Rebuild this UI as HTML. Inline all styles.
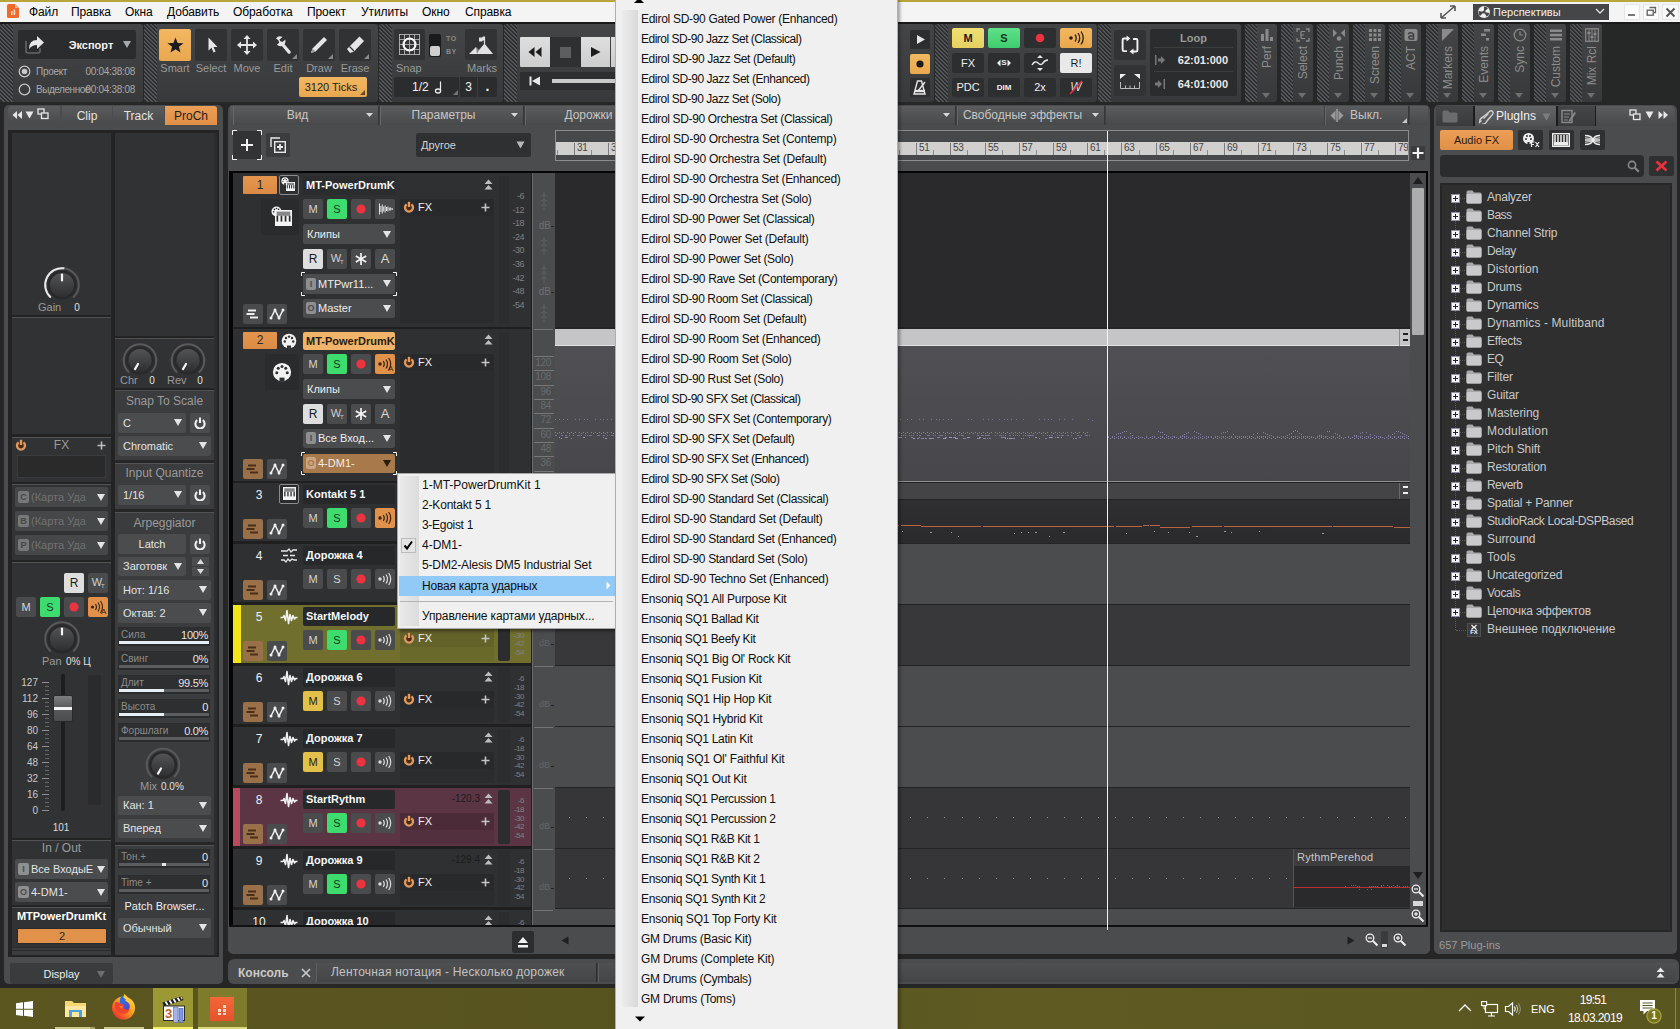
<!DOCTYPE html>
<html lang="ru"><head><meta charset="utf-8"><title>Cakewalk</title>
<style>
html,body{margin:0;padding:0}
body{width:1680px;height:1029px;position:relative;overflow:hidden;background:#262626;
font-family:"Liberation Sans",sans-serif;font-size:12px;color:#ddd}
body div,body svg{position:absolute;box-sizing:border-box}
.hatch{background:repeating-linear-gradient(45deg,#55575a 0,#55575a 0.9px,#2c2e30 1.1px,#2c2e30 2.7px,#55575a 2.83px)}
.mod{background:linear-gradient(#444546,#38393a);border-radius:3px}
.btn{background:#323334;border-radius:2px}
.dd{background:#4a4c4e;border-radius:2px}
.b{font-weight:bold}
.c{text-align:center}
</style></head>
<body>
<div style="left:0px;top:0px;width:1680px;height:22px;background:#f4f4f4;"></div>
<div style="left:0px;top:0px;width:1680px;height:2px;background:#b9a63a;"></div>
<svg style="left:6px;top:3px;" width="14" height="16" viewBox="0 0 14 16"><path d="M1 2.5Q1 1 2.5 1H9l4 4v8.5Q13 15 11.5 15h-9Q1 15 1 13.5Z" fill="#f06a2a"/><path d="M9 1l4 4H9Z" fill="#f9b08a"/><rect x="5" y="8" width="1.6" height="4" fill="#ffd9c4"/><rect x="7.6" y="6.5" width="1.6" height="5.5" fill="#ffd9c4"/></svg>
<div style="left:29px;top:4px;font-size:12px;color:#000;white-space:nowrap;height:17px;line-height:17px;letter-spacing:-0.100px;">Файл</div>
<div style="left:71px;top:4px;font-size:12px;color:#000;white-space:nowrap;height:17px;line-height:17px;letter-spacing:-0.100px;">Правка</div>
<div style="left:125px;top:4px;font-size:12px;color:#000;white-space:nowrap;height:17px;line-height:17px;letter-spacing:-0.100px;">Окна</div>
<div style="left:167px;top:4px;font-size:12px;color:#000;white-space:nowrap;height:17px;line-height:17px;letter-spacing:-0.100px;">Добавить</div>
<div style="left:233px;top:4px;font-size:12px;color:#000;white-space:nowrap;height:17px;line-height:17px;letter-spacing:-0.100px;">Обработка</div>
<div style="left:307px;top:4px;font-size:12px;color:#000;white-space:nowrap;height:17px;line-height:17px;letter-spacing:-0.100px;">Проект</div>
<div style="left:361px;top:4px;font-size:12px;color:#000;white-space:nowrap;height:17px;line-height:17px;letter-spacing:-0.100px;">Утилиты</div>
<div style="left:422px;top:4px;font-size:12px;color:#000;white-space:nowrap;height:17px;line-height:17px;letter-spacing:-0.100px;">Окно</div>
<div style="left:465px;top:4px;font-size:12px;color:#000;white-space:nowrap;height:17px;line-height:17px;letter-spacing:-0.100px;">Справка</div>
<svg style="left:1439px;top:4px;" width="18" height="16" viewBox="0 0 18 16"><path d="M2 14L16 2M2 14v-5M2 14h5M16 2v5M16 2h-5" stroke="#555" stroke-width="1.6" fill="none"/></svg>
<div style="left:1473px;top:4px;width:136px;height:16px;background:#454647;"></div>
<svg style="left:1477px;top:5px;" width="14" height="14" viewBox="0 0 14 14"><circle cx="7" cy="7" r="6" fill="#eee"/><path d="M7 7L7 1.5A5.5 5.5 0 0 1 11 3.2Z M7 7L12.4 8A5.5 5.5 0 0 1 9.7 11.8Z M7 7L3 11A5.5 5.5 0 0 1 1.6 6Z" fill="#454647"/><circle cx="7" cy="7" r="1.6" fill="#454647"/></svg>
<div style="left:1493px;top:4px;font-size:11px;color:#f0f0f0;white-space:nowrap;height:16px;line-height:16px;">Перспективы</div>
<svg style="left:1595px;top:8px;" width="10" height="8" viewBox="0 0 10 8"><path d="M1 1l4 4 4-4" stroke="#ddd" stroke-width="1.3" fill="none"/></svg>
<div style="left:1624px;top:4px;width:16px;height:16px;background:#fbfbfb;border:1px solid #e6e6e6;"></div>
<div style="left:1628px;top:14px;width:7px;height:2px;background:#777;"></div>
<div style="left:1643px;top:4px;width:16px;height:16px;background:#fbfbfb;border:1px solid #e6e6e6;"></div>
<svg style="left:1646px;top:6px;" width="11" height="11" viewBox="0 0 11 11"><path d="M3.5 1.5h6v5h-2" stroke="#666" stroke-width="1.3" fill="none"/><rect x="1.2" y="4.2" width="6" height="5" stroke="#666" stroke-width="1.4" fill="none"/></svg>
<div style="left:1662px;top:4px;width:17px;height:16px;background:#fbfbfb;border:1px solid #e6e6e6;"></div>
<svg style="left:1665px;top:7px;" width="11" height="11" viewBox="0 0 11 11"><path d="M1.5 1.5l8 8M9.5 1.5l-8 8" stroke="#555" stroke-width="2" fill="none"/></svg>
<div style="left:0px;top:22px;width:1680px;height:82px;background:#262727;"></div>
<div style="left:0px;top:22px;width:1680px;height:2px;background:#1a1a1a;"></div>
<div class="mod" style="left:0px;top:24px;width:143px;height:78px;"></div>
<div class="hatch" style="left:0px;top:24px;width:13px;height:78px;border-radius:3px 0 0 3px;"></div>
<div style="left:18px;top:30px;width:118px;height:29px;background:#2b2c2d;border-radius:2px;"></div>
<svg style="left:22px;top:33px;" width="24" height="24" viewBox="0 0 24 24"><path d="M4 8v10q0 2 2 2h10q2 0 2-2v-3" stroke="#666" stroke-width="1.6" fill="none"/><path d="M7 16q0-9 8-9V3l7 6.5-7 6.5v-4q-5 0-8 4z" fill="#e8e8e8"/></svg>
<div class="b" style="left:54px;top:38px;font-size:11px;color:#f4f4f4;white-space:nowrap;width:74px;height:15px;line-height:15px;text-align:center;">Экспорт</div>
<svg style="left:122px;top:40px;" width="10" height="9" viewBox="0 0 10 9"><path d="M1 1h8L5 8z" fill="#aaa"/></svg>
<svg style="left:18px;top:65px;" width="13" height="13" viewBox="0 0 13 13"><circle cx="6.5" cy="6.5" r="5.3" stroke="#c8c8c8" stroke-width="1.2" fill="none"/><circle cx="6.5" cy="6.5" r="2.8" fill="#c8c8c8"/></svg>
<svg style="left:18px;top:83px;" width="13" height="13" viewBox="0 0 13 13"><circle cx="6.5" cy="6.5" r="5.3" stroke="#c8c8c8" stroke-width="1.2" fill="none"/></svg>
<div style="left:36px;top:65px;font-size:10px;color:#a9a9a9;white-space:nowrap;height:13px;line-height:13px;letter-spacing:-0.3px;">Проект</div>
<div style="left:36px;top:83px;font-size:10px;color:#a9a9a9;white-space:nowrap;height:13px;line-height:13px;letter-spacing:-0.45px;">Выделенное</div>
<div style="left:85px;top:65px;font-size:10px;color:#a9a9a9;white-space:nowrap;width:50px;height:13px;line-height:13px;text-align:right;letter-spacing:-0.3px;">00:04:38:08</div>
<div style="left:85px;top:83px;font-size:10px;color:#a9a9a9;white-space:nowrap;width:50px;height:13px;line-height:13px;text-align:right;letter-spacing:-0.3px;">00:04:38:08</div>
<div class="mod" style="left:144px;top:24px;width:234px;height:78px;"></div>
<div class="hatch" style="left:144px;top:24px;width:13px;height:78px;border-radius:3px 0 0 3px;"></div>
<div style="left:159px;top:29px;width:32px;height:32px;background:linear-gradient(#f3b761,#e9a84f);border-radius:2px;"></div>
<div style="left:153px;top:61px;font-size:11px;color:#9a9a9a;white-space:nowrap;width:44px;height:15px;line-height:15px;text-align:center;">Smart</div>
<div style="left:195px;top:29px;width:32px;height:32px;background:#313233;border-radius:2px;"></div>
<div style="left:189px;top:61px;font-size:11px;color:#9a9a9a;white-space:nowrap;width:44px;height:15px;line-height:15px;text-align:center;">Select</div>
<div style="left:231px;top:29px;width:32px;height:32px;background:#313233;border-radius:2px;"></div>
<div style="left:225px;top:61px;font-size:11px;color:#9a9a9a;white-space:nowrap;width:44px;height:15px;line-height:15px;text-align:center;">Move</div>
<div style="left:267px;top:29px;width:32px;height:32px;background:#313233;border-radius:2px;"></div>
<div style="left:261px;top:61px;font-size:11px;color:#9a9a9a;white-space:nowrap;width:44px;height:15px;line-height:15px;text-align:center;">Edit</div>
<svg style="left:292px;top:54px;" width="5" height="5" viewBox="0 0 5 5"><path d="M5 0v5H0z" fill="#8a8a8a"/></svg>
<div style="left:303px;top:29px;width:32px;height:32px;background:#313233;border-radius:2px;"></div>
<div style="left:297px;top:61px;font-size:11px;color:#9a9a9a;white-space:nowrap;width:44px;height:15px;line-height:15px;text-align:center;">Draw</div>
<svg style="left:328px;top:54px;" width="5" height="5" viewBox="0 0 5 5"><path d="M5 0v5H0z" fill="#8a8a8a"/></svg>
<div style="left:339px;top:29px;width:32px;height:32px;background:#313233;border-radius:2px;"></div>
<div style="left:333px;top:61px;font-size:11px;color:#9a9a9a;white-space:nowrap;width:44px;height:15px;line-height:15px;text-align:center;">Erase</div>
<svg style="left:364px;top:54px;" width="5" height="5" viewBox="0 0 5 5"><path d="M5 0v5H0z" fill="#8a8a8a"/></svg>
<svg style="left:159px;top:29px;" width="32" height="32" viewBox="0 0 32 32"><path d="M16.500 8.500l2.100 5.400 5.900.300-4.600 3.600 1.600 5.700-5-3.300-5 3.300 1.600-5.700-4.600-3.600 5.900-.300z" fill="#1b1b1b"/></svg>
<svg style="left:195px;top:29px;" width="32" height="32" viewBox="0 0 32 32"><path d="M13.500 8.500v13l3-2.800 2.100 4.800 2-.900-2.100-4.700h4z" fill="#e6e6e6"/></svg>
<svg style="left:231px;top:29px;" width="32" height="32" viewBox="0 0 32 32"><path d="M16 6l3.500 4h-2.600v5.100H22v-2.600l4 3.500-4 3.500v-2.600h-5.100V22h2.600L16 26l-3.500-4h2.600v-5.100H10v2.600L6 16l4-3.500v2.600h5.100V10h-2.600z" fill="#e6e6e6"/></svg>
<svg style="left:267px;top:29px;" width="32" height="32" viewBox="0 0 32 32"><path d="M9 9.500q2.500-3.500 6.500-1.500l-3 2.500 1 2 2.500.3 2.200-2.300q1 2.500-.7 4.700l6 7q.8 1.300-.4 2.300-1.200.8-2.200-.3l-6-7.200q-3 .8-5-1.500l2.300-1.800-.8-2.400z" fill="#e6e6e6"/></svg>
<svg style="left:303px;top:29px;" width="32" height="32" viewBox="0 0 32 32"><path d="M8 24l1.500-4.500L21 8l3 3-11.500 11.500z" fill="#e6e6e6"/><path d="M8 24l1.500-4.500 3 3z" fill="#999"/></svg>
<svg style="left:339px;top:29px;" width="32" height="32" viewBox="0 0 32 32"><path d="M8 20l3 4 4-1.500L25 12l-4.500-4.500L10 18z" fill="#e6e6e6"/><path d="M10.500 17.500l4.500 4.500" stroke="#313233" stroke-width="1.2"/></svg>
<div style="left:299px;top:77px;width:68px;height:20px;background:linear-gradient(#f3b761,#e9a84f);border-radius:2px;"></div>
<div style="left:299px;top:77px;font-size:11px;color:#222;white-space:nowrap;width:64px;height:20px;line-height:20px;text-align:center;">3120 Ticks</div>
<svg style="left:360px;top:90px;" width="5" height="5" viewBox="0 0 5 5"><path d="M5 0v5H0z" fill="#6b4a1e"/></svg>
<div class="mod" style="left:379px;top:24px;width:124px;height:78px;"></div>
<div class="hatch" style="left:379px;top:24px;width:13px;height:78px;border-radius:3px 0 0 3px;"></div>
<div style="left:394px;top:29px;width:31px;height:31px;background:#323334;border-radius:2px;"></div>
<svg style="left:394px;top:29px;" width="31" height="31" viewBox="0 0 31 31"><path d="M5.5 5v21M5 5.5h21" stroke="#b4b4b4" stroke-width="0.900"/><path d="M10.5 5v21M5 10.5h21" stroke="#b4b4b4" stroke-width="0.900"/><path d="M15.5 5v21M5 15.5h21" stroke="#b4b4b4" stroke-width="0.900"/><path d="M20.5 5v21M5 20.5h21" stroke="#b4b4b4" stroke-width="0.900"/><path d="M25.5 5v21M5 25.5h21" stroke="#b4b4b4" stroke-width="0.900"/><circle cx="15.500" cy="15.500" r="6" stroke="#f6f6f6" stroke-width="2.200" fill="none"/></svg>
<div style="left:429px;top:34px;width:12px;height:23px;background:#1b1b1b;border-radius:2px;"></div>
<div style="left:430px;top:46px;width:10px;height:10px;background:#cfcfcf;border-radius:2px;"></div>
<div class="b" style="left:446px;top:34px;font-size:7px;color:#8a8a8a;white-space:nowrap;height:9px;line-height:9px;letter-spacing:0.5px;">TO</div>
<div class="b" style="left:446px;top:47px;font-size:7px;color:#8a8a8a;white-space:nowrap;height:9px;line-height:9px;letter-spacing:0.5px;">BY</div>
<div style="left:465px;top:29px;width:32px;height:31px;background:#323334;border-radius:2px;"></div>
<svg style="left:465px;top:29px;" width="32" height="31" viewBox="0 0 32 31"><path d="M4 25l7-7 3 3 5.500-6.500L28 25z" fill="#e2e2e2"/><path d="M11 18l3 3-2 4z" fill="#323334" opacity=".55"/><path d="M19.500 15V8" stroke="#e2e2e2" stroke-width="1.2"/><path d="M14 8.500h3l1-1h2v4h-2l-1 1h-3z" fill="#e2e2e2"/></svg>
<div style="left:396px;top:61px;font-size:11px;color:#9a9a9a;white-space:nowrap;height:15px;line-height:15px;">Snap</div>
<div style="left:467px;top:61px;font-size:11px;color:#9a9a9a;white-space:nowrap;height:15px;line-height:15px;">Marks</div>
<div style="left:394px;top:77px;width:65px;height:20px;background:#2b2c2d;border-radius:2px;"></div>
<div style="left:460px;top:77px;width:17px;height:20px;background:#2b2c2d;"></div>
<div style="left:478px;top:77px;width:19px;height:20px;background:#2b2c2d;border-radius:0 2px 2px 0;"></div>
<div style="left:412px;top:77px;font-size:12px;color:#f0f0f0;white-space:nowrap;height:20px;line-height:20px;">1/2</div>
<svg style="left:434px;top:80px;" width="10" height="14" viewBox="0 0 10 14"><ellipse cx="4" cy="11" rx="2.600" ry="2" stroke="#eee" stroke-width="1.3" fill="none"/><path d="M6.500 11V1.500" stroke="#eee" stroke-width="1.2"/></svg>
<svg style="left:453px;top:90px;" width="5" height="5" viewBox="0 0 5 5"><path d="M5 0v5H0z" fill="#777"/></svg>
<div style="left:460px;top:77px;font-size:12px;color:#f0f0f0;white-space:nowrap;width:17px;height:20px;line-height:20px;text-align:center;">3</div>
<div class="b" style="left:478px;top:76px;font-size:14px;color:#f0f0f0;white-space:nowrap;width:19px;height:20px;line-height:20px;text-align:center;">.</div>
<div class="mod" style="left:504px;top:24px;width:430px;height:78px;"></div>
<div class="hatch" style="left:504px;top:24px;width:13px;height:78px;border-radius:3px 0 0 3px;"></div>
<div style="left:520px;top:37px;width:30px;height:30px;background:linear-gradient(#dfdfdf,#cdcdcd);border-radius:1px 0 0 1px;"></div>
<div style="left:550px;top:37px;width:31px;height:30px;background:#2f3031;"></div>
<div style="left:581px;top:37px;width:29px;height:30px;background:linear-gradient(#dfdfdf,#cdcdcd);"></div>
<div style="left:611px;top:37px;width:30px;height:30px;background:linear-gradient(#dfdfdf,#cdcdcd);"></div>
<svg style="left:520px;top:37px;" width="30" height="30" viewBox="0 0 30 30"><path d="M14.500 10v10l-6-5zM21.500 10v10l-6-5z" fill="#1c1c1c"/></svg>
<div style="left:560px;top:47px;width:11px;height:11px;background:#5d5e5f;"></div>
<svg style="left:581px;top:37px;" width="30" height="30" viewBox="0 0 30 30"><path d="M10 10v10l9.500-5z" fill="#1c1c1c"/></svg>
<div style="left:520px;top:72px;width:100px;height:18px;background:#2d2e2f;"></div>
<svg style="left:529px;top:76px;" width="12" height="10" viewBox="0 0 12 10"><rect x="0.500" y="0.500" width="2" height="9" fill="#e8e8e8"/><path d="M11 0.500v9L3 5z" fill="#e8e8e8"/></svg>
<div style="left:552px;top:79px;width:66px;height:4px;background:#c9c9c9;"></div>
<div style="left:910px;top:30px;width:20px;height:19px;background:#2d2e2f;border-radius:2px;"></div>
<svg style="left:910px;top:30px;" width="20" height="19" viewBox="0 0 20 19"><path d="M7 5v9l8-4.500z" fill="#e6e6e6"/></svg>
<div style="left:910px;top:54px;width:20px;height:20px;background:linear-gradient(#f3b761,#e9a84f);border-radius:2px;"></div>
<svg style="left:910px;top:54px;" width="20" height="20" viewBox="0 0 20 20"><circle cx="10" cy="10" r="3.600" fill="#1a1a1a"/></svg>
<div style="left:910px;top:78px;width:20px;height:19px;background:#2d2e2f;border-radius:2px;"></div>
<svg style="left:910px;top:78px;" width="20" height="19" viewBox="0 0 20 19"><path d="M7.500 3h4l3.500 13H4z" stroke="#e6e6e6" stroke-width="1.400" fill="none"/><path d="M5 13h10" stroke="#e6e6e6" stroke-width="2.400"/><path d="M8 13l7-9" stroke="#e6e6e6" stroke-width="1.400"/></svg>
<div class="mod" style="left:935px;top:24px;width:162px;height:78px;"></div>
<div class="hatch" style="left:935px;top:24px;width:13px;height:78px;border-radius:3px 0 0 3px;"></div>
<div style="left:952px;top:28px;width:32px;height:20px;background:linear-gradient(#f0df74,#e6d160);border-radius:2px;"></div>
<div style="left:988px;top:28px;width:32px;height:20px;background:linear-gradient(#5fe08a,#3fcd6e);border-radius:2px;"></div>
<div style="left:1024px;top:28px;width:32px;height:20px;background:#2d2e2f;border-radius:2px;"></div>
<div style="left:1060px;top:28px;width:32px;height:20px;background:linear-gradient(#f3b761,#e9a84f);border-radius:2px;"></div>
<div style="left:952px;top:53px;width:32px;height:20px;background:#2d2e2f;border-radius:2px;"></div>
<div style="left:988px;top:53px;width:32px;height:20px;background:#2d2e2f;border-radius:2px;"></div>
<div style="left:1024px;top:53px;width:32px;height:20px;background:#2d2e2f;border-radius:2px;"></div>
<div style="left:1060px;top:53px;width:32px;height:20px;background:#e9e9e9;border-radius:2px;"></div>
<div style="left:952px;top:78px;width:32px;height:19px;background:#2d2e2f;border-radius:2px;"></div>
<div style="left:988px;top:78px;width:32px;height:19px;background:#2d2e2f;border-radius:2px;"></div>
<div style="left:1024px;top:78px;width:32px;height:19px;background:#2d2e2f;border-radius:2px;"></div>
<div style="left:1060px;top:78px;width:32px;height:19px;background:#2d2e2f;border-radius:2px;"></div>
<div class="b" style="left:952px;top:28px;font-size:11px;color:#1c1c1c;white-space:nowrap;width:32px;height:20px;line-height:20px;text-align:center;">M</div>
<div class="b" style="left:988px;top:28px;font-size:11px;color:#12351f;white-space:nowrap;width:32px;height:20px;line-height:20px;text-align:center;">S</div>
<svg style="left:1024px;top:28px;" width="32" height="20" viewBox="0 0 32 20"><circle cx="16" cy="10" r="4.300" fill="#ee3340"/></svg>
<svg style="left:1060px;top:28px;" width="32" height="20" viewBox="0 0 32 20"><circle cx="11" cy="10" r="1.800" fill="#2a2012"/><path d="M15 6.500q2.500 3.500 0 7M18 5q3.500 5 0 10M21 3.500q4.500 6.500 0 13" stroke="#2a2012" stroke-width="1.300" fill="none"/></svg>
<div style="left:952px;top:53px;font-size:11px;color:#efefef;white-space:nowrap;width:32px;height:20px;line-height:20px;text-align:center;">FX</div>
<svg style="left:988px;top:53px;" width="32" height="20" viewBox="0 0 32 20"><path d="M9 10l3.500-3.500v7zM23 10l-3.500-3.500v7z" fill="#eee"/></svg>
<div class="b" style="left:988px;top:53px;font-size:8px;color:#eee;white-space:nowrap;width:32px;height:20px;line-height:20px;text-align:center;">S</div>
<svg style="left:1024px;top:53px;" width="32" height="20" viewBox="0 0 32 20"><path d="M16 2l3 3h-6zM16 18l3-3h-6z" fill="#e8e8e8"/><path d="M8 12q3-5 6-2t5 0 5-3" stroke="#e8e8e8" stroke-width="1.400" fill="none"/></svg>
<div style="left:1060px;top:53px;font-size:11px;color:#1c1c1c;white-space:nowrap;width:32px;height:20px;line-height:20px;text-align:center;">R!</div>
<div style="left:952px;top:78px;font-size:11px;color:#efefef;white-space:nowrap;width:32px;height:19px;line-height:19px;text-align:center;">PDC</div>
<div class="b" style="left:988px;top:78px;font-size:8px;color:#efefef;white-space:nowrap;width:32px;height:19px;line-height:19px;text-align:center;">DIM</div>
<div style="left:1024px;top:78px;font-size:11px;color:#efefef;white-space:nowrap;width:32px;height:19px;line-height:19px;text-align:center;">2x</div>
<div style="left:1060px;top:78px;font-size:12px;color:#d8d8d8;white-space:nowrap;width:32px;height:19px;line-height:19px;text-align:center;font-style:italic;">W</div>
<svg style="left:1060px;top:78px;" width="32" height="19" viewBox="0 0 32 19"><path d="M10 16L22 3" stroke="#e0303c" stroke-width="1.600"/></svg>
<div class="mod" style="left:1098px;top:24px;width:143px;height:78px;"></div>
<div class="hatch" style="left:1098px;top:24px;width:13px;height:78px;border-radius:3px 0 0 3px;"></div>
<div style="left:1114px;top:30px;width:32px;height:30px;background:#323334;border-radius:2px;"></div>
<div style="left:1114px;top:65px;width:32px;height:31px;background:#323334;border-radius:2px;"></div>
<svg style="left:1114px;top:30px;" width="32" height="30" viewBox="0 0 32 30"><g transform="translate(2.100 2.400) scale(0.870)"><path d="M13 7H9q-1.500 0-1.500 1.500V20q0 1.500 1.500 1.500h3.500M19 22h4q1.500 0 1.500-1.500V9q0-1.500-1.500-1.500h-3.500" stroke="#f0f0f0" stroke-width="2.200" fill="none"/><path d="M12 3.500l4.500 3.500-4.500 3.500zM20 18.500L15.500 22l4.500 3.500z" fill="#f0f0f0"/></g></svg>
<svg style="left:1114px;top:65px;" width="32" height="31" viewBox="0 0 32 31"><path d="M6 9h6L6 14zM26 9h-6l6 5z" fill="#eee"/><path d="M6.500 17v6.500h19V17M11.500 20.500v3M16 20.500v3M20.500 20.500v3" stroke="#bbb" stroke-width="1" fill="none"/></svg>
<div style="left:1150px;top:29px;width:87px;height:67px;background:#2b2c2d;border-radius:2px;"></div>
<div style="left:1154px;top:47px;width:79px;height:1px;background:#3c3d3e;"></div>
<div style="left:1154px;top:71px;width:79px;height:1px;background:#3c3d3e;"></div>
<div class="b" style="left:1150px;top:30px;font-size:11px;color:#9a9a9a;white-space:nowrap;width:87px;height:16px;line-height:16px;text-align:center;">Loop</div>
<div class="b" style="left:1160px;top:52px;font-size:11px;color:#e8e8e8;white-space:nowrap;width:68px;height:16px;line-height:16px;text-align:right;">62:01:000</div>
<div class="b" style="left:1160px;top:76px;font-size:11px;color:#e8e8e8;white-space:nowrap;width:68px;height:16px;line-height:16px;text-align:right;">64:01:000</div>
<svg style="left:1154px;top:54px;" width="12" height="12" viewBox="0 0 12 12"><rect x="1" y="1" width="1.500" height="10" fill="#777"/><path d="M4 4.500h3V2l4 4-4 4V7.500H4z" fill="#777"/></svg>
<svg style="left:1154px;top:78px;" width="12" height="12" viewBox="0 0 12 12"><rect x="9.500" y="1" width="1.500" height="10" fill="#777"/><path d="M1 4.500h3V2l4 4-4 4V7.500H1z" fill="#777"/></svg>
<div class="mod" style="left:1245px;top:24px;width:32px;height:78px;"></div>
<div class="hatch" style="left:1245px;top:24px;width:12px;height:78px;border-radius:3px 0 0 3px;"></div>
<svg style="left:1260px;top:28px;" width="14" height="14" viewBox="0 0 14 14"><rect x="1" y="6" width="3" height="7" fill="#8a8a8a"/><rect x="5.500" y="1" width="3" height="12" fill="#8a8a8a"/><rect x="10" y="9" width="3" height="4" fill="#8a8a8a"/></svg>
<div style="left:1259px;top:46px;width:16px;height:50px;"><div style="left:0;top:50px;width:50px;height:16px;line-height:16px;font-size:12px;color:#8d8d8d;transform-origin:0 0;transform:rotate(-90deg);text-align:right;white-space:nowrap;">Perf</div></div>
<svg style="left:1262px;top:93px;" width="8" height="5" viewBox="0 0 8 5"><path d="M0 0h8L4 5z" fill="#6f6f6f"/></svg>
<div class="mod" style="left:1281px;top:24px;width:32px;height:78px;"></div>
<div class="hatch" style="left:1281px;top:24px;width:12px;height:78px;border-radius:3px 0 0 3px;"></div>
<svg style="left:1296px;top:28px;" width="14" height="14" viewBox="0 0 14 14"><path d="M1 4V1h3M10 1h3v3M13 10v3h-3M4 13H1v-3" stroke="#8a8a8a" stroke-width="1.300" fill="none"/><path d="M5 3.500h4M5 7h3M5 10.500h4M5 3.500v7" stroke="#8a8a8a" stroke-width="1.200"/></svg>
<div style="left:1295px;top:46px;width:16px;height:50px;"><div style="left:0;top:50px;width:50px;height:16px;line-height:16px;font-size:12px;color:#8d8d8d;transform-origin:0 0;transform:rotate(-90deg);text-align:right;white-space:nowrap;">Select</div></div>
<svg style="left:1298px;top:93px;" width="8" height="5" viewBox="0 0 8 5"><path d="M0 0h8L4 5z" fill="#6f6f6f"/></svg>
<div class="mod" style="left:1317px;top:24px;width:32px;height:78px;"></div>
<div class="hatch" style="left:1317px;top:24px;width:12px;height:78px;border-radius:3px 0 0 3px;"></div>
<svg style="left:1332px;top:28px;" width="14" height="14" viewBox="0 0 14 14"><path d="M1 1l4 4-4 4zM13 1L9 5l4 4z" fill="#8a8a8a"/><circle cx="7" cy="10.500" r="2.300" fill="#8a8a8a"/></svg>
<div style="left:1331px;top:46px;width:16px;height:50px;"><div style="left:0;top:50px;width:50px;height:16px;line-height:16px;font-size:12px;color:#8d8d8d;transform-origin:0 0;transform:rotate(-90deg);text-align:right;white-space:nowrap;">Punch</div></div>
<svg style="left:1334px;top:93px;" width="8" height="5" viewBox="0 0 8 5"><path d="M0 0h8L4 5z" fill="#6f6f6f"/></svg>
<div class="mod" style="left:1353px;top:24px;width:32px;height:78px;"></div>
<div class="hatch" style="left:1353px;top:24px;width:12px;height:78px;border-radius:3px 0 0 3px;"></div>
<svg style="left:1368px;top:28px;" width="14" height="14" viewBox="0 0 14 14"><rect x="1.0" y="1.0" width="3" height="3" fill="#8a8a8a"/><rect x="1.0" y="5.5" width="3" height="3" fill="#8a8a8a"/><rect x="1.0" y="10.0" width="3" height="3" fill="#8a8a8a"/><rect x="5.5" y="1.0" width="3" height="3" fill="#8a8a8a"/><rect x="5.5" y="5.5" width="3" height="3" fill="#8a8a8a"/><rect x="5.5" y="10.0" width="3" height="3" fill="#8a8a8a"/><rect x="10.0" y="1.0" width="3" height="3" fill="#8a8a8a"/><rect x="10.0" y="5.5" width="3" height="3" fill="#8a8a8a"/><rect x="10.0" y="10.0" width="3" height="3" fill="#8a8a8a"/></svg>
<div style="left:1367px;top:46px;width:16px;height:50px;"><div style="left:0;top:50px;width:50px;height:16px;line-height:16px;font-size:12px;color:#8d8d8d;transform-origin:0 0;transform:rotate(-90deg);text-align:right;white-space:nowrap;">Screen</div></div>
<svg style="left:1370px;top:93px;" width="8" height="5" viewBox="0 0 8 5"><path d="M0 0h8L4 5z" fill="#6f6f6f"/></svg>
<div class="mod" style="left:1389px;top:24px;width:32px;height:78px;"></div>
<div class="hatch" style="left:1389px;top:24px;width:12px;height:78px;border-radius:3px 0 0 3px;"></div>
<svg style="left:1404px;top:28px;" width="14" height="14" viewBox="0 0 14 14"><rect x="0.500" y="1" width="13" height="12" rx="2" fill="#8a8a8a"/><path d="M4 6q3-2.500 5.500 0v5H6q-2.500-1.500 0-3h3.500" stroke="#3d3e3f" stroke-width="1.500" fill="none"/></svg>
<div style="left:1403px;top:46px;width:16px;height:50px;"><div style="left:0;top:50px;width:50px;height:16px;line-height:16px;font-size:12px;color:#8d8d8d;transform-origin:0 0;transform:rotate(-90deg);text-align:right;white-space:nowrap;">ACT</div></div>
<svg style="left:1406px;top:93px;" width="8" height="5" viewBox="0 0 8 5"><path d="M0 0h8L4 5z" fill="#6f6f6f"/></svg>
<div class="mod" style="left:1426px;top:24px;width:32px;height:78px;"></div>
<div class="hatch" style="left:1426px;top:24px;width:12px;height:78px;border-radius:3px 0 0 3px;"></div>
<svg style="left:1441px;top:28px;" width="14" height="14" viewBox="0 0 14 14"><path d="M1 1h12L1 13z" fill="#8a8a8a"/></svg>
<div style="left:1440px;top:46px;width:16px;height:50px;"><div style="left:0;top:50px;width:50px;height:16px;line-height:16px;font-size:12px;color:#8d8d8d;transform-origin:0 0;transform:rotate(-90deg);text-align:right;white-space:nowrap;">Markers</div></div>
<svg style="left:1443px;top:93px;" width="8" height="5" viewBox="0 0 8 5"><path d="M0 0h8L4 5z" fill="#6f6f6f"/></svg>
<div class="mod" style="left:1462px;top:24px;width:32px;height:78px;"></div>
<div class="hatch" style="left:1462px;top:24px;width:12px;height:78px;border-radius:3px 0 0 3px;"></div>
<svg style="left:1477px;top:28px;" width="14" height="14" viewBox="0 0 14 14"><rect x="7" y="1" width="6" height="2.500" fill="#8a8a8a"/><rect x="4" y="5.500" width="5" height="2.500" fill="#8a8a8a"/><rect x="9" y="10" width="3" height="2.500" fill="#8a8a8a"/></svg>
<div style="left:1476px;top:46px;width:16px;height:50px;"><div style="left:0;top:50px;width:50px;height:16px;line-height:16px;font-size:12px;color:#8d8d8d;transform-origin:0 0;transform:rotate(-90deg);text-align:right;white-space:nowrap;">Events</div></div>
<svg style="left:1479px;top:93px;" width="8" height="5" viewBox="0 0 8 5"><path d="M0 0h8L4 5z" fill="#6f6f6f"/></svg>
<div class="mod" style="left:1498px;top:24px;width:32px;height:78px;"></div>
<div class="hatch" style="left:1498px;top:24px;width:12px;height:78px;border-radius:3px 0 0 3px;"></div>
<svg style="left:1513px;top:28px;" width="14" height="14" viewBox="0 0 14 14"><circle cx="7" cy="7" r="5.800" stroke="#8a8a8a" stroke-width="1.300" fill="none"/><path d="M7 3.500V7h3" stroke="#8a8a8a" stroke-width="1.200" fill="none"/></svg>
<div style="left:1512px;top:46px;width:16px;height:50px;"><div style="left:0;top:50px;width:50px;height:16px;line-height:16px;font-size:12px;color:#8d8d8d;transform-origin:0 0;transform:rotate(-90deg);text-align:right;white-space:nowrap;">Sync</div></div>
<svg style="left:1515px;top:93px;" width="8" height="5" viewBox="0 0 8 5"><path d="M0 0h8L4 5z" fill="#6f6f6f"/></svg>
<div class="mod" style="left:1534px;top:24px;width:32px;height:78px;"></div>
<div class="hatch" style="left:1534px;top:24px;width:12px;height:78px;border-radius:3px 0 0 3px;"></div>
<svg style="left:1549px;top:28px;" width="14" height="14" viewBox="0 0 14 14"><rect x="1" y="1.500" width="12" height="2.500" fill="#8a8a8a"/><rect x="1" y="5.800" width="12" height="2.500" fill="#8a8a8a"/><rect x="1" y="10" width="12" height="2.500" fill="#8a8a8a"/></svg>
<div style="left:1548px;top:46px;width:16px;height:50px;"><div style="left:0;top:50px;width:50px;height:16px;line-height:16px;font-size:12px;color:#8d8d8d;transform-origin:0 0;transform:rotate(-90deg);text-align:right;white-space:nowrap;">Custom</div></div>
<svg style="left:1551px;top:93px;" width="8" height="5" viewBox="0 0 8 5"><path d="M0 0h8L4 5z" fill="#6f6f6f"/></svg>
<div class="mod" style="left:1570px;top:24px;width:32px;height:78px;"></div>
<div class="hatch" style="left:1570px;top:24px;width:12px;height:78px;border-radius:3px 0 0 3px;"></div>
<svg style="left:1585px;top:28px;" width="14" height="14" viewBox="0 0 14 14"><rect x="0.700" y="0.700" width="12.600" height="12.600" stroke="#8a8a8a" stroke-width="1.200" fill="none"/><path d="M4 1v12M7 1v12M10 1v12" stroke="#8a8a8a" stroke-width="1"/><rect x="2.500" y="4" width="3" height="2" fill="#8a8a8a"/><rect x="5.500" y="8" width="3" height="2" fill="#8a8a8a"/><rect x="8.500" y="5" width="3" height="2" fill="#8a8a8a"/></svg>
<div style="left:1584px;top:46px;width:16px;height:50px;"><div style="left:0;top:50px;width:50px;height:16px;line-height:16px;font-size:12px;color:#8d8d8d;transform-origin:0 0;transform:rotate(-90deg);text-align:right;white-space:nowrap;">Mix Rcl</div></div>
<svg style="left:1587px;top:93px;" width="8" height="5" viewBox="0 0 8 5"><path d="M0 0h8L4 5z" fill="#6f6f6f"/></svg>
<div style="left:4px;top:105px;width:219px;height:879px;background:#4b4c4d;border-radius:5px;"></div>
<div style="left:8px;top:106px;width:52px;height:19px;background:linear-gradient(#5a5b5c,#48494a);border-radius:3px 0 0 0;"></div>
<svg style="left:12px;top:110px;" width="10" height="10" viewBox="0 0 10 10"><path d="M5 1v8L0.500 5zM10 1v8L5.500 5z" fill="#e8e8e8"/></svg>
<svg style="left:25px;top:111px;" width="9" height="8" viewBox="0 0 9 8"><path d="M0.500 0.500h8L4.500 7.500z" fill="#e8e8e8"/></svg>
<svg style="left:37px;top:108px;" width="12" height="12" viewBox="0 0 12 12"><rect x="1" y="1" width="6" height="5" stroke="#e8e8e8" stroke-width="1.300" fill="none"/><rect x="4.500" y="5" width="6.500" height="5.500" stroke="#e8e8e8" stroke-width="1.300" fill="#4f5051"/></svg>
<div style="left:62px;top:106px;width:50px;height:19px;background:linear-gradient(#5a5b5c,#48494a);"></div>
<div style="left:113px;top:106px;width:51px;height:19px;background:linear-gradient(#5a5b5c,#48494a);"></div>
<div style="left:165px;top:106px;width:52px;height:19px;background:linear-gradient(#ec9f57,#e08f46);border-radius:0 3px 0 0;"></div>
<div style="left:62px;top:107px;font-size:12px;color:#e4e4e4;white-space:nowrap;width:50px;height:19px;line-height:19px;text-align:center;">Clip</div>
<div style="left:113px;top:107px;font-size:12px;color:#e4e4e4;white-space:nowrap;width:51px;height:19px;line-height:19px;text-align:center;">Track</div>
<div style="left:165px;top:107px;font-size:12px;color:#1e1e1e;white-space:nowrap;width:52px;height:19px;line-height:19px;text-align:center;">ProCh</div>
<div style="left:8px;top:130px;width:211px;height:827px;background:#232324;"></div>
<div style="left:12px;top:133px;width:99px;height:822px;background:#3b3c3d;"></div>
<div style="left:115px;top:133px;width:99px;height:822px;background:#3b3c3d;"></div>
<div style="left:214px;top:133px;width:3px;height:822px;background:#2c2d2e;"></div>
<div style="left:12px;top:133px;width:99px;height:184px;background:#313233;"></div>
<svg style="left:12px;top:133px;" width="99" height="184" viewBox="0 0 99 184"><defs><linearGradient id="kg" x1="0" y1="0" x2="0" y2="1"><stop offset="0" stop-color="#525354"/><stop offset="1" stop-color="#2e2f30"/></linearGradient></defs><circle cx="50" cy="152" r="14.5" fill="#29292a"/><path d="M38.76 164.48A16.8 16.8 0 1 1 61.24 164.48" stroke="#58595a" stroke-width="2" fill="none"/><path d="M38.76 164.48A16.8 16.8 0 0 1 52.34 135.36" stroke="#e9e9e9" stroke-width="2" fill="none"/><circle cx="50" cy="152" r="12.0" fill="url(#kg)"/><path d="M50.00 147.50L50.00 141.50" stroke="#f4f4f4" stroke-width="2.200" stroke-linecap="round"/></svg>
<div style="left:38px;top:300px;font-size:11px;color:#9a9a9a;white-space:nowrap;height:14px;line-height:14px;">Gain</div>
<div style="left:70px;top:301px;font-size:10px;color:#e0e0e0;white-space:nowrap;width:14px;height:13px;line-height:13px;text-align:center;">0</div>
<div style="left:12px;top:315px;width:99px;height:2px;background:#232324;"></div>
<div style="left:12px;top:317px;width:99px;height:1px;background:#505152;"></div>
<div style="left:12px;top:318px;width:99px;height:118px;background:#313233;"></div>
<div style="left:12px;top:434px;width:99px;height:3px;background:#232324;"></div>
<div style="left:12px;top:437px;width:99px;height:1px;background:#525354;"></div>
<div style="left:12px;top:438px;width:99px;height:44px;background:#313233;"></div>
<div style="left:12px;top:482px;width:99px;height:2px;background:#232324;"></div>
<div style="left:12px;top:484px;width:99px;height:1px;background:#525354;"></div>
<div style="left:12px;top:485px;width:99px;height:75px;background:#313233;"></div>
<svg style="left:15px;top:439px;" width="12" height="12" viewBox="0 0 12 12"><circle cx="6" cy="6.500" r="4" fill="#4a2c12"/><path d="M3.600 3.400A4 4 0 1 0 8.400 3.400" stroke="#dc9a62" stroke-width="2.400" fill="none"/><path d="M6 0.800v5.200" stroke="#dc9a62" stroke-width="2.400"/></svg>
<div style="left:12px;top:438px;font-size:12px;color:#9a9a9a;white-space:nowrap;width:99px;height:15px;line-height:15px;text-align:center;">FX</div>
<svg style="left:97px;top:441px;" width="9" height="9" viewBox="0 0 9 9"><path d="M4.500 0.500v8M0.500 4.500h8" stroke="#bdbdbd" stroke-width="1.600"/></svg>
<div style="left:17px;top:455px;width:89px;height:23px;background:#2a2a2b;border:1px solid #3a3b3c;"></div>
<div style="left:15px;top:487px;width:93px;height:20px;background:#464748;border-radius:2px;"></div>
<div style="left:18px;top:491px;width:11px;height:12px;background:#777879;border-radius:2px;"></div>
<div class="b" style="left:18px;top:491px;font-size:9px;color:#464748;white-space:nowrap;width:11px;height:12px;line-height:12px;text-align:center;">C</div>
<div style="left:31px;top:487px;font-size:11px;color:#717273;white-space:nowrap;height:20px;line-height:20px;">(Карта Уда</div>
<svg style="left:97px;top:494px;" width="8" height="7" viewBox="0 0 8 7"><path d="M0 0h8L4 7z" fill="#e4e4e4"/></svg>
<div style="left:15px;top:511px;width:93px;height:20px;background:#464748;border-radius:2px;"></div>
<div style="left:18px;top:515px;width:11px;height:12px;background:#777879;border-radius:2px;"></div>
<div class="b" style="left:18px;top:515px;font-size:9px;color:#464748;white-space:nowrap;width:11px;height:12px;line-height:12px;text-align:center;">B</div>
<div style="left:31px;top:511px;font-size:11px;color:#717273;white-space:nowrap;height:20px;line-height:20px;">(Карта Уда</div>
<svg style="left:97px;top:518px;" width="8" height="7" viewBox="0 0 8 7"><path d="M0 0h8L4 7z" fill="#e4e4e4"/></svg>
<div style="left:15px;top:535px;width:93px;height:20px;background:#464748;border-radius:2px;"></div>
<div style="left:18px;top:539px;width:11px;height:12px;background:#777879;border-radius:2px;"></div>
<div class="b" style="left:18px;top:539px;font-size:9px;color:#464748;white-space:nowrap;width:11px;height:12px;line-height:12px;text-align:center;">P</div>
<div style="left:31px;top:535px;font-size:11px;color:#717273;white-space:nowrap;height:20px;line-height:20px;">(Карта Уда</div>
<svg style="left:97px;top:542px;" width="8" height="7" viewBox="0 0 8 7"><path d="M0 0h8L4 7z" fill="#e4e4e4"/></svg>
<div style="left:12px;top:560px;width:99px;height:2px;background:#232324;"></div>
<div style="left:12px;top:562px;width:99px;height:1px;background:#525354;"></div>
<div style="left:12px;top:563px;width:99px;height:275px;background:#313233;"></div>
<div style="left:64px;top:573px;width:20px;height:20px;background:#dedede;border-radius:2px;"></div>
<div style="left:64px;top:573px;font-size:12px;color:#1b1b1b;white-space:nowrap;width:20px;height:20px;line-height:20px;text-align:center;">R</div>
<div style="left:88px;top:573px;width:20px;height:20px;background:#4a4b4d;border-radius:2px;"></div>
<div style="left:87px;top:573px;font-size:11px;color:#cfcfcf;white-space:nowrap;width:20px;height:19px;line-height:19px;text-align:center;">W</div>
<div style="left:101px;top:582px;font-size:6px;color:#cfcfcf;white-space:nowrap;height:8px;line-height:8px;">T</div>
<div style="left:16px;top:597px;width:20px;height:20px;background:#4a4b4d;border-radius:2px;"></div>
<div style="left:16px;top:597px;font-size:11px;color:#d6d6d6;white-space:nowrap;width:20px;height:20px;line-height:20px;text-align:center;">M</div>
<div style="left:40px;top:597px;width:20px;height:20px;background:#3edb6e;border-radius:2px;"></div>
<div style="left:40px;top:597px;font-size:11px;color:#143a20;white-space:nowrap;width:20px;height:20px;line-height:20px;text-align:center;">S</div>
<div style="left:64px;top:597px;width:20px;height:20px;background:#4a4b4d;border-radius:2px;"></div>
<svg style="left:64px;top:597px;" width="20" height="20" viewBox="0 0 20 20"><circle cx="10" cy="10" r="4.500" fill="#ee3340"/></svg>
<div style="left:88px;top:597px;width:20px;height:20px;background:#e0924a;border-radius:2px;"></div>
<svg style="left:88px;top:597px;" width="20" height="20" viewBox="0 0 20 20"><circle cx="4.500" cy="10" r="1.600" fill="#3a2410"/><path d="M7.500 7q2 3 0 6M10 5.500q3 4.500 0 9M12.500 4q4 6 0 12" stroke="#3a2410" stroke-width="1.100" fill="none"/></svg>
<div style="left:101px;top:607px;font-size:8px;color:#3a2410;white-space:nowrap;height:9px;line-height:9px;">A</div>
<svg style="left:36px;top:615px;" width="52" height="50" viewBox="0 0 52 50"><defs><linearGradient id="kg" x1="0" y1="0" x2="0" y2="1"><stop offset="0" stop-color="#525354"/><stop offset="1" stop-color="#2e2f30"/></linearGradient></defs><circle cx="26" cy="24" r="14.5" fill="#29292a"/><path d="M14.76 36.48A16.8 16.8 0 1 1 37.24 36.48" stroke="#58595a" stroke-width="2" fill="none"/><circle cx="26" cy="24" r="12.0" fill="url(#kg)"/><path d="M26.00 19.50L26.00 13.50" stroke="#f4f4f4" stroke-width="2.200" stroke-linecap="round"/></svg>
<div style="left:42px;top:654px;font-size:11px;color:#9a9a9a;white-space:nowrap;height:14px;line-height:14px;">Pan</div>
<div style="left:66px;top:655px;font-size:10px;color:#e0e0e0;white-space:nowrap;height:13px;line-height:13px;">0% Ц</div>
<div style="left:16px;top:676px;font-size:10px;color:#c9c9c9;white-space:nowrap;width:22px;height:13px;line-height:13px;text-align:right;">127</div>
<div style="left:42px;top:682px;width:7px;height:1px;background:#8d8d8d;"></div>
<div style="left:45px;top:686px;width:4px;height:1px;background:#666768;"></div>
<div style="left:45px;top:690px;width:4px;height:1px;background:#666768;"></div>
<div style="left:45px;top:694px;width:4px;height:1px;background:#666768;"></div>
<div style="left:16px;top:692px;font-size:10px;color:#c9c9c9;white-space:nowrap;width:22px;height:13px;line-height:13px;text-align:right;">112</div>
<div style="left:42px;top:698px;width:7px;height:1px;background:#8d8d8d;"></div>
<div style="left:45px;top:702px;width:4px;height:1px;background:#666768;"></div>
<div style="left:45px;top:706px;width:4px;height:1px;background:#666768;"></div>
<div style="left:45px;top:710px;width:4px;height:1px;background:#666768;"></div>
<div style="left:16px;top:708px;font-size:10px;color:#c9c9c9;white-space:nowrap;width:22px;height:13px;line-height:13px;text-align:right;">96</div>
<div style="left:42px;top:714px;width:7px;height:1px;background:#8d8d8d;"></div>
<div style="left:45px;top:718px;width:4px;height:1px;background:#666768;"></div>
<div style="left:45px;top:722px;width:4px;height:1px;background:#666768;"></div>
<div style="left:45px;top:726px;width:4px;height:1px;background:#666768;"></div>
<div style="left:16px;top:724px;font-size:10px;color:#c9c9c9;white-space:nowrap;width:22px;height:13px;line-height:13px;text-align:right;">80</div>
<div style="left:42px;top:730px;width:7px;height:1px;background:#8d8d8d;"></div>
<div style="left:45px;top:734px;width:4px;height:1px;background:#666768;"></div>
<div style="left:45px;top:738px;width:4px;height:1px;background:#666768;"></div>
<div style="left:45px;top:742px;width:4px;height:1px;background:#666768;"></div>
<div style="left:16px;top:740px;font-size:10px;color:#c9c9c9;white-space:nowrap;width:22px;height:13px;line-height:13px;text-align:right;">64</div>
<div style="left:42px;top:746px;width:7px;height:1px;background:#8d8d8d;"></div>
<div style="left:45px;top:750px;width:4px;height:1px;background:#666768;"></div>
<div style="left:45px;top:754px;width:4px;height:1px;background:#666768;"></div>
<div style="left:45px;top:758px;width:4px;height:1px;background:#666768;"></div>
<div style="left:16px;top:756px;font-size:10px;color:#c9c9c9;white-space:nowrap;width:22px;height:13px;line-height:13px;text-align:right;">48</div>
<div style="left:42px;top:762px;width:7px;height:1px;background:#8d8d8d;"></div>
<div style="left:45px;top:766px;width:4px;height:1px;background:#666768;"></div>
<div style="left:45px;top:770px;width:4px;height:1px;background:#666768;"></div>
<div style="left:45px;top:774px;width:4px;height:1px;background:#666768;"></div>
<div style="left:16px;top:772px;font-size:10px;color:#c9c9c9;white-space:nowrap;width:22px;height:13px;line-height:13px;text-align:right;">32</div>
<div style="left:42px;top:778px;width:7px;height:1px;background:#8d8d8d;"></div>
<div style="left:45px;top:782px;width:4px;height:1px;background:#666768;"></div>
<div style="left:45px;top:786px;width:4px;height:1px;background:#666768;"></div>
<div style="left:45px;top:790px;width:4px;height:1px;background:#666768;"></div>
<div style="left:16px;top:788px;font-size:10px;color:#c9c9c9;white-space:nowrap;width:22px;height:13px;line-height:13px;text-align:right;">16</div>
<div style="left:42px;top:794px;width:7px;height:1px;background:#8d8d8d;"></div>
<div style="left:45px;top:798px;width:4px;height:1px;background:#666768;"></div>
<div style="left:45px;top:802px;width:4px;height:1px;background:#666768;"></div>
<div style="left:45px;top:806px;width:4px;height:1px;background:#666768;"></div>
<div style="left:16px;top:804px;font-size:10px;color:#c9c9c9;white-space:nowrap;width:22px;height:13px;line-height:13px;text-align:right;">0</div>
<div style="left:42px;top:810px;width:7px;height:1px;background:#8d8d8d;"></div>
<div style="left:61px;top:674px;width:4px;height:137px;background:#1e1e1f;border-radius:2px;"></div>
<div style="left:53px;top:695px;width:20px;height:27px;background:linear-gradient(#7d7e7f,#5a5b5c 45%,#4b4c4d);border-radius:2px;border:1px solid #2a2a2a;"></div>
<div style="left:54px;top:707px;width:18px;height:3px;background:#f2f2f2;"></div>
<div style="left:88px;top:675px;width:13px;height:130px;background:#2b2b2c;"></div>
<div style="left:41px;top:821px;font-size:10px;color:#dcdcdc;white-space:nowrap;width:40px;height:13px;line-height:13px;text-align:center;">101</div>
<div style="left:12px;top:838px;width:99px;height:2px;background:#232324;"></div>
<div style="left:12px;top:840px;width:99px;height:1px;background:#525354;"></div>
<div style="left:12px;top:841px;width:99px;height:64px;background:#313233;"></div>
<div style="left:12px;top:841px;font-size:12px;color:#9a9a9a;white-space:nowrap;width:99px;height:15px;line-height:15px;text-align:center;">In / Out</div>
<div style="left:15px;top:859px;width:93px;height:20px;background:#4a4c4e;border-radius:2px;"></div>
<div style="left:18px;top:863px;width:11px;height:12px;background:#8e8f90;border-radius:2px;"></div>
<div class="b" style="left:18px;top:863px;font-size:9px;color:#4a4c4e;white-space:nowrap;width:11px;height:12px;line-height:12px;text-align:center;">I</div>
<div style="left:31px;top:859px;font-size:11px;color:#e2e2e2;white-space:nowrap;height:20px;line-height:20px;">Все ВходыЕ</div>
<svg style="left:97px;top:866px;" width="8" height="7" viewBox="0 0 8 7"><path d="M0 0h8L4 7z" fill="#e4e4e4"/></svg>
<div style="left:15px;top:882px;width:93px;height:20px;background:#4a4c4e;border-radius:2px;"></div>
<div style="left:18px;top:886px;width:11px;height:12px;background:#8e8f90;border-radius:2px;"></div>
<div class="b" style="left:18px;top:886px;font-size:9px;color:#4a4c4e;white-space:nowrap;width:11px;height:12px;line-height:12px;text-align:center;">O</div>
<div style="left:31px;top:882px;font-size:11px;color:#e2e2e2;white-space:nowrap;height:20px;line-height:20px;">4-DM1-</div>
<svg style="left:97px;top:889px;" width="8" height="7" viewBox="0 0 8 7"><path d="M0 0h8L4 7z" fill="#e4e4e4"/></svg>
<div style="left:12px;top:905px;width:99px;height:2px;background:#232324;"></div>
<div style="left:12px;top:907px;width:99px;height:1px;background:#525354;"></div>
<div style="left:12px;top:908px;width:99px;height:39px;background:#313233;"></div>
<div class="b" style="left:12px;top:909px;font-size:11px;color:#ffffff;white-space:nowrap;width:99px;height:14px;line-height:14px;text-align:center;">MTPowerDrumKt</div>
<div style="left:17px;top:928px;width:90px;height:16px;background:#e0924a;border:1px solid #2a2a2b;"></div>
<div style="left:17px;top:929px;font-size:11px;color:#2a2a2a;white-space:nowrap;width:90px;height:14px;line-height:14px;text-align:center;">2</div>
<div style="left:12px;top:947px;width:99px;height:1px;background:#2a2a2b;"></div>
<div style="left:12px;top:950px;width:99px;height:1px;background:#2a2a2b;"></div>
<div style="left:115px;top:133px;width:99px;height:203px;background:#313233;"></div>
<div style="left:115px;top:336px;width:99px;height:2px;background:#232324;"></div>
<div style="left:115px;top:338px;width:99px;height:1px;background:#505152;"></div>
<div style="left:115px;top:339px;width:99px;height:49px;background:#313233;"></div>
<div style="left:115px;top:388px;width:99px;height:2px;background:#232324;"></div>
<svg style="left:115px;top:337px;" width="99" height="54" viewBox="0 0 99 54"><defs><linearGradient id="kg" x1="0" y1="0" x2="0" y2="1"><stop offset="0" stop-color="#525354"/><stop offset="1" stop-color="#2e2f30"/></linearGradient></defs><circle cx="25" cy="23.5" r="14" fill="#29292a"/><path d="M14.09 35.61A16.3 16.3 0 1 1 35.91 35.61" stroke="#58595a" stroke-width="2" fill="none"/><circle cx="25" cy="23.5" r="11.5" fill="url(#kg)"/><path d="M23.00 26.96L20.00 32.16" stroke="#f4f4f4" stroke-width="2.200" stroke-linecap="round"/><circle cx="73" cy="23.5" r="14" fill="#29292a"/><path d="M62.09 35.61A16.3 16.3 0 1 1 83.91 35.61" stroke="#58595a" stroke-width="2" fill="none"/><circle cx="73" cy="23.5" r="11.5" fill="url(#kg)"/><path d="M71.00 26.96L68.00 32.16" stroke="#f4f4f4" stroke-width="2.200" stroke-linecap="round"/></svg>
<div style="left:120px;top:373px;font-size:11px;color:#9a9a9a;white-space:nowrap;height:14px;line-height:14px;">Chr</div>
<div style="left:147px;top:374px;font-size:10px;color:#e0e0e0;white-space:nowrap;width:10px;height:13px;line-height:13px;text-align:center;">0</div>
<div style="left:167px;top:373px;font-size:11px;color:#9a9a9a;white-space:nowrap;height:14px;line-height:14px;">Rev</div>
<div style="left:195px;top:374px;font-size:10px;color:#e0e0e0;white-space:nowrap;width:10px;height:13px;line-height:13px;text-align:center;">0</div>
<div style="left:115px;top:390px;width:99px;height:1px;background:#505152;"></div>
<div style="left:115px;top:394px;font-size:12px;color:#9a9a9a;white-space:nowrap;width:99px;height:15px;line-height:15px;text-align:center;">Snap To Scale</div>
<div style="left:118px;top:413px;width:68px;height:20px;background:#4a4c4e;border-radius:2px;"></div>
<div style="left:123px;top:413px;font-size:11px;color:#e2e2e2;white-space:nowrap;height:20px;line-height:20px;">C</div>
<svg style="left:174px;top:419px;" width="8" height="7" viewBox="0 0 8 7"><path d="M0 0h8L4 7z" fill="#e4e4e4"/></svg>
<div style="left:190px;top:413px;width:20px;height:20px;background:#4a4c4e;border-radius:2px;"></div>
<svg style="left:194px;top:417px;" width="12" height="12" viewBox="0 0 12 12"><path d="M3.200 3.200A4.600 4.600 0 1 0 8.800 3.200" stroke="#efefef" stroke-width="2.100" fill="none"/><path d="M6 0.500v5.500" stroke="#efefef" stroke-width="2.100"/></svg>
<div style="left:118px;top:436px;width:93px;height:20px;background:#4a4c4e;border-radius:2px;"></div>
<div style="left:123px;top:436px;font-size:11px;color:#e2e2e2;white-space:nowrap;height:20px;line-height:20px;">Chromatic</div>
<svg style="left:199px;top:442px;" width="8" height="7" viewBox="0 0 8 7"><path d="M0 0h8L4 7z" fill="#e4e4e4"/></svg>
<div style="left:115px;top:460px;width:99px;height:3px;background:#262627;"></div>
<div style="left:115px;top:463px;width:99px;height:1px;background:#525354;"></div>
<div style="left:115px;top:466px;font-size:12px;color:#9a9a9a;white-space:nowrap;width:99px;height:15px;line-height:15px;text-align:center;">Input Quantize</div>
<div style="left:118px;top:485px;width:68px;height:20px;background:#4a4c4e;border-radius:2px;"></div>
<div style="left:123px;top:485px;font-size:11px;color:#e2e2e2;white-space:nowrap;height:20px;line-height:20px;">1/16</div>
<svg style="left:174px;top:491px;" width="8" height="7" viewBox="0 0 8 7"><path d="M0 0h8L4 7z" fill="#e4e4e4"/></svg>
<div style="left:190px;top:485px;width:20px;height:20px;background:#4a4c4e;border-radius:2px;"></div>
<svg style="left:194px;top:489px;" width="12" height="12" viewBox="0 0 12 12"><path d="M3.200 3.200A4.600 4.600 0 1 0 8.800 3.200" stroke="#efefef" stroke-width="2.100" fill="none"/><path d="M6 0.500v5.500" stroke="#efefef" stroke-width="2.100"/></svg>
<div style="left:115px;top:509px;width:99px;height:3px;background:#262627;"></div>
<div style="left:115px;top:512px;width:99px;height:1px;background:#525354;"></div>
<div style="left:115px;top:516px;font-size:12px;color:#9a9a9a;white-space:nowrap;width:99px;height:15px;line-height:15px;text-align:center;">Arpeggiator</div>
<div style="left:118px;top:534px;width:68px;height:20px;background:#4a4c4e;border-radius:2px;"></div>
<div style="left:118px;top:534px;font-size:11px;color:#e8e8e8;white-space:nowrap;width:68px;height:20px;line-height:20px;text-align:center;">Latch</div>
<div style="left:190px;top:534px;width:20px;height:20px;background:#4a4c4e;border-radius:2px;"></div>
<svg style="left:194px;top:538px;" width="12" height="12" viewBox="0 0 12 12"><path d="M3.200 3.200A4.600 4.600 0 1 0 8.800 3.200" stroke="#efefef" stroke-width="2.100" fill="none"/><path d="M6 0.500v5.500" stroke="#efefef" stroke-width="2.100"/></svg>
<div style="left:118px;top:557px;width:68px;height:19px;background:#4a4c4e;border-radius:2px;"></div>
<div style="left:123px;top:557px;font-size:11px;color:#e2e2e2;white-space:nowrap;height:19px;line-height:19px;">Заготовк</div>
<svg style="left:174px;top:563px;" width="8" height="7" viewBox="0 0 8 7"><path d="M0 0h8L4 7z" fill="#e4e4e4"/></svg>
<div style="left:192px;top:557px;width:17px;height:9px;background:#4a4c4e;"></div>
<div style="left:192px;top:567px;width:17px;height:9px;background:#4a4c4e;"></div>
<svg style="left:197px;top:559px;" width="7" height="5" viewBox="0 0 7 5"><path d="M0 5h7L3.500 0z" fill="#ddd"/></svg>
<svg style="left:197px;top:569px;" width="7" height="5" viewBox="0 0 7 5"><path d="M0 0h7L3.500 5z" fill="#ddd"/></svg>
<div style="left:118px;top:580px;width:93px;height:20px;background:#4a4c4e;border-radius:2px;"></div>
<div style="left:123px;top:580px;font-size:11px;color:#e2e2e2;white-space:nowrap;height:20px;line-height:20px;">Нот: 1/16</div>
<svg style="left:199px;top:586px;" width="8" height="7" viewBox="0 0 8 7"><path d="M0 0h8L4 7z" fill="#e4e4e4"/></svg>
<div style="left:118px;top:603px;width:93px;height:20px;background:#4a4c4e;border-radius:2px;"></div>
<div style="left:123px;top:603px;font-size:11px;color:#e2e2e2;white-space:nowrap;height:20px;line-height:20px;">Октав: 2</div>
<svg style="left:199px;top:609px;" width="8" height="7" viewBox="0 0 8 7"><path d="M0 0h8L4 7z" fill="#e4e4e4"/></svg>
<div style="left:118px;top:627px;width:92px;height:19px;background:#2b2c2d;"></div>
<div style="left:119px;top:628px;width:90px;height:13px;background:#2e2f30;"></div>
<div style="left:121px;top:628px;font-size:10px;color:#8c8c8c;white-space:nowrap;height:14px;line-height:14px;">Сила</div>
<div style="left:150px;top:628px;font-size:11px;color:#e4e4e4;white-space:nowrap;width:58px;height:14px;line-height:14px;text-align:right;letter-spacing:-0.300px;">100%</div>
<div style="left:119px;top:641px;width:90px;height:3px;background:#5c5d5e;"></div>
<div style="left:119px;top:641px;width:90px;height:3px;background:#e6eef6;"></div>
<div style="left:118px;top:651px;width:92px;height:19px;background:#2b2c2d;"></div>
<div style="left:119px;top:652px;width:90px;height:13px;background:#2e2f30;"></div>
<div style="left:121px;top:652px;font-size:10px;color:#8c8c8c;white-space:nowrap;height:14px;line-height:14px;">Свинг</div>
<div style="left:150px;top:652px;font-size:11px;color:#e4e4e4;white-space:nowrap;width:58px;height:14px;line-height:14px;text-align:right;letter-spacing:-0.300px;">0%</div>
<div style="left:119px;top:665px;width:90px;height:3px;background:#5c5d5e;"></div>
<div style="left:118px;top:675px;width:92px;height:19px;background:#2b2c2d;"></div>
<div style="left:119px;top:676px;width:90px;height:13px;background:#2e2f30;"></div>
<div style="left:121px;top:676px;font-size:10px;color:#8c8c8c;white-space:nowrap;height:14px;line-height:14px;">Длит</div>
<div style="left:150px;top:676px;font-size:11px;color:#e4e4e4;white-space:nowrap;width:58px;height:14px;line-height:14px;text-align:right;letter-spacing:-0.300px;">99.5%</div>
<div style="left:119px;top:689px;width:90px;height:3px;background:#5c5d5e;"></div>
<div style="left:119px;top:689px;width:45px;height:3px;background:#e6eef6;"></div>
<div style="left:118px;top:699px;width:92px;height:19px;background:#2b2c2d;"></div>
<div style="left:119px;top:700px;width:90px;height:13px;background:#2e2f30;"></div>
<div style="left:121px;top:700px;font-size:10px;color:#8c8c8c;white-space:nowrap;height:14px;line-height:14px;">Высота</div>
<div style="left:150px;top:700px;font-size:11px;color:#e4e4e4;white-space:nowrap;width:58px;height:14px;line-height:14px;text-align:right;letter-spacing:-0.300px;">0</div>
<div style="left:119px;top:713px;width:90px;height:3px;background:#5c5d5e;"></div>
<div style="left:119px;top:713px;width:45px;height:3px;background:#e6eef6;"></div>
<div style="left:118px;top:723px;width:92px;height:19px;background:#2b2c2d;"></div>
<div style="left:119px;top:724px;width:90px;height:13px;background:#2e2f30;"></div>
<div style="left:121px;top:724px;font-size:10px;color:#8c8c8c;white-space:nowrap;height:14px;line-height:14px;">Форшлаги</div>
<div style="left:150px;top:724px;font-size:11px;color:#e4e4e4;white-space:nowrap;width:58px;height:14px;line-height:14px;text-align:right;letter-spacing:-0.300px;">0.0%</div>
<div style="left:119px;top:737px;width:90px;height:3px;background:#5c5d5e;"></div>
<svg style="left:138px;top:742px;" width="52" height="48" viewBox="0 0 52 48"><defs><linearGradient id="kg" x1="0" y1="0" x2="0" y2="1"><stop offset="0" stop-color="#525354"/><stop offset="1" stop-color="#2e2f30"/></linearGradient></defs><circle cx="25" cy="23" r="14" fill="#29292a"/><path d="M14.09 35.11A16.3 16.3 0 1 1 35.91 35.11" stroke="#58595a" stroke-width="2" fill="none"/><circle cx="25" cy="23" r="11.5" fill="url(#kg)"/><path d="M23.00 26.46L20.00 31.66" stroke="#f4f4f4" stroke-width="2.200" stroke-linecap="round"/></svg>
<div style="left:140px;top:779px;font-size:11px;color:#9a9a9a;white-space:nowrap;height:14px;line-height:14px;">Mix</div>
<div style="left:161px;top:780px;font-size:10px;color:#e0e0e0;white-space:nowrap;height:13px;line-height:13px;">0.0%</div>
<div style="left:118px;top:796px;width:93px;height:19px;background:#4a4c4e;border-radius:2px;"></div>
<div style="left:123px;top:796px;font-size:11px;color:#e2e2e2;white-space:nowrap;height:19px;line-height:19px;">Кан: 1</div>
<svg style="left:199px;top:802px;" width="8" height="7" viewBox="0 0 8 7"><path d="M0 0h8L4 7z" fill="#e4e4e4"/></svg>
<div style="left:118px;top:819px;width:93px;height:19px;background:#4a4c4e;border-radius:2px;"></div>
<div style="left:123px;top:819px;font-size:11px;color:#e2e2e2;white-space:nowrap;height:19px;line-height:19px;">Вперед</div>
<svg style="left:199px;top:825px;" width="8" height="7" viewBox="0 0 8 7"><path d="M0 0h8L4 7z" fill="#e4e4e4"/></svg>
<div style="left:115px;top:842px;width:99px;height:3px;background:#262627;"></div>
<div style="left:115px;top:845px;width:99px;height:1px;background:#525354;"></div>
<div style="left:118px;top:849px;width:92px;height:19px;background:#2b2c2d;"></div>
<div style="left:119px;top:850px;width:90px;height:13px;background:#2e2f30;"></div>
<div style="left:121px;top:850px;font-size:10px;color:#8c8c8c;white-space:nowrap;height:14px;line-height:14px;">Тон.+</div>
<div style="left:150px;top:850px;font-size:11px;color:#e4e4e4;white-space:nowrap;width:58px;height:14px;line-height:14px;text-align:right;">0</div>
<div style="left:119px;top:863px;width:90px;height:3px;background:#5c5d5e;"></div>
<div style="left:162px;top:863px;width:4px;height:3px;background:#e8e8e8;"></div>
<div style="left:118px;top:875px;width:92px;height:19px;background:#2b2c2d;"></div>
<div style="left:119px;top:876px;width:90px;height:13px;background:#2e2f30;"></div>
<div style="left:121px;top:876px;font-size:10px;color:#8c8c8c;white-space:nowrap;height:14px;line-height:14px;">Time +</div>
<div style="left:150px;top:876px;font-size:11px;color:#e4e4e4;white-space:nowrap;width:58px;height:14px;line-height:14px;text-align:right;">0</div>
<div style="left:119px;top:889px;width:90px;height:3px;background:#5c5d5e;"></div>
<div style="left:118px;top:899px;font-size:11px;color:#ededed;white-space:nowrap;width:93px;height:15px;line-height:15px;text-align:center;">Patch Browser...</div>
<div style="left:118px;top:918px;width:93px;height:20px;background:#4a4c4e;border-radius:2px;"></div>
<div style="left:123px;top:918px;font-size:11px;color:#e2e2e2;white-space:nowrap;height:20px;line-height:20px;">Обычный</div>
<svg style="left:199px;top:924px;" width="8" height="7" viewBox="0 0 8 7"><path d="M0 0h8L4 7z" fill="#e4e4e4"/></svg>
<div style="left:10px;top:963px;width:103px;height:21px;background:#3a3b3c;border-radius:2px;"></div>
<div style="left:10px;top:963px;font-size:11px;color:#ececec;white-space:nowrap;width:103px;height:22px;line-height:22px;text-align:center;">Display</div>
<svg style="left:97px;top:971px;" width="8" height="7" viewBox="0 0 8 7"><path d="M0 0h8L4 7z" fill="#6d6e6f"/></svg>
<div style="left:228px;top:105px;width:1202px;height:849px;background:#4b4c4d;border-radius:5px;"></div>
<div style="left:230px;top:106px;width:1198px;height:19px;background:#3f4041;"></div>
<div style="left:230px;top:106px;width:3px;height:19px;background:linear-gradient(#5b5c5d,#48494a);"></div>
<div style="left:233px;top:106px;width:146px;height:19px;background:linear-gradient(#5b5c5d,#48494a);border-left:1px solid #666768;border-right:1px solid #353637;"></div>
<div style="left:233px;top:106px;font-size:12px;color:#c6c6c6;white-space:nowrap;width:129px;height:19px;line-height:19px;text-align:center;">Вид</div>
<svg style="left:366px;top:113px;" width="7" height="4" viewBox="0 0 7 4"><path d="M0 0h7L3.500 4z" fill="#d8d8d8"/></svg>
<div style="left:380px;top:106px;width:144px;height:19px;background:linear-gradient(#5b5c5d,#48494a);border-left:1px solid #666768;border-right:1px solid #353637;"></div>
<div style="left:380px;top:106px;font-size:12px;color:#c6c6c6;white-space:nowrap;width:127px;height:19px;line-height:19px;text-align:center;">Параметры</div>
<svg style="left:511px;top:113px;" width="7" height="4" viewBox="0 0 7 4"><path d="M0 0h7L3.500 4z" fill="#d8d8d8"/></svg>
<div style="left:525px;top:106px;width:144px;height:19px;background:linear-gradient(#5b5c5d,#48494a);border-left:1px solid #666768;border-right:1px solid #353637;"></div>
<div style="left:525px;top:106px;font-size:12px;color:#c6c6c6;white-space:nowrap;width:127px;height:19px;line-height:19px;text-align:center;">Дорожки</div>
<svg style="left:656px;top:113px;" width="7" height="4" viewBox="0 0 7 4"><path d="M0 0h7L3.500 4z" fill="#d8d8d8"/></svg>
<div style="left:670px;top:106px;width:144px;height:19px;background:linear-gradient(#5b5c5d,#48494a);border-left:1px solid #666768;border-right:1px solid #353637;"></div>
<div style="left:670px;top:106px;font-size:12px;color:#c6c6c6;white-space:nowrap;width:127px;height:19px;line-height:19px;text-align:center;">Клипы</div>
<svg style="left:801px;top:113px;" width="7" height="4" viewBox="0 0 7 4"><path d="M0 0h7L3.500 4z" fill="#d8d8d8"/></svg>
<div style="left:815px;top:106px;width:141px;height:19px;background:linear-gradient(#5b5c5d,#48494a);border-left:1px solid #666768;border-right:1px solid #353637;"></div>
<div style="left:815px;top:106px;font-size:12px;color:#c6c6c6;white-space:nowrap;width:124px;height:19px;line-height:19px;text-align:center;">MIDI</div>
<svg style="left:943px;top:113px;" width="7" height="4" viewBox="0 0 7 4"><path d="M0 0h7L3.500 4z" fill="#d8d8d8"/></svg>
<div style="left:957px;top:106px;width:148px;height:19px;background:linear-gradient(#5b5c5d,#48494a);border-left:1px solid #666768;border-right:1px solid #353637;"></div>
<div style="left:957px;top:106px;font-size:12px;color:#c6c6c6;white-space:nowrap;width:131px;height:19px;line-height:19px;text-align:center;">Свободные эффекты</div>
<svg style="left:1092px;top:113px;" width="7" height="4" viewBox="0 0 7 4"><path d="M0 0h7L3.500 4z" fill="#d8d8d8"/></svg>
<div style="left:1106px;top:106px;width:218px;height:19px;background:linear-gradient(#5b5c5d,#48494a);"></div>
<div style="left:1325px;top:106px;width:84px;height:19px;background:linear-gradient(#5b5c5d,#48494a);border-left:1px solid #666768;border-right:1px solid #353637;"></div>
<svg style="left:1330px;top:109px;" width="14" height="13" viewBox="0 0 14 13"><path d="M5.500 1.500v10L0.500 6.500zM8.500 1.500v10l5-5z" fill="#9a9a9a"/><path d="M7 0v13" stroke="#c8c8c8" stroke-width="1"/></svg>
<div style="left:1350px;top:106px;font-size:12px;color:#c4c4c4;white-space:nowrap;height:19px;line-height:19px;">Выкл.</div>
<svg style="left:1402px;top:118px;" width="5" height="5" viewBox="0 0 5 5"><path d="M5 0v5H0z" fill="#c8c8c8"/></svg>
<div style="left:1410px;top:106px;width:18px;height:19px;background:linear-gradient(#5b5c5d,#48494a);"></div>
<div style="left:233px;top:131px;width:28px;height:28px;background:#323334;border-radius:2px;"></div>
<svg style="left:232px;top:130px;" width="30" height="30" viewBox="0 0 30 30"><path d="M0.500 5V0.500H5M25 0.500h4.500V5M29.500 25v4.500H25M5 29.500H0.500V25" stroke="#f2f2f2" stroke-width="1" fill="none"/><path d="M15 9v12M9 15h12" stroke="#f2f2f2" stroke-width="2"/></svg>
<div style="left:266px;top:133px;width:24px;height:24px;background:#3b3c3d;border-radius:2px;"></div>
<svg style="left:266px;top:133px;" width="24" height="24" viewBox="0 0 24 24"><path d="M5 14V5h9" stroke="#e8e8e8" stroke-width="1.400" fill="none"/><rect x="8.700" y="8.700" width="10.600" height="10.600" stroke="#e8e8e8" stroke-width="1.400" fill="none"/><path d="M14 11v6M11 14h6" stroke="#e8e8e8" stroke-width="1.800"/></svg>
<div style="left:416px;top:133px;width:115px;height:24px;background:#2f3031;border-radius:2px;"></div>
<div style="left:421px;top:133px;font-size:11px;color:#d4d4d4;white-space:nowrap;height:24px;line-height:24px;">Другое</div>
<svg style="left:516px;top:141px;" width="9" height="8" viewBox="0 0 9 8"><path d="M0.500 0.500h8L4.500 7.500z" fill="#b8b8b8"/></svg>
<div style="left:555px;top:130px;width:854px;height:31px;background:#47484a;border:1px solid #8b8c8d;"></div>
<div style="left:556px;top:142px;width:852px;height:13px;background:#d2d0cf;"></div>
<div style="left:574px;top:143px;width:1px;height:12px;background:#7d7c7c;"></div>
<div style="left:591px;top:150px;width:1px;height:5px;background:#8d8c8c;"></div>
<div style="left:577px;top:142px;width:14px;height:12px;overflow:hidden;"><div style="left:0px;top:0px;font-size:10px;color:#454545;white-space:nowrap;height:12px;line-height:12px;letter-spacing:-0.200px;">31</div></div>
<div style="left:608px;top:143px;width:1px;height:12px;background:#7d7c7c;"></div>
<div style="left:625px;top:150px;width:1px;height:5px;background:#8d8c8c;"></div>
<div style="left:611px;top:142px;width:14px;height:12px;overflow:hidden;"><div style="left:0px;top:0px;font-size:10px;color:#454545;white-space:nowrap;height:12px;line-height:12px;letter-spacing:-0.200px;">33</div></div>
<div style="left:642px;top:143px;width:1px;height:12px;background:#7d7c7c;"></div>
<div style="left:659px;top:150px;width:1px;height:5px;background:#8d8c8c;"></div>
<div style="left:645px;top:142px;width:14px;height:12px;overflow:hidden;"><div style="left:0px;top:0px;font-size:10px;color:#454545;white-space:nowrap;height:12px;line-height:12px;letter-spacing:-0.200px;">35</div></div>
<div style="left:677px;top:143px;width:1px;height:12px;background:#7d7c7c;"></div>
<div style="left:694px;top:150px;width:1px;height:5px;background:#8d8c8c;"></div>
<div style="left:680px;top:142px;width:14px;height:12px;overflow:hidden;"><div style="left:0px;top:0px;font-size:10px;color:#454545;white-space:nowrap;height:12px;line-height:12px;letter-spacing:-0.200px;">37</div></div>
<div style="left:711px;top:143px;width:1px;height:12px;background:#7d7c7c;"></div>
<div style="left:728px;top:150px;width:1px;height:5px;background:#8d8c8c;"></div>
<div style="left:714px;top:142px;width:14px;height:12px;overflow:hidden;"><div style="left:0px;top:0px;font-size:10px;color:#454545;white-space:nowrap;height:12px;line-height:12px;letter-spacing:-0.200px;">39</div></div>
<div style="left:745px;top:143px;width:1px;height:12px;background:#7d7c7c;"></div>
<div style="left:762px;top:150px;width:1px;height:5px;background:#8d8c8c;"></div>
<div style="left:748px;top:142px;width:14px;height:12px;overflow:hidden;"><div style="left:0px;top:0px;font-size:10px;color:#454545;white-space:nowrap;height:12px;line-height:12px;letter-spacing:-0.200px;">41</div></div>
<div style="left:779px;top:143px;width:1px;height:12px;background:#7d7c7c;"></div>
<div style="left:796px;top:150px;width:1px;height:5px;background:#8d8c8c;"></div>
<div style="left:782px;top:142px;width:14px;height:12px;overflow:hidden;"><div style="left:0px;top:0px;font-size:10px;color:#454545;white-space:nowrap;height:12px;line-height:12px;letter-spacing:-0.200px;">43</div></div>
<div style="left:813px;top:143px;width:1px;height:12px;background:#7d7c7c;"></div>
<div style="left:831px;top:150px;width:1px;height:5px;background:#8d8c8c;"></div>
<div style="left:816px;top:142px;width:14px;height:12px;overflow:hidden;"><div style="left:0px;top:0px;font-size:10px;color:#454545;white-space:nowrap;height:12px;line-height:12px;letter-spacing:-0.200px;">45</div></div>
<div style="left:848px;top:143px;width:1px;height:12px;background:#7d7c7c;"></div>
<div style="left:865px;top:150px;width:1px;height:5px;background:#8d8c8c;"></div>
<div style="left:851px;top:142px;width:14px;height:12px;overflow:hidden;"><div style="left:0px;top:0px;font-size:10px;color:#454545;white-space:nowrap;height:12px;line-height:12px;letter-spacing:-0.200px;">47</div></div>
<div style="left:882px;top:143px;width:1px;height:12px;background:#7d7c7c;"></div>
<div style="left:899px;top:150px;width:1px;height:5px;background:#8d8c8c;"></div>
<div style="left:885px;top:142px;width:14px;height:12px;overflow:hidden;"><div style="left:0px;top:0px;font-size:10px;color:#454545;white-space:nowrap;height:12px;line-height:12px;letter-spacing:-0.200px;">49</div></div>
<div style="left:916px;top:143px;width:1px;height:12px;background:#7d7c7c;"></div>
<div style="left:933px;top:150px;width:1px;height:5px;background:#8d8c8c;"></div>
<div style="left:919px;top:142px;width:14px;height:12px;overflow:hidden;"><div style="left:0px;top:0px;font-size:10px;color:#454545;white-space:nowrap;height:12px;line-height:12px;letter-spacing:-0.200px;">51</div></div>
<div style="left:950px;top:143px;width:1px;height:12px;background:#7d7c7c;"></div>
<div style="left:967px;top:150px;width:1px;height:5px;background:#8d8c8c;"></div>
<div style="left:953px;top:142px;width:14px;height:12px;overflow:hidden;"><div style="left:0px;top:0px;font-size:10px;color:#454545;white-space:nowrap;height:12px;line-height:12px;letter-spacing:-0.200px;">53</div></div>
<div style="left:985px;top:143px;width:1px;height:12px;background:#7d7c7c;"></div>
<div style="left:1002px;top:150px;width:1px;height:5px;background:#8d8c8c;"></div>
<div style="left:988px;top:142px;width:14px;height:12px;overflow:hidden;"><div style="left:0px;top:0px;font-size:10px;color:#454545;white-space:nowrap;height:12px;line-height:12px;letter-spacing:-0.200px;">55</div></div>
<div style="left:1019px;top:143px;width:1px;height:12px;background:#7d7c7c;"></div>
<div style="left:1036px;top:150px;width:1px;height:5px;background:#8d8c8c;"></div>
<div style="left:1022px;top:142px;width:14px;height:12px;overflow:hidden;"><div style="left:0px;top:0px;font-size:10px;color:#454545;white-space:nowrap;height:12px;line-height:12px;letter-spacing:-0.200px;">57</div></div>
<div style="left:1053px;top:143px;width:1px;height:12px;background:#7d7c7c;"></div>
<div style="left:1070px;top:150px;width:1px;height:5px;background:#8d8c8c;"></div>
<div style="left:1056px;top:142px;width:14px;height:12px;overflow:hidden;"><div style="left:0px;top:0px;font-size:10px;color:#454545;white-space:nowrap;height:12px;line-height:12px;letter-spacing:-0.200px;">59</div></div>
<div style="left:1087px;top:143px;width:1px;height:12px;background:#7d7c7c;"></div>
<div style="left:1104px;top:150px;width:1px;height:5px;background:#8d8c8c;"></div>
<div style="left:1090px;top:142px;width:14px;height:12px;overflow:hidden;"><div style="left:0px;top:0px;font-size:10px;color:#454545;white-space:nowrap;height:12px;line-height:12px;letter-spacing:-0.200px;">61</div></div>
<div style="left:1121px;top:143px;width:1px;height:12px;background:#7d7c7c;"></div>
<div style="left:1139px;top:150px;width:1px;height:5px;background:#8d8c8c;"></div>
<div style="left:1124px;top:142px;width:14px;height:12px;overflow:hidden;"><div style="left:0px;top:0px;font-size:10px;color:#454545;white-space:nowrap;height:12px;line-height:12px;letter-spacing:-0.200px;">63</div></div>
<div style="left:1156px;top:143px;width:1px;height:12px;background:#7d7c7c;"></div>
<div style="left:1173px;top:150px;width:1px;height:5px;background:#8d8c8c;"></div>
<div style="left:1159px;top:142px;width:14px;height:12px;overflow:hidden;"><div style="left:0px;top:0px;font-size:10px;color:#454545;white-space:nowrap;height:12px;line-height:12px;letter-spacing:-0.200px;">65</div></div>
<div style="left:1190px;top:143px;width:1px;height:12px;background:#7d7c7c;"></div>
<div style="left:1207px;top:150px;width:1px;height:5px;background:#8d8c8c;"></div>
<div style="left:1193px;top:142px;width:14px;height:12px;overflow:hidden;"><div style="left:0px;top:0px;font-size:10px;color:#454545;white-space:nowrap;height:12px;line-height:12px;letter-spacing:-0.200px;">67</div></div>
<div style="left:1224px;top:143px;width:1px;height:12px;background:#7d7c7c;"></div>
<div style="left:1241px;top:150px;width:1px;height:5px;background:#8d8c8c;"></div>
<div style="left:1227px;top:142px;width:14px;height:12px;overflow:hidden;"><div style="left:0px;top:0px;font-size:10px;color:#454545;white-space:nowrap;height:12px;line-height:12px;letter-spacing:-0.200px;">69</div></div>
<div style="left:1258px;top:143px;width:1px;height:12px;background:#7d7c7c;"></div>
<div style="left:1275px;top:150px;width:1px;height:5px;background:#8d8c8c;"></div>
<div style="left:1261px;top:142px;width:14px;height:12px;overflow:hidden;"><div style="left:0px;top:0px;font-size:10px;color:#454545;white-space:nowrap;height:12px;line-height:12px;letter-spacing:-0.200px;">71</div></div>
<div style="left:1293px;top:143px;width:1px;height:12px;background:#7d7c7c;"></div>
<div style="left:1310px;top:150px;width:1px;height:5px;background:#8d8c8c;"></div>
<div style="left:1296px;top:142px;width:14px;height:12px;overflow:hidden;"><div style="left:0px;top:0px;font-size:10px;color:#454545;white-space:nowrap;height:12px;line-height:12px;letter-spacing:-0.200px;">73</div></div>
<div style="left:1327px;top:143px;width:1px;height:12px;background:#7d7c7c;"></div>
<div style="left:1344px;top:150px;width:1px;height:5px;background:#8d8c8c;"></div>
<div style="left:1330px;top:142px;width:14px;height:12px;overflow:hidden;"><div style="left:0px;top:0px;font-size:10px;color:#454545;white-space:nowrap;height:12px;line-height:12px;letter-spacing:-0.200px;">75</div></div>
<div style="left:1361px;top:143px;width:1px;height:12px;background:#7d7c7c;"></div>
<div style="left:1378px;top:150px;width:1px;height:5px;background:#8d8c8c;"></div>
<div style="left:1364px;top:142px;width:14px;height:12px;overflow:hidden;"><div style="left:0px;top:0px;font-size:10px;color:#454545;white-space:nowrap;height:12px;line-height:12px;letter-spacing:-0.200px;">77</div></div>
<div style="left:1395px;top:143px;width:1px;height:12px;background:#7d7c7c;"></div>
<div style="left:1412px;top:150px;width:1px;height:5px;background:#8d8c8c;"></div>
<div style="left:1398px;top:142px;width:10px;height:12px;overflow:hidden;"><div style="left:0px;top:0px;font-size:10px;color:#454545;white-space:nowrap;height:12px;line-height:12px;letter-spacing:-0.200px;">79</div></div>
<div style="left:557px;top:150px;width:1px;height:5px;background:#8d8c8c;"></div>
<div style="left:1411px;top:146px;width:14px;height:14px;background:#3a3b3c;"></div>
<svg style="left:1412px;top:147px;" width="12" height="12" viewBox="0 0 12 12"><path d="M6 0.500v11M0.500 6h11" stroke="#f2f2f2" stroke-width="2.200"/></svg>
<div style="left:229px;top:171px;width:1199px;height:756px;background:#050505;"></div>
<div style="left:233px;top:173px;width:299px;height:752px;background:#1f1f20;"></div>
<div style="left:532px;top:173px;width:1px;height:752px;background:#6a6b6c;"></div>
<div style="left:533px;top:173px;width:22px;height:752px;background:#4b4c4e;"></div>
<div style="left:555px;top:173px;width:855px;height:752px;background:#242426;"></div>
<div style="left:1410px;top:173px;width:16px;height:752px;background:#4b4c4d;"></div>
<div style="left:1412px;top:188px;width:12px;height:147px;background:#adadad;border-radius:1px;"></div>
<svg style="left:1412px;top:176px;" width="12" height="9" viewBox="0 0 12 9"><path d="M1 8h10L6 1z" fill="#1d1d1d"/></svg>
<svg style="left:1412px;top:871px;" width="12" height="9" viewBox="0 0 12 9"><path d="M1 1h10L6 8z" fill="#1d1d1d"/></svg>
<svg style="left:1411px;top:884px;" width="14" height="14" viewBox="0 0 14 14"><circle cx="5" cy="5" r="3.800" stroke="#f0f0f0" stroke-width="1.300" fill="none"/><path d="M8 8l4.500 4.500" stroke="#f0f0f0" stroke-width="2"/><path d="M3 5h4" stroke="#f0f0f0" stroke-width="1.200"/></svg>
<div style="left:1413px;top:901px;width:10px;height:5px;background:#d8d8d8;"></div>
<svg style="left:1411px;top:909px;" width="14" height="14" viewBox="0 0 14 14"><circle cx="5" cy="5" r="3.800" stroke="#f0f0f0" stroke-width="1.300" fill="none"/><path d="M8 8l4.500 4.500" stroke="#f0f0f0" stroke-width="2"/><path d="M3 5h4" stroke="#f0f0f0" stroke-width="1.200"/><path d="M5 3v4" stroke="#f0f0f0" stroke-width="1.200"/></svg>
<div style="left:555px;top:173px;width:855px;height:154px;background:#2a2a2c;"></div>
<div style="left:555px;top:544px;width:855px;height:60px;background:#4b4c4e;"></div>
<div style="left:555px;top:605px;width:855px;height:60px;background:#38383a;"></div>
<div style="left:555px;top:666px;width:855px;height:60px;background:#4b4c4e;"></div>
<div style="left:555px;top:727px;width:855px;height:60px;background:#4b4c4e;"></div>
<div style="left:555px;top:788px;width:855px;height:60px;background:#363638;"></div>
<div style="left:555px;top:849px;width:855px;height:59px;background:#363638;"></div>
<div style="left:555px;top:909px;width:855px;height:16px;background:#4b4c4e;"></div>
<div style="left:555px;top:329px;width:855px;height:17px;background:#c5c5c8;"></div>
<div style="left:555px;top:346px;width:855px;height:135px;background:linear-gradient(#505054,#47474b);"></div>
<div style="left:555px;top:345px;width:855px;height:1px;background:#e2e2e4;"></div>
<div style="left:1399px;top:329px;width:1px;height:17px;background:#8a8a8c;"></div>
<div style="left:1403px;top:333px;width:5px;height:2px;background:#222;"></div>
<div style="left:1403px;top:339px;width:5px;height:2px;background:#222;"></div>
<div style="left:555px;top:481px;width:855px;height:1px;background:#8e8e90;"></div>
<div style="left:555px;top:483px;width:855px;height:16px;background:#444446;"></div>
<div style="left:555px;top:500px;width:855px;height:43px;background:linear-gradient(#2f2f31,#2a2a2c);"></div>
<div style="left:1399px;top:483px;width:1px;height:16px;background:#6a6a6c;"></div>
<div style="left:1403px;top:486px;width:5px;height:2px;background:#f0f0f0;"></div>
<div style="left:1403px;top:492px;width:5px;height:2px;background:#f0f0f0;"></div>
<svg style="left:555px;top:329px;" width="855" height="152" viewBox="0 0 855 152"><path d="M0 90.5h1M4 90.5h1M8 90.5h1M12 90.5h1M20 90.5h1M24 90.5h1M29 90.5h1M32 90.5h1M40 90.5h1M45 90.5h1M48 90.5h1M52 90.5h1M56 90.5h1M61 90.5h1M64 90.5h1M68 90.5h1M72 90.5h1M76 90.5h1M81 90.5h1M89 90.5h1M92 90.5h1M100 90.5h1M105 90.5h1M109 90.5h1M116 90.5h1M121 90.5h1M125 90.5h1M129 90.5h1M132 90.5h1M141 90.5h1M145 90.5h1M149 90.5h1M152 90.5h1M160 90.5h1M165 90.5h1M169 90.5h1M173 90.5h1M181 90.5h1M184 90.5h1M188 90.5h1M196 90.5h1M201 90.5h1M205 90.5h1M209 90.5h1M225 90.5h1M233 90.5h1M240 90.5h1M244 90.5h1M248 90.5h1M252 90.5h1M257 90.5h1M261 90.5h1M268 90.5h1M273 90.5h1M277 90.5h1M281 90.5h1M284 90.5h1M292 90.5h1M296 90.5h1M300 90.5h1M305 90.5h1M308 90.5h1M316 90.5h1M321 90.5h1M325 90.5h1M329 90.5h1M337 90.5h1M340 90.5h1M345 90.5h1M352 90.5h1M356 90.5h1M364 90.5h1M368 90.5h1M376 90.5h1M381 90.5h1M384 90.5h1M388 90.5h1M393 90.5h1M396 90.5h1M413 90.5h1M416 90.5h1M428 90.5h1M433 90.5h1M437 90.5h1M444 90.5h1M449 90.5h1M452 90.5h1M456 90.5h1M461 90.5h1M468 90.5h1M484 90.5h1M489 90.5h1M493 90.5h1M496 90.5h1M504 90.5h1M509 90.5h1M517 90.5h1M533 90.5h1M537 91.5h1M0 106.5h2M6 106.5h2M10 106.5h2M14 106.5h1M18 106.5h1M22 106.5h2M24 106.5h1M26 106.5h1M30 106.5h1M32 106.5h1M34 106.5h2M36 106.5h1M42 106.5h2M44 106.5h1M48 106.5h2M52 106.5h1M56 106.5h2M58 106.5h1M66 106.5h2M70 106.5h1M72 106.5h1M74 106.5h2M82 106.5h1M84 106.5h2M86 106.5h1M88 106.5h1M90 106.5h1M96 106.5h2M100 106.5h1M108 106.5h2M114 106.5h2M116 106.5h2M120 106.5h1M122 106.5h1M126 106.5h1M128 106.5h2M130 106.5h1M138 106.5h1M140 106.5h1M144 106.5h1M146 106.5h1M150 106.5h2M156 106.5h1M160 106.5h1M164 106.5h1M166 106.5h1M168 106.5h1M172 106.5h1M176 106.5h2M184 106.5h1M186 106.5h1M190 106.5h1M194 106.5h1M196 106.5h1M198 106.5h2M202 106.5h1M204 106.5h1M208 106.5h2M210 106.5h1M218 106.5h1M222 106.5h2M228 106.5h1M230 106.5h1M232 106.5h1M234 106.5h1M238 106.5h2M242 106.5h1M246 106.5h1M248 106.5h1M250 106.5h1M252 106.5h1M254 106.5h1M256 106.5h1M258 106.5h1M264 106.5h1M266 106.5h2M268 106.5h2M272 106.5h1M278 106.5h2M280 106.5h1M284 106.5h1M288 106.5h1M290 106.5h1M296 106.5h1M300 106.5h1M304 106.5h1M306 106.5h1M310 106.5h1M316 106.5h1M318 106.5h1M320 106.5h2M322 106.5h1M324 106.5h2M326 106.5h1M330 106.5h1M332 106.5h1M334 106.5h1M336 106.5h1M338 106.5h2M340 106.5h1M342 106.5h1M346 106.5h1M348 106.5h1M350 106.5h1M354 106.5h1M356 106.5h1M358 106.5h1M362 106.5h1M364 106.5h2M372 106.5h2M374 106.5h1M378 106.5h1M380 106.5h1M384 106.5h2M386 106.5h2M390 106.5h1M400 106.5h1M404 106.5h1M406 106.5h2M408 106.5h1M422 106.5h2M426 106.5h2M428 106.5h1M430 106.5h2M432 106.5h2M434 106.5h1M440 106.5h1M444 106.5h2M446 106.5h1M448 106.5h1M450 106.5h1M454 106.5h2M458 106.5h1M460 106.5h1M462 106.5h1M464 106.5h1M468 106.5h1M470 106.5h1M472 106.5h2M474 106.5h2M476 106.5h2M478 106.5h1M488 106.5h1M492 106.5h1M494 106.5h1M496 106.5h2M502 106.5h1M504 106.5h1M506 106.5h2M508 106.5h1M512 106.5h2M516 106.5h1M522 106.5h2M526 106.5h1M530 106.5h2M532 106.5h1M534 106.5h1M553 107.5h1M557 107.5h1M559 107.5h1M563 107.5h1M565 107.5h1M569 107.5h1M575 107.5h1M583 107.5h1M591 107.5h1M597 107.5h1M599 107.5h1M605 107.5h1M607 107.5h1M617 107.5h1M619 107.5h1M625 107.5h1M627 107.5h1M629 107.5h1M631 107.5h1M639 107.5h1M643 107.5h1M647 107.5h1M651 107.5h1M653 107.5h1M656 107.5h1M660 107.5h1M662 107.5h1M666 107.5h1M668 107.5h1M670 107.5h1M674 107.5h1M676 107.5h1M680 107.5h1M682 107.5h1M684 107.5h1M686 107.5h1M688 107.5h1M690 107.5h1M692 107.5h1M694 107.5h1M696 107.5h1M702 107.5h1M704 107.5h1M706 107.5h1M708 107.5h1M710 107.5h1M712 107.5h1M718 107.5h1M722 107.5h1M726 107.5h1M728 107.5h1M730 107.5h1M736 107.5h1M738 107.5h1M740 107.5h1M742 107.5h1M746 107.5h1M748 107.5h1M752 107.5h1M754 107.5h1M756 107.5h1M762 107.5h1M764 107.5h1M766 107.5h1M768 107.5h1M770 107.5h1M772 107.5h1M776 107.5h1M778 107.5h1M784 107.5h1M793 107.5h1M799 107.5h1M801 107.5h1M803 107.5h1M805 107.5h1M807 107.5h1M811 107.5h1M813 107.5h1M815 107.5h1M821 107.5h1M823 107.5h1M825 107.5h1M833 107.5h1M835 107.5h1M839 107.5h1M843 107.5h1M845 107.5h1M847 107.5h1M849 107.5h1M855 107.5h1" stroke="#77759a" stroke-width="1" shape-rendering="crispEdges" fill="none"/><path d="M0 103.5h1M2 104.5h1M4 103.5h1M6 104.5h1M8 103.5h1M10 108.5h3M12 103.5h1M14 104.5h1M16 103.5h1M16 109.5h1M18 104.5h1M20 103.5h1M24 103.5h1M26 104.5h1M28 103.5h1M30 104.5h1M32 103.5h1M36 103.5h1M38 104.5h1M40 103.5h1M42 104.5h1M44 103.5h1M46 104.5h1M48 103.5h1M48 108.5h1M50 104.5h1M52 103.5h1M56 103.5h1M58 104.5h1M60 103.5h1M62 104.5h1M62 109.5h1M64 103.5h1M66 104.5h1M68 103.5h1M68 108.5h1M70 104.5h1M70 108.5h2M72 103.5h1M72 108.5h3M76 103.5h1M78 104.5h1M80 103.5h1M82 104.5h1M84 103.5h1M86 104.5h1M88 103.5h1M90 104.5h1M92 103.5h1M94 104.5h1M96 103.5h1M98 104.5h1M98 108.5h1M100 103.5h1M102 104.5h1M104 103.5h1M106 104.5h1M108 103.5h1M110 104.5h1M112 103.5h1M114 104.5h1M116 103.5h1M120 103.5h1M124 103.5h1M126 104.5h1M128 103.5h1M130 104.5h1M132 103.5h1M132 109.5h2M134 104.5h1M134 108.5h3M136 103.5h1M136 109.5h3M138 104.5h1M140 103.5h1M140 109.5h2M142 104.5h1M144 103.5h1M144 109.5h1M148 103.5h1M148 108.5h1M150 104.5h1M152 103.5h1M154 104.5h1M156 103.5h1M158 104.5h1M160 103.5h1M164 103.5h1M168 103.5h1M170 104.5h1M170 109.5h2M172 103.5h1M176 103.5h1M176 109.5h2M178 104.5h1M180 103.5h1M182 104.5h1M184 103.5h1M186 104.5h1M188 103.5h1M190 104.5h1M192 103.5h1M194 104.5h1M196 103.5h1M198 104.5h1M200 103.5h1M200 109.5h1M202 104.5h1M204 103.5h1M206 104.5h1M208 103.5h1M210 108.5h3M212 103.5h1M214 108.5h1M216 103.5h1M218 104.5h1M220 103.5h1M220 109.5h3M222 104.5h1M224 103.5h1M226 108.5h1M228 103.5h1M230 104.5h1M232 103.5h1M234 104.5h1M234 108.5h1M236 103.5h1M238 104.5h1M240 103.5h1M242 104.5h1M244 103.5h1M248 103.5h1M250 104.5h1M252 103.5h1M256 103.5h1M256 109.5h1M260 103.5h1M260 109.5h1M262 104.5h1M264 103.5h1M266 104.5h1M268 103.5h1M272 103.5h1M274 104.5h1M276 103.5h1M280 103.5h1M282 104.5h1M284 103.5h1M284 108.5h2M286 104.5h1M288 103.5h1M288 109.5h2M292 103.5h1M296 103.5h1M298 104.5h1M300 103.5h1M302 104.5h1M304 103.5h1M306 104.5h1M308 103.5h1M312 103.5h1M314 104.5h1M316 103.5h1M316 109.5h1M318 104.5h1M320 103.5h1M320 108.5h1M322 104.5h1M324 103.5h1M324 108.5h2M326 104.5h1M328 103.5h1M330 104.5h1M332 103.5h1M334 104.5h1M336 103.5h1M340 103.5h1M342 104.5h1M342 108.5h2M344 103.5h1M344 108.5h3M346 104.5h1M348 103.5h1M350 104.5h1M350 108.5h1M352 103.5h1M354 104.5h1M356 103.5h1M356 108.5h2M358 104.5h1M360 103.5h1M362 104.5h1M362 109.5h2M364 103.5h1M364 108.5h1M366 104.5h1M366 109.5h3M368 103.5h1M370 104.5h1M370 109.5h2M372 103.5h1M374 104.5h1M376 103.5h1M376 109.5h3M378 104.5h1M380 103.5h1M382 104.5h1M382 108.5h3M384 103.5h1M388 103.5h1M390 104.5h1M390 108.5h2M392 103.5h1M394 104.5h1M396 103.5h1M398 104.5h1M398 108.5h3M400 103.5h1M402 104.5h1M404 103.5h1M406 104.5h1M408 103.5h1M408 109.5h3M410 104.5h1M412 103.5h1M414 104.5h1M414 108.5h1M416 103.5h1M418 104.5h1M420 103.5h1M422 104.5h1M422 109.5h3M424 103.5h1M426 104.5h1M428 103.5h1M428 109.5h3M430 104.5h1M432 103.5h1M432 109.5h1M434 104.5h1M434 109.5h2M436 103.5h1M440 103.5h1M442 104.5h1M444 103.5h1M446 104.5h1M446 108.5h3M448 103.5h1M448 108.5h3M450 104.5h1M450 109.5h1M452 103.5h1M454 104.5h1M456 103.5h1M456 109.5h2M458 104.5h1M458 109.5h2M460 103.5h1M462 104.5h1M464 103.5h1M466 104.5h1M466 109.5h1M468 103.5h1M468 109.5h1M470 104.5h1M472 103.5h1M474 104.5h1M474 108.5h1M476 103.5h1M478 104.5h1M480 103.5h1M482 104.5h1M484 103.5h1M484 109.5h1M486 104.5h1M488 103.5h1M490 104.5h1M490 109.5h2M492 103.5h1M496 103.5h1M496 108.5h2M498 104.5h1M500 103.5h1M500 108.5h1M502 104.5h1M504 103.5h1M506 104.5h1M508 103.5h1M510 104.5h1M512 103.5h1M516 103.5h1M518 104.5h1M518 109.5h1M520 103.5h1M520 109.5h2M522 104.5h1M524 103.5h1M524 108.5h2M528 103.5h1M530 104.5h1M532 103.5h1M553 108.5h1M555 109.5h1M557 108.5h1M559 109.5h1M561 108.5h1M561 105.5h1M563 109.5h1M563 104.5h1M565 108.5h1M565 104.5h1M567 109.5h1M567 103.5h1M569 108.5h1M569 102.5h1M571 109.5h1M571 102.5h1M573 108.5h1M575 109.5h1M575 104.5h1M577 108.5h1M577 106.5h1M579 109.5h1M581 108.5h1M583 109.5h1M585 108.5h1M587 108.5h1M589 109.5h1M591 108.5h1M593 109.5h1M595 108.5h1M597 109.5h1M599 108.5h1M601 109.5h1M603 108.5h1M603 102.5h1M605 109.5h1M605 103.5h1M607 108.5h1M607 103.5h1M609 109.5h1M609 105.5h1M611 108.5h1M611 106.5h1M613 109.5h1M613 107.5h1M615 108.5h1M617 109.5h1M619 108.5h1M621 108.5h1M623 109.5h1M625 108.5h1M627 109.5h1M627 106.5h1M629 108.5h1M629 105.5h1M631 109.5h1M631 104.5h1M633 108.5h1M633 103.5h1M635 109.5h1M637 108.5h1M639 109.5h1M639 102.5h1M641 108.5h1M641 103.5h1M643 109.5h1M643 104.5h1M645 108.5h1M645 105.5h1M647 109.5h1M649 108.5h1M651 109.5h1M653 108.5h1M656 108.5h1M658 109.5h1M660 108.5h1M662 109.5h1M662 107.5h1M664 108.5h1M666 109.5h1M666 104.5h1M668 108.5h1M668 103.5h1M670 109.5h1M670 103.5h1M672 108.5h1M672 102.5h1M674 109.5h1M676 108.5h1M678 109.5h1M678 105.5h1M680 108.5h1M682 109.5h1M684 108.5h1M686 109.5h1M688 108.5h1M690 108.5h1M692 109.5h1M694 108.5h1M696 109.5h1M696 107.5h1M698 108.5h1M698 105.5h1M700 109.5h1M702 108.5h1M702 104.5h1M704 109.5h1M706 108.5h1M708 109.5h1M708 103.5h1M710 108.5h1M710 104.5h1M712 109.5h1M712 105.5h1M714 108.5h1M714 106.5h1M716 109.5h1M716 106.5h1M718 108.5h1M720 109.5h1M722 108.5h1M724 108.5h1M726 109.5h1M728 108.5h1M730 109.5h1M732 108.5h1M732 106.5h1M734 109.5h1M734 105.5h1M736 108.5h1M736 104.5h1M738 109.5h1M738 102.5h1M740 108.5h1M740 101.5h1M742 109.5h1M742 102.5h1M744 108.5h1M744 104.5h1M746 109.5h1M746 105.5h1M748 108.5h1M750 109.5h1M750 107.5h1M752 108.5h1M754 109.5h1M756 108.5h1M758 108.5h1M760 109.5h1M762 108.5h1M764 109.5h1M764 106.5h1M766 108.5h1M766 106.5h1M768 109.5h1M770 108.5h1M772 109.5h1M772 102.5h1M774 108.5h1M774 102.5h1M776 109.5h1M778 108.5h1M780 109.5h1M780 104.5h1M782 108.5h1M782 105.5h1M784 109.5h1M784 106.5h1M786 108.5h1M788 109.5h1M790 108.5h1M793 108.5h1M795 109.5h1M797 108.5h1M799 109.5h1M799 106.5h1M801 108.5h1M801 106.5h1M803 109.5h1M805 108.5h1M805 104.5h1M807 109.5h1M807 103.5h1M809 108.5h1M811 109.5h1M811 103.5h1M813 108.5h1M815 109.5h1M815 105.5h1M817 108.5h1M819 109.5h1M819 106.5h1M821 108.5h1M823 109.5h1M825 108.5h1M827 108.5h1M829 109.5h1M831 108.5h1M833 109.5h1M833 106.5h1M835 108.5h1M837 109.5h1M837 105.5h1M839 108.5h1M839 104.5h1M841 109.5h1M841 102.5h1M843 108.5h1M843 102.5h1M845 109.5h1M845 103.5h1M847 108.5h1M847 104.5h1M849 109.5h1M849 105.5h1M851 108.5h1M851 106.5h1M853 109.5h1M853 107.5h1M855 108.5h1" stroke="#8684aa" stroke-width="1" shape-rendering="crispEdges" fill="none"/><path d="M4 108.5h1M6 109.5h1M28 108.5h2M50 109.5h2M60 108.5h3M90 109.5h1M94 109.5h1M160 109.5h2M180 109.5h2M186 109.5h3M190 108.5h2M222 109.5h2M224 108.5h3M228 109.5h2M236 109.5h3M238 108.5h2M262 108.5h3M276 109.5h1M294 109.5h2M296 108.5h1M306 109.5h1M336 108.5h3M340 108.5h3M358 109.5h2M374 109.5h2M388 109.5h3M394 108.5h3M400 109.5h3M402 109.5h1M412 108.5h2M424 108.5h2M452 109.5h1M454 109.5h2M480 108.5h2M494 108.5h3M502 108.5h2M506 108.5h1" stroke="#9c9ac2" stroke-width="1" shape-rendering="crispEdges" fill="none"/></svg>
<svg style="left:555px;top:500px;" width="855" height="43" viewBox="0 0 855 43"><path d="M0 25.5h30M30 27.5h20M51 26.5h10M61 26.5h4M66 26.5h4M70 25.5h6M77 25.5h8M85 27.5h4M91 26.5h14M106 27.5h60M166 26.5h8M174 25.5h6M180 26.5h4M186 26.5h4M190 26.5h20M211 25.5h14M227 26.5h6M234 26.5h6M240 26.5h4M244 25.5h14M259 26.5h14M273 26.5h30M304 25.5h14M320 26.5h8M328 26.5h8M338 25.5h6M346 25.5h20M366 26.5h60M428 26.5h4M432 26.5h60M492 26.5h60M553 26.5h6M561 26.5h14M575 26.5h8M583 26.5h4M588 25.5h6M595 25.5h10M605 27.5h30M637 26.5h30M669 26.5h8M677 26.5h10M687 26.5h20M707 26.5h10M717 26.5h60M778 26.5h60M839 27.5h30" stroke="#b9643f" stroke-width="1" shape-rendering="crispEdges" fill="none"/><path d="M347 31.5h1M375 32.5h2M396 32.5h1M403 36.5h1M459 33.5h1M466 32.5h1M473 32.5h1M480 32.5h2M494 36.5h1M508 32.5h2M571 33.5h1M599 31.5h1M613 32.5h1M634 32.5h1M641 36.5h2M669 31.5h2M676 32.5h1M704 31.5h1M767 33.5h2" stroke="#9a9a9e" stroke-width="1" shape-rendering="crispEdges" fill="none"/></svg>
<svg style="left:555px;top:817px;" width="855" height="2" viewBox="0 0 855 2"><path d="M14 0.5h1M31 0.5h1M48 0.5h1M65 0.5h1M82 0.5h1M99 0.5h1M116 0.5h1M133 0.5h1M150 0.5h1M168 0.5h1M185 0.5h1M202 0.5h1M219 0.5h1M236 0.5h1M253 0.5h1M270 0.5h1M287 0.5h1M304 0.5h1M321 0.5h1M338 0.5h1M355 0.5h1M372 0.5h1M389 0.5h1M407 0.5h1M424 0.5h1M441 0.5h1M458 0.5h1M475 0.5h1M492 0.5h1M509 0.5h1M526 0.5h1M543 0.5h1M560 0.5h1M577 0.5h1M594 0.5h1M611 0.5h1M628 0.5h1M645 0.5h1M663 0.5h1M680 0.5h1M697 0.5h1M714 0.5h1M731 0.5h1M748 0.5h1M765 0.5h1M782 0.5h1M799 0.5h1M816 0.5h1M833 0.5h1M850 0.5h1" stroke="#8f8f93" stroke-width="1" shape-rendering="crispEdges" fill="none"/></svg>
<svg style="left:555px;top:878px;" width="855" height="2" viewBox="0 0 855 2"><path d="M14 0.5h1M31 0.5h1M48 0.5h1M65 0.5h1M82 0.5h1M99 0.5h1M116 0.5h1M133 0.5h1M150 0.5h1M168 0.5h1M185 0.5h1M202 0.5h1M219 0.5h1M236 0.5h1M253 0.5h1M270 0.5h1M287 0.5h1M304 0.5h1M321 0.5h1M338 0.5h1M355 0.5h1M372 0.5h1M389 0.5h1M407 0.5h1M424 0.5h1M441 0.5h1M458 0.5h1M475 0.5h1M492 0.5h1M509 0.5h1M526 0.5h1M543 0.5h1M560 0.5h1M577 0.5h1M594 0.5h1M611 0.5h1M628 0.5h1M645 0.5h1M663 0.5h1M680 0.5h1M697 0.5h1M714 0.5h1M731 0.5h1" stroke="#8f8f93" stroke-width="1" shape-rendering="crispEdges" fill="none"/></svg>
<div style="left:1293px;top:849px;width:117px;height:17px;background:#3d3d3f;border-left:1px solid #555;"></div>
<div style="left:1297px;top:850px;font-size:11px;color:#c9c9c9;white-space:nowrap;height:15px;line-height:15px;letter-spacing:0.250px;">RythmPerehod</div>
<div style="left:1293px;top:866px;width:117px;height:41px;background:#2a2a2c;border-left:1px solid #555;"></div>
<svg style="left:1293px;top:866px;" width="117" height="41" viewBox="0 0 117 41"><path d="M0 21.500h117" stroke="#b93232" stroke-width="1"/><rect x="76" y="20" width="1" height="2" fill="#cc4038"/><rect x="78" y="20" width="1" height="2" fill="#cc4038"/><rect x="84" y="20" width="1" height="2" fill="#cc4038"/><rect x="88" y="19" width="1" height="2" fill="#cc4038"/><rect x="96" y="20" width="1" height="2" fill="#cc4038"/><rect x="104" y="19" width="1" height="2" fill="#cc4038"/><path d="M52 20.5h1M58 19.5h1M60 19.5h1M62 19.5h1M64 20.5h1M66 20.5h1M66 23.5h1M74 23.5h1M78 23.5h1M80 20.5h1M82 20.5h1M90 19.5h1M94 19.5h1M98 20.5h1M100 19.5h1M102 20.5h1M106 20.5h1M110 20.5h1M112 20.5h1M114 20.5h1" stroke="#cc4038" stroke-width="1" shape-rendering="crispEdges" fill="none"/></svg>
<div style="left:534px;top:219px;font-size:10px;color:#6d6e70;white-space:nowrap;width:17px;height:13px;line-height:13px;text-align:right;">dB</div>
<div style="left:551px;top:226px;width:3px;height:1px;background:#222;"></div>
<div style="left:534px;top:285px;font-size:10px;color:#6d6e70;white-space:nowrap;width:17px;height:13px;line-height:13px;text-align:right;">dB</div>
<div style="left:551px;top:292px;width:3px;height:1px;background:#222;"></div>
<svg style="left:538px;top:192px;" width="12" height="18" viewBox="0 0 12 18"><path d="M6 0v18M3 4q3-3 6 0M3 9q3-3 6 0M3 14q3-3 6 0" stroke="#5d5e60" stroke-width="1" fill="none"/></svg>
<svg style="left:538px;top:237px;" width="12" height="18" viewBox="0 0 12 18"><path d="M6 0v18M3 4q3-3 6 0M3 9q3-3 6 0M3 14q3-3 6 0" stroke="#5d5e60" stroke-width="1" fill="none"/></svg>
<svg style="left:538px;top:265px;" width="12" height="18" viewBox="0 0 12 18"><path d="M6 0v18M3 4q3-3 6 0M3 9q3-3 6 0M3 14q3-3 6 0" stroke="#5d5e60" stroke-width="1" fill="none"/></svg>
<svg style="left:538px;top:304px;" width="12" height="18" viewBox="0 0 12 18"><path d="M6 0v18M3 4q3-3 6 0M3 9q3-3 6 0M3 14q3-3 6 0" stroke="#5d5e60" stroke-width="1" fill="none"/></svg>
<div style="left:531px;top:357px;font-size:10px;color:#6a6b6d;white-space:nowrap;width:20px;height:12px;line-height:12px;text-align:right;letter-spacing:-0.3px;">120</div>
<div style="left:534px;top:356px;width:20px;height:1px;background:#77787a;"></div>
<div style="left:531px;top:371px;font-size:10px;color:#6a6b6d;white-space:nowrap;width:20px;height:12px;line-height:12px;text-align:right;letter-spacing:-0.3px;">108</div>
<div style="left:534px;top:370px;width:20px;height:1px;background:#77787a;"></div>
<div style="left:531px;top:386px;font-size:10px;color:#6a6b6d;white-space:nowrap;width:20px;height:12px;line-height:12px;text-align:right;letter-spacing:-0.3px;">96</div>
<div style="left:534px;top:385px;width:20px;height:1px;background:#77787a;"></div>
<div style="left:531px;top:400px;font-size:10px;color:#6a6b6d;white-space:nowrap;width:20px;height:12px;line-height:12px;text-align:right;letter-spacing:-0.3px;">84</div>
<div style="left:534px;top:399px;width:20px;height:1px;background:#77787a;"></div>
<div style="left:531px;top:414px;font-size:10px;color:#6a6b6d;white-space:nowrap;width:20px;height:12px;line-height:12px;text-align:right;letter-spacing:-0.3px;">72</div>
<div style="left:534px;top:413px;width:20px;height:1px;background:#77787a;"></div>
<div style="left:531px;top:429px;font-size:10px;color:#6a6b6d;white-space:nowrap;width:20px;height:12px;line-height:12px;text-align:right;letter-spacing:-0.3px;">60</div>
<div style="left:534px;top:428px;width:20px;height:1px;background:#77787a;"></div>
<div style="left:531px;top:443px;font-size:10px;color:#6a6b6d;white-space:nowrap;width:20px;height:12px;line-height:12px;text-align:right;letter-spacing:-0.3px;">48</div>
<div style="left:534px;top:442px;width:20px;height:1px;background:#77787a;"></div>
<div style="left:531px;top:457px;font-size:10px;color:#6a6b6d;white-space:nowrap;width:20px;height:12px;line-height:12px;text-align:right;letter-spacing:-0.3px;">36</div>
<div style="left:534px;top:456px;width:20px;height:1px;background:#77787a;"></div>
<div style="left:534px;top:471px;width:20px;height:1px;background:#77787a;"></div>
<div style="left:535px;top:637px;font-size:9px;color:#636466;white-space:nowrap;width:15px;height:13px;line-height:13px;text-align:right;">dB</div>
<div style="left:551px;top:644px;width:3px;height:1px;background:#222;"></div>
<div style="left:535px;top:698px;font-size:9px;color:#636466;white-space:nowrap;width:15px;height:13px;line-height:13px;text-align:right;">dB</div>
<div style="left:551px;top:705px;width:3px;height:1px;background:#222;"></div>
<div style="left:535px;top:759px;font-size:9px;color:#636466;white-space:nowrap;width:15px;height:13px;line-height:13px;text-align:right;">dB</div>
<div style="left:551px;top:766px;width:3px;height:1px;background:#222;"></div>
<div style="left:535px;top:820px;font-size:9px;color:#636466;white-space:nowrap;width:15px;height:13px;line-height:13px;text-align:right;">dB</div>
<div style="left:551px;top:827px;width:3px;height:1px;background:#222;"></div>
<div style="left:535px;top:881px;font-size:9px;color:#636466;white-space:nowrap;width:15px;height:13px;line-height:13px;text-align:right;">dB</div>
<div style="left:551px;top:888px;width:3px;height:1px;background:#222;"></div>
<div style="left:534px;top:329px;width:19px;height:1px;background:#747577;"></div>
<div style="left:534px;top:483px;width:19px;height:1px;background:#747577;"></div>
<div style="left:534px;top:544px;width:19px;height:1px;background:#747577;"></div>
<div style="left:534px;top:605px;width:19px;height:1px;background:#747577;"></div>
<div style="left:534px;top:666px;width:19px;height:1px;background:#747577;"></div>
<div style="left:534px;top:727px;width:19px;height:1px;background:#747577;"></div>
<div style="left:534px;top:788px;width:19px;height:1px;background:#747577;"></div>
<div style="left:534px;top:849px;width:19px;height:1px;background:#747577;"></div>
<div style="left:534px;top:910px;width:19px;height:1px;background:#747577;"></div>
<div style="left:233px;top:173px;width:298px;height:154px;background:#2f3031;"></div>
<div style="left:243px;top:176px;width:34px;height:18px;background:linear-gradient(#e4964e,#da8a44);border-radius:1px;"></div>
<div style="left:243px;top:176px;font-size:12px;color:#2a2a2a;white-space:nowrap;width:34px;height:18px;line-height:18px;text-align:center;">1</div>
<div style="left:279px;top:175px;width:20px;height:20px;background:#2d2f31;border:1px solid #8a8b8c;border-radius:2px;"></div>
<svg style="left:281px;top:177px;" width="8" height="8" viewBox="0 0 16 16"><circle cx="8" cy="8" r="7.300" fill="#f2f2f2"/><rect x="6" y="12.500" width="4" height="3" fill="#2f3031"/><circle cx="3.800" cy="8.500" r="1.200" fill="#2f3031"/><circle cx="12.200" cy="8.500" r="1.200" fill="#2f3031"/><circle cx="5" cy="5" r="1.200" fill="#2f3031"/><circle cx="11" cy="5" r="1.200" fill="#2f3031"/><circle cx="8" cy="3.600" r="1.200" fill="#2f3031"/></svg>
<svg style="left:286px;top:182px;" width="9" height="9" viewBox="0 0 9 9"><rect x="0" y="0" width="9" height="9" fill="#f4f4f4"/><rect x="0.9" y="0.9" width="7.2" height="2.3" fill="#858687"/><rect x="0.8" y="3.2" width="1.0" height="3.2" fill="#2a2b2c"/><rect x="3.0" y="3.2" width="1.0" height="3.2" fill="#2a2b2c"/><rect x="5.1" y="3.2" width="1.0" height="3.2" fill="#2a2b2c"/><rect x="7.3" y="3.2" width="1.0" height="3.2" fill="#2a2b2c"/></svg>
<div style="left:303px;top:176px;width:92px;height:19px;background:#2a2c2e;border-radius:2px;"></div>
<div style="left:303px;top:176px;width:92px;height:19px;overflow:hidden;"><div class="b" style="left:3px;top:0px;font-size:11px;color:#f4f8fb;white-space:nowrap;height:19px;line-height:19px;">MT-PowerDrumKit 1</div></div>
<svg style="left:484px;top:179px;" width="9" height="11" viewBox="0 0 9 11"><path d="M0.500 5h8L4.500 0.500zM0.500 10.500h8L4.500 6z" fill="#bdbdbd"/></svg>
<div style="left:261px;top:199px;width:38px;height:36px;background:#2a2b2c;border-radius:3px;"></div>
<svg style="left:271px;top:206px;" width="11" height="11" viewBox="0 0 16 16"><circle cx="8" cy="8" r="7.300" fill="#f2f2f2"/><rect x="6" y="12.500" width="4" height="3" fill="#2f3031"/><circle cx="3.800" cy="8.500" r="1.200" fill="#2f3031"/><circle cx="12.200" cy="8.500" r="1.200" fill="#2f3031"/><circle cx="5" cy="5" r="1.200" fill="#2f3031"/><circle cx="11" cy="5" r="1.200" fill="#2f3031"/><circle cx="8" cy="3.600" r="1.200" fill="#2f3031"/></svg>
<svg style="left:275px;top:210px;" width="17" height="16" viewBox="0 0 17 16"><rect x="0" y="0" width="17" height="16" fill="#f4f4f4"/><rect x="1.7" y="1.6" width="13.6" height="4.2" fill="#858687"/><rect x="1.5" y="5.8" width="1.7" height="5.8" fill="#2a2b2c"/><rect x="5.6" y="5.8" width="1.7" height="5.8" fill="#2a2b2c"/><rect x="9.7" y="5.8" width="1.7" height="5.8" fill="#2a2b2c"/><rect x="13.8" y="5.8" width="1.7" height="5.8" fill="#2a2b2c"/></svg>
<div style="left:303px;top:199px;width:20px;height:20px;background:#4a4b4d;border-radius:2px;"></div>
<div style="left:303px;top:199px;font-size:11px;color:#d4d4d4;white-space:nowrap;width:20px;height:20px;line-height:20px;text-align:center;">M</div>
<div style="left:327px;top:199px;width:20px;height:20px;background:#3edb6e;border-radius:2px;"></div>
<div style="left:327px;top:199px;font-size:11px;color:#0f3a1c;white-space:nowrap;width:20px;height:20px;line-height:20px;text-align:center;">S</div>
<div style="left:351px;top:199px;width:20px;height:20px;background:#4a4b4d;border-radius:2px;"></div>
<svg style="left:351px;top:199px;" width="20" height="20" viewBox="0 0 20 20"><circle cx="10" cy="10" r="4.600" fill="#ee3340"/></svg>
<div style="left:375px;top:199px;width:20px;height:20px;background:#4a4b4d;border-radius:2px;"></div>
<svg style="left:375px;top:199px;" width="20" height="20" viewBox="0 0 20 20"><path d="M4.5 4.5v11M5.9 7v6M7.3 5.5v9M8.7 7.5v5M10.1 6.5v7M11.5 8v4M12.9 7.5v5M14.3 8.5v3M15.7 8.5v3M17.1 9v2M18 10h-0.5" stroke="#f2f2f2" stroke-width="0.900" fill="none"/></svg>
<div style="left:303px;top:224px;width:92px;height:20px;background:#4a4c4e;border-radius:2px;"></div>
<div style="left:307px;top:224px;font-size:11px;color:#ededed;white-space:nowrap;height:20px;line-height:20px;">Клипы</div>
<svg style="left:383px;top:231px;" width="8" height="7" viewBox="0 0 8 7"><path d="M0 0h8L4 7z" fill="#e4e4e4"/></svg>
<div style="left:303px;top:249px;width:20px;height:20px;background:#dedede;border-radius:2px;"></div>
<div style="left:303px;top:249px;font-size:12px;color:#1b1b1b;white-space:nowrap;width:20px;height:20px;line-height:20px;text-align:center;">R</div>
<div style="left:327px;top:249px;width:20px;height:20px;background:#4a4b4d;border-radius:2px;"></div>
<div style="left:326px;top:249px;font-size:11px;color:#cfcfcf;white-space:nowrap;width:20px;height:19px;line-height:19px;text-align:center;">W</div>
<div style="left:340px;top:258px;font-size:6px;color:#cfcfcf;white-space:nowrap;height:8px;line-height:8px;">T</div>
<div style="left:351px;top:249px;width:20px;height:20px;background:#4a4b4d;border-radius:2px;"></div>
<svg style="left:351px;top:249px;" width="20" height="20" viewBox="0 0 20 20"><path d="M10 4v12M4.800 7l10.400 6M15.200 7L4.800 13" stroke="#f2f2f2" stroke-width="1.700"/></svg>
<div style="left:375px;top:249px;width:20px;height:20px;background:#4a4b4d;border-radius:2px;"></div>
<div style="left:375px;top:249px;font-size:13px;color:#d8d8d8;white-space:nowrap;width:20px;height:20px;line-height:20px;text-align:center;">A</div>
<div style="left:303px;top:274px;width:92px;height:20px;background:#4a4c4e;border-radius:2px;"></div>
<div style="left:306px;top:278px;width:10px;height:12px;background:#8e8f90;border-radius:2px;"></div>
<div class="b" style="left:306px;top:278px;font-size:9px;color:#4a4c4e;white-space:nowrap;width:10px;height:12px;line-height:12px;text-align:center;">I</div>
<div style="left:318px;top:274px;font-size:11px;color:#ededed;white-space:nowrap;height:20px;line-height:20px;">MTPwr11...</div>
<svg style="left:383px;top:280px;" width="8" height="7" viewBox="0 0 8 7"><path d="M0 0h8L4 7z" fill="#e4e4e4"/></svg>
<svg style="left:301px;top:272px;" width="96" height="24" viewBox="0 0 96 24"><path d="M0.500 4V0.500H4M92 0.500h3.500V4M95.5 20v3.500h-3.500M4 23.5H0.500v-3.500" stroke="#fff" stroke-width="1" fill="none"/></svg>
<div style="left:303px;top:299px;width:92px;height:19px;background:#4a4c4e;border-radius:2px;"></div>
<div style="left:306px;top:302px;width:10px;height:12px;background:#8e8f90;border-radius:2px;"></div>
<div class="b" style="left:306px;top:302px;font-size:9px;color:#4a4c4e;white-space:nowrap;width:10px;height:12px;line-height:12px;text-align:center;">O</div>
<div style="left:318px;top:299px;font-size:11px;color:#ededed;white-space:nowrap;height:19px;line-height:19px;">Master</div>
<svg style="left:383px;top:305px;" width="8" height="7" viewBox="0 0 8 7"><path d="M0 0h8L4 7z" fill="#e4e4e4"/></svg>
<div style="left:243px;top:304px;width:20px;height:20px;background:#4a4b4d;border-radius:2px;"></div>
<svg style="left:243px;top:304px;" width="20" height="20" viewBox="0 0 20 20"><path d="M5 6.500h8M3.500 10h8M7 13.500h8" stroke="#ececec" stroke-width="1.800"/></svg>
<div style="left:267px;top:304px;width:20px;height:20px;background:#4a4b4d;border-radius:2px;"></div>
<svg style="left:267px;top:304px;" width="20" height="20" viewBox="0 0 20 20"><path d="M4 14l4-8 4 8 4-8" stroke="#f0f0f0" stroke-width="1.500" fill="none"/><circle cx="4" cy="14" r="1.500" fill="#f0f0f0"/><circle cx="8" cy="6" r="1.500" fill="#f0f0f0"/><circle cx="12" cy="14" r="1.500" fill="#f0f0f0"/><circle cx="16" cy="6" r="1.500" fill="#f0f0f0"/></svg>
<div style="left:400px;top:199px;width:94px;height:124px;background:#2b2c2d;"></div>
<div style="left:400px;top:199px;width:94px;height:17px;background:#28292a;"></div>
<svg style="left:403px;top:201px;" width="12" height="12" viewBox="0 0 12 12"><circle cx="6" cy="6.500" r="4" fill="#4a2c12"/><path d="M3.600 3.400A4 4 0 1 0 8.400 3.400" stroke="#dc9a62" stroke-width="2.400" fill="none"/><path d="M6 0.800v5.200" stroke="#dc9a62" stroke-width="2.400"/></svg>
<div style="left:418px;top:199px;font-size:11px;color:#f0f0f0;white-space:nowrap;height:16px;line-height:16px;">FX</div>
<svg style="left:481px;top:203px;" width="9" height="9" viewBox="0 0 9 9"><path d="M4.500 0.500v8M0.500 4.500h8" stroke="#c4c4c4" stroke-width="1.600"/></svg>
<div style="left:499px;top:176px;width:10px;height:148px;background:#2c2d2e;"></div>
<div style="left:507px;top:190px;font-size:9px;color:#808182;white-space:nowrap;width:17px;height:12px;line-height:12px;text-align:right;letter-spacing:-0.5px;">-6</div>
<div style="left:507px;top:204px;font-size:9px;color:#808182;white-space:nowrap;width:17px;height:12px;line-height:12px;text-align:right;letter-spacing:-0.5px;">-12</div>
<div style="left:507px;top:217px;font-size:9px;color:#808182;white-space:nowrap;width:17px;height:12px;line-height:12px;text-align:right;letter-spacing:-0.5px;">-18</div>
<div style="left:507px;top:231px;font-size:9px;color:#808182;white-space:nowrap;width:17px;height:12px;line-height:12px;text-align:right;letter-spacing:-0.5px;">-24</div>
<div style="left:507px;top:244px;font-size:9px;color:#808182;white-space:nowrap;width:17px;height:12px;line-height:12px;text-align:right;letter-spacing:-0.5px;">-30</div>
<div style="left:507px;top:258px;font-size:9px;color:#808182;white-space:nowrap;width:17px;height:12px;line-height:12px;text-align:right;letter-spacing:-0.5px;">-36</div>
<div style="left:507px;top:272px;font-size:9px;color:#808182;white-space:nowrap;width:17px;height:12px;line-height:12px;text-align:right;letter-spacing:-0.5px;">-42</div>
<div style="left:507px;top:285px;font-size:9px;color:#808182;white-space:nowrap;width:17px;height:12px;line-height:12px;text-align:right;letter-spacing:-0.5px;">-48</div>
<div style="left:507px;top:299px;font-size:9px;color:#808182;white-space:nowrap;width:17px;height:12px;line-height:12px;text-align:right;letter-spacing:-0.5px;">-54</div>
<div style="left:233px;top:329px;width:298px;height:152px;background:#2f3031;"></div>
<div style="left:243px;top:332px;width:34px;height:17px;background:linear-gradient(#e4964e,#da8a44);border-radius:1px;"></div>
<div style="left:243px;top:332px;font-size:12px;color:#2a2a2a;white-space:nowrap;width:34px;height:17px;line-height:17px;text-align:center;">2</div>
<svg style="left:281px;top:333px;" width="16" height="16" viewBox="0 0 16 16"><circle cx="8" cy="8" r="7.300" fill="#f2f2f2"/><rect x="6" y="12.500" width="4" height="3" fill="#2f3031"/><circle cx="3.800" cy="8.500" r="1.200" fill="#2f3031"/><circle cx="12.200" cy="8.500" r="1.200" fill="#2f3031"/><circle cx="5" cy="5" r="1.200" fill="#2f3031"/><circle cx="11" cy="5" r="1.200" fill="#2f3031"/><circle cx="8" cy="3.600" r="1.200" fill="#2f3031"/></svg>
<div style="left:303px;top:332px;width:92px;height:18px;background:#f0b46a;border-radius:2px;"></div>
<div style="left:303px;top:332px;width:92px;height:18px;overflow:hidden;"><div class="b" style="left:3px;top:0px;font-size:11px;color:#2a1c0c;white-space:nowrap;height:18px;line-height:18px;">MT-PowerDrumKit 1</div></div>
<svg style="left:484px;top:334px;" width="9" height="11" viewBox="0 0 9 11"><path d="M0.500 5h8L4.500 0.500zM0.500 10.500h8L4.500 6z" fill="#bdbdbd"/></svg>
<div style="left:265px;top:354px;width:34px;height:36px;background:#2a2b2c;border-radius:3px;"></div>
<svg style="left:272px;top:362px;" width="20" height="20" viewBox="0 0 16 16"><circle cx="8" cy="8" r="7.300" fill="#f2f2f2"/><rect x="6" y="12.500" width="4" height="3" fill="#2f3031"/><circle cx="3.800" cy="8.500" r="1.200" fill="#2f3031"/><circle cx="12.200" cy="8.500" r="1.200" fill="#2f3031"/><circle cx="5" cy="5" r="1.200" fill="#2f3031"/><circle cx="11" cy="5" r="1.200" fill="#2f3031"/><circle cx="8" cy="3.600" r="1.200" fill="#2f3031"/></svg>
<div style="left:303px;top:354px;width:20px;height:20px;background:#4a4b4d;border-radius:2px;"></div>
<div style="left:303px;top:354px;font-size:11px;color:#d4d4d4;white-space:nowrap;width:20px;height:20px;line-height:20px;text-align:center;">M</div>
<div style="left:327px;top:354px;width:20px;height:20px;background:#3edb6e;border-radius:2px;"></div>
<div style="left:327px;top:354px;font-size:11px;color:#0f3a1c;white-space:nowrap;width:20px;height:20px;line-height:20px;text-align:center;">S</div>
<div style="left:351px;top:354px;width:20px;height:20px;background:#4a4b4d;border-radius:2px;"></div>
<svg style="left:351px;top:354px;" width="20" height="20" viewBox="0 0 20 20"><circle cx="10" cy="10" r="4.600" fill="#ee3340"/></svg>
<div style="left:375px;top:354px;width:20px;height:20px;background:#e0924a;border-radius:2px;"></div>
<svg style="left:375px;top:354px;" width="20" height="20" viewBox="0 0 20 20"><circle cx="5" cy="10" r="1.700" fill="#3a2410"/><path d="M8.300 7q2 3 0 6M11 5.500q3 4.500 0 9M13.700 4q4 6 0 12" stroke="#3a2410" stroke-width="1.200" fill="none"/></svg>
<div style="left:388px;top:364px;font-size:8px;color:#3a2410;white-space:nowrap;height:9px;line-height:9px;">A</div>
<div style="left:303px;top:379px;width:92px;height:20px;background:#4a4c4e;border-radius:2px;"></div>
<div style="left:307px;top:379px;font-size:11px;color:#ededed;white-space:nowrap;height:20px;line-height:20px;">Клипы</div>
<svg style="left:383px;top:386px;" width="8" height="7" viewBox="0 0 8 7"><path d="M0 0h8L4 7z" fill="#e4e4e4"/></svg>
<div style="left:303px;top:404px;width:20px;height:20px;background:#dedede;border-radius:2px;"></div>
<div style="left:303px;top:404px;font-size:12px;color:#1b1b1b;white-space:nowrap;width:20px;height:20px;line-height:20px;text-align:center;">R</div>
<div style="left:327px;top:404px;width:20px;height:20px;background:#4a4b4d;border-radius:2px;"></div>
<div style="left:326px;top:404px;font-size:11px;color:#cfcfcf;white-space:nowrap;width:20px;height:19px;line-height:19px;text-align:center;">W</div>
<div style="left:340px;top:413px;font-size:6px;color:#cfcfcf;white-space:nowrap;height:8px;line-height:8px;">T</div>
<div style="left:351px;top:404px;width:20px;height:20px;background:#4a4b4d;border-radius:2px;"></div>
<svg style="left:351px;top:404px;" width="20" height="20" viewBox="0 0 20 20"><path d="M10 4v12M4.800 7l10.400 6M15.200 7L4.800 13" stroke="#f2f2f2" stroke-width="1.700"/></svg>
<div style="left:375px;top:404px;width:20px;height:20px;background:#4a4b4d;border-radius:2px;"></div>
<div style="left:375px;top:404px;font-size:13px;color:#d8d8d8;white-space:nowrap;width:20px;height:20px;line-height:20px;text-align:center;">A</div>
<div style="left:303px;top:429px;width:92px;height:19px;background:#4a4c4e;border-radius:2px;"></div>
<div style="left:306px;top:432px;width:10px;height:12px;background:#8e8f90;border-radius:2px;"></div>
<div class="b" style="left:306px;top:432px;font-size:9px;color:#4a4c4e;white-space:nowrap;width:10px;height:12px;line-height:12px;text-align:center;">I</div>
<div style="left:318px;top:429px;font-size:11px;color:#ededed;white-space:nowrap;height:19px;line-height:19px;">Все Вход...</div>
<svg style="left:383px;top:435px;" width="8" height="7" viewBox="0 0 8 7"><path d="M0 0h8L4 7z" fill="#e4e4e4"/></svg>
<div style="left:303px;top:454px;width:92px;height:19px;background:#a7794b;border-radius:2px;"></div>
<div style="left:306px;top:457px;width:10px;height:12px;background:#c8a684;border-radius:2px;"></div>
<div class="b" style="left:306px;top:457px;font-size:9px;color:#a7794b;white-space:nowrap;width:10px;height:12px;line-height:12px;text-align:center;">O</div>
<div style="left:318px;top:454px;font-size:11px;color:#f4ede4;white-space:nowrap;height:19px;line-height:19px;">4-DM1-</div>
<svg style="left:383px;top:460px;" width="8" height="7" viewBox="0 0 8 7"><path d="M0 0h8L4 7z" fill="#2a1c0c"/></svg>
<svg style="left:301px;top:452px;" width="96" height="23" viewBox="0 0 96 23"><path d="M0.500 4V0.500H4M92 0.500h3.500V4M95.5 19v3.500h-3.500M4 22.5H0.500v-3.500" stroke="#fff" stroke-width="1" fill="none"/></svg>
<div style="left:243px;top:459px;width:20px;height:20px;background:#9a7048;border-radius:2px;"></div>
<svg style="left:243px;top:459px;" width="20" height="20" viewBox="0 0 20 20"><path d="M5 6.500h8M3.500 10h8M7 13.500h8" stroke="#4a2f18" stroke-width="1.800"/></svg>
<div style="left:267px;top:459px;width:20px;height:20px;background:#4a4b4d;border-radius:2px;"></div>
<svg style="left:267px;top:459px;" width="20" height="20" viewBox="0 0 20 20"><path d="M4 14l4-8 4 8 4-8" stroke="#f0f0f0" stroke-width="1.500" fill="none"/><circle cx="4" cy="14" r="1.500" fill="#f0f0f0"/><circle cx="8" cy="6" r="1.500" fill="#f0f0f0"/><circle cx="12" cy="14" r="1.500" fill="#f0f0f0"/><circle cx="16" cy="6" r="1.500" fill="#f0f0f0"/></svg>
<div style="left:400px;top:354px;width:94px;height:124px;background:#2b2c2d;"></div>
<div style="left:400px;top:354px;width:94px;height:17px;background:#28292a;"></div>
<svg style="left:403px;top:356px;" width="12" height="12" viewBox="0 0 12 12"><circle cx="6" cy="6.500" r="4" fill="#4a2c12"/><path d="M3.600 3.400A4 4 0 1 0 8.400 3.400" stroke="#dc9a62" stroke-width="2.400" fill="none"/><path d="M6 0.800v5.200" stroke="#dc9a62" stroke-width="2.400"/></svg>
<div style="left:418px;top:354px;font-size:11px;color:#f0f0f0;white-space:nowrap;height:16px;line-height:16px;">FX</div>
<svg style="left:481px;top:358px;" width="9" height="9" viewBox="0 0 9 9"><path d="M4.500 0.500v8M0.500 4.500h8" stroke="#c4c4c4" stroke-width="1.600"/></svg>
<div style="left:499px;top:332px;width:10px;height:146px;background:#2c2d2e;"></div>
<div style="left:233px;top:483px;width:298px;height:58px;background:#2f3031;"></div>
<div style="left:242px;top:486px;font-size:12px;color:#f0f0f0;white-space:nowrap;width:34px;height:18px;line-height:18px;text-align:center;">3</div>
<div style="left:279px;top:484px;width:20px;height:20px;background:#2a2b2c;border:1px solid #8a8b8c;border-radius:2px;"></div>
<svg style="left:283px;top:487px;" width="13" height="13" viewBox="0 0 13 13"><rect x="0" y="0" width="13" height="13" fill="#f4f4f4"/><rect x="1.3" y="1.3" width="10.4" height="3.4" fill="#858687"/><rect x="1.2" y="4.7" width="1.3" height="4.7" fill="#2a2b2c"/><rect x="4.3" y="4.7" width="1.3" height="4.7" fill="#2a2b2c"/><rect x="7.4" y="4.7" width="1.3" height="4.7" fill="#2a2b2c"/><rect x="10.5" y="4.7" width="1.3" height="4.7" fill="#2a2b2c"/></svg>
<div style="left:303px;top:485px;width:92px;height:19px;background:#26282a;border-radius:2px;"></div>
<div class="b" style="left:306px;top:485px;font-size:11px;color:#f4f8fb;white-space:nowrap;height:19px;line-height:19px;">Kontakt 5 1</div>
<div style="left:303px;top:508px;width:20px;height:20px;background:#4a4b4d;border-radius:2px;"></div>
<div style="left:303px;top:508px;font-size:11px;color:#d4d4d4;white-space:nowrap;width:20px;height:20px;line-height:20px;text-align:center;">M</div>
<div style="left:327px;top:508px;width:20px;height:20px;background:#3edb6e;border-radius:2px;"></div>
<div style="left:327px;top:508px;font-size:11px;color:#0f3a1c;white-space:nowrap;width:20px;height:20px;line-height:20px;text-align:center;">S</div>
<div style="left:351px;top:508px;width:20px;height:20px;background:#4a4b4d;border-radius:2px;"></div>
<svg style="left:351px;top:508px;" width="20" height="20" viewBox="0 0 20 20"><circle cx="10" cy="10" r="4.600" fill="#ee3340"/></svg>
<div style="left:375px;top:508px;width:20px;height:20px;background:#e0924a;border-radius:2px;"></div>
<svg style="left:375px;top:508px;" width="20" height="20" viewBox="0 0 20 20"><circle cx="5" cy="10" r="1.700" fill="#3a2410"/><path d="M8.300 7q2 3 0 6M11 5.500q3 4.500 0 9M13.700 4q4 6 0 12" stroke="#3a2410" stroke-width="1.200" fill="none"/></svg>
<div style="left:243px;top:519px;width:20px;height:20px;background:#9a7048;border-radius:2px;"></div>
<svg style="left:243px;top:519px;" width="20" height="20" viewBox="0 0 20 20"><path d="M5 6.500h8M3.500 10h8M7 13.500h8" stroke="#4a2f18" stroke-width="1.800"/></svg>
<div style="left:267px;top:519px;width:20px;height:20px;background:#4a4b4d;border-radius:2px;"></div>
<svg style="left:267px;top:519px;" width="20" height="20" viewBox="0 0 20 20"><path d="M4 14l4-8 4 8 4-8" stroke="#f0f0f0" stroke-width="1.500" fill="none"/><circle cx="4" cy="14" r="1.500" fill="#f0f0f0"/><circle cx="8" cy="6" r="1.500" fill="#f0f0f0"/><circle cx="12" cy="14" r="1.500" fill="#f0f0f0"/><circle cx="16" cy="6" r="1.500" fill="#f0f0f0"/></svg>
<svg style="left:484px;top:488px;" width="9" height="11" viewBox="0 0 9 11"><path d="M0.500 5h8L4.500 0.500zM0.500 10.500h8L4.500 6z" fill="#bdbdbd"/></svg>
<div style="left:400px;top:508px;width:94px;height:31px;background:#2b2c2d;"></div>
<div style="left:400px;top:508px;width:94px;height:17px;background:#28292a;"></div>
<svg style="left:403px;top:510px;" width="12" height="12" viewBox="0 0 12 12"><circle cx="6" cy="6.500" r="4" fill="#4a2c12"/><path d="M3.600 3.400A4 4 0 1 0 8.400 3.400" stroke="#dc9a62" stroke-width="2.400" fill="none"/><path d="M6 0.800v5.200" stroke="#dc9a62" stroke-width="2.400"/></svg>
<div style="left:418px;top:508px;font-size:11px;color:#f0f0f0;white-space:nowrap;height:16px;line-height:16px;">FX</div>
<svg style="left:481px;top:512px;" width="9" height="9" viewBox="0 0 9 9"><path d="M4.500 0.500v8M0.500 4.500h8" stroke="#c4c4c4" stroke-width="1.600"/></svg>
<div style="left:498px;top:485px;width:12px;height:54px;background:#2c2d2e;border-radius:2px;"></div>
<div style="left:509px;top:490px;font-size:8px;color:#808182;white-space:nowrap;width:15px;height:12px;line-height:12px;text-align:right;letter-spacing:-0.5px;">-6</div>
<div style="left:509px;top:499px;font-size:8px;color:#808182;white-space:nowrap;width:15px;height:12px;line-height:12px;text-align:right;letter-spacing:-0.5px;">-18</div>
<div style="left:509px;top:508px;font-size:8px;color:#808182;white-space:nowrap;width:15px;height:12px;line-height:12px;text-align:right;letter-spacing:-0.5px;">-30</div>
<div style="left:509px;top:516px;font-size:8px;color:#808182;white-space:nowrap;width:15px;height:12px;line-height:12px;text-align:right;letter-spacing:-0.5px;">-42</div>
<div style="left:509px;top:525px;font-size:8px;color:#808182;white-space:nowrap;width:15px;height:12px;line-height:12px;text-align:right;letter-spacing:-0.5px;">-54</div>
<div style="left:233px;top:544px;width:298px;height:58px;background:#2f3031;"></div>
<div style="left:242px;top:547px;font-size:12px;color:#f0f0f0;white-space:nowrap;width:34px;height:18px;line-height:18px;text-align:center;">4</div>
<svg style="left:280px;top:547px;" width="18" height="17" viewBox="0 0 18 17"><path d="M1 4h6l2-2 2 3 2-2h4M1 13h3l2 2 2-3 2 2 2-2 2 1h3" stroke="#e6e6e6" stroke-width="1.300" fill="none"/><path d="M3 8.500h5M10 8.500h5" stroke="#e6e6e6" stroke-width="1.500"/></svg>
<div style="left:303px;top:546px;width:92px;height:19px;background:#26282a;border-radius:2px;"></div>
<div class="b" style="left:306px;top:546px;font-size:11px;color:#f4f8fb;white-space:nowrap;height:19px;line-height:19px;">Дорожка 4</div>
<div style="left:303px;top:569px;width:20px;height:20px;background:#4a4b4d;border-radius:2px;"></div>
<div style="left:303px;top:569px;font-size:11px;color:#d4d4d4;white-space:nowrap;width:20px;height:20px;line-height:20px;text-align:center;">M</div>
<div style="left:327px;top:569px;width:20px;height:20px;background:#4a4b4d;border-radius:2px;"></div>
<div style="left:327px;top:569px;font-size:11px;color:#d4d4d4;white-space:nowrap;width:20px;height:20px;line-height:20px;text-align:center;">S</div>
<div style="left:351px;top:569px;width:20px;height:20px;background:#4a4b4d;border-radius:2px;"></div>
<svg style="left:351px;top:569px;" width="20" height="20" viewBox="0 0 20 20"><circle cx="10" cy="10" r="4.600" fill="#ee3340"/></svg>
<div style="left:375px;top:569px;width:20px;height:20px;background:#4a4b4d;border-radius:2px;"></div>
<svg style="left:375px;top:569px;" width="20" height="20" viewBox="0 0 20 20"><circle cx="5" cy="10" r="1.700" fill="#dcdcdc"/><path d="M8.300 7q2 3 0 6M11 5.500q3 4.500 0 9M13.700 4q4 6 0 12" stroke="#dcdcdc" stroke-width="1.200" fill="none"/></svg>
<div style="left:243px;top:580px;width:20px;height:20px;background:#9a7048;border-radius:2px;"></div>
<svg style="left:243px;top:580px;" width="20" height="20" viewBox="0 0 20 20"><path d="M5 6.500h8M3.500 10h8M7 13.500h8" stroke="#4a2f18" stroke-width="1.800"/></svg>
<div style="left:267px;top:580px;width:20px;height:20px;background:#4a4b4d;border-radius:2px;"></div>
<svg style="left:267px;top:580px;" width="20" height="20" viewBox="0 0 20 20"><path d="M4 14l4-8 4 8 4-8" stroke="#f0f0f0" stroke-width="1.500" fill="none"/><circle cx="4" cy="14" r="1.500" fill="#f0f0f0"/><circle cx="8" cy="6" r="1.500" fill="#f0f0f0"/><circle cx="12" cy="14" r="1.500" fill="#f0f0f0"/><circle cx="16" cy="6" r="1.500" fill="#f0f0f0"/></svg>
<svg style="left:484px;top:549px;" width="9" height="11" viewBox="0 0 9 11"><path d="M0.500 5h8L4.500 0.500zM0.500 10.500h8L4.500 6z" fill="#bdbdbd"/></svg>
<div style="left:400px;top:569px;width:94px;height:31px;background:#2b2c2d;"></div>
<div style="left:400px;top:569px;width:94px;height:17px;background:#28292a;"></div>
<svg style="left:403px;top:571px;" width="12" height="12" viewBox="0 0 12 12"><circle cx="6" cy="6.500" r="4" fill="#4a2c12"/><path d="M3.600 3.400A4 4 0 1 0 8.400 3.400" stroke="#dc9a62" stroke-width="2.400" fill="none"/><path d="M6 0.800v5.200" stroke="#dc9a62" stroke-width="2.400"/></svg>
<div style="left:418px;top:569px;font-size:11px;color:#f0f0f0;white-space:nowrap;height:16px;line-height:16px;">FX</div>
<svg style="left:481px;top:573px;" width="9" height="9" viewBox="0 0 9 9"><path d="M4.500 0.500v8M0.500 4.500h8" stroke="#c4c4c4" stroke-width="1.600"/></svg>
<div style="left:498px;top:546px;width:12px;height:54px;background:#2c2d2e;border-radius:2px;"></div>
<div style="left:509px;top:551px;font-size:8px;color:#808182;white-space:nowrap;width:15px;height:12px;line-height:12px;text-align:right;letter-spacing:-0.5px;">-6</div>
<div style="left:509px;top:560px;font-size:8px;color:#808182;white-space:nowrap;width:15px;height:12px;line-height:12px;text-align:right;letter-spacing:-0.5px;">-18</div>
<div style="left:509px;top:569px;font-size:8px;color:#808182;white-space:nowrap;width:15px;height:12px;line-height:12px;text-align:right;letter-spacing:-0.5px;">-30</div>
<div style="left:509px;top:577px;font-size:8px;color:#808182;white-space:nowrap;width:15px;height:12px;line-height:12px;text-align:right;letter-spacing:-0.5px;">-42</div>
<div style="left:509px;top:586px;font-size:8px;color:#808182;white-space:nowrap;width:15px;height:12px;line-height:12px;text-align:right;letter-spacing:-0.5px;">-54</div>
<div style="left:233px;top:605px;width:298px;height:58px;background:#716f2e;"></div>
<div style="left:242px;top:608px;font-size:12px;color:#f0f0f0;white-space:nowrap;width:34px;height:18px;line-height:18px;text-align:center;">5</div>
<svg style="left:280px;top:609px;" width="18" height="16" viewBox="0 0 18 16"><path d="M0.500 8.500h2.500l1-2 1.500 5 1.500-10 1.500 13 1.500-9 1.500 6 1.500-5 1.500 3.500 1-1.500h2" stroke="#f0f0f0" stroke-width="1.600" fill="none" stroke-linejoin="round"/></svg>
<div style="left:303px;top:607px;width:92px;height:19px;background:#26282a;border-radius:2px;"></div>
<div class="b" style="left:306px;top:607px;font-size:11px;color:#f4f8fb;white-space:nowrap;height:19px;line-height:19px;">StartMelody</div>
<div style="left:303px;top:630px;width:20px;height:20px;background:#4a4b4d;border-radius:2px;"></div>
<div style="left:303px;top:630px;font-size:11px;color:#d4d4d4;white-space:nowrap;width:20px;height:20px;line-height:20px;text-align:center;">M</div>
<div style="left:327px;top:630px;width:20px;height:20px;background:#3edb6e;border-radius:2px;"></div>
<div style="left:327px;top:630px;font-size:11px;color:#0f3a1c;white-space:nowrap;width:20px;height:20px;line-height:20px;text-align:center;">S</div>
<div style="left:351px;top:630px;width:20px;height:20px;background:#4a4b4d;border-radius:2px;"></div>
<svg style="left:351px;top:630px;" width="20" height="20" viewBox="0 0 20 20"><circle cx="10" cy="10" r="4.600" fill="#ee3340"/></svg>
<div style="left:375px;top:630px;width:20px;height:20px;background:#4a4b4d;border-radius:2px;"></div>
<svg style="left:375px;top:630px;" width="20" height="20" viewBox="0 0 20 20"><circle cx="5" cy="10" r="1.700" fill="#dcdcdc"/><path d="M8.300 7q2 3 0 6M11 5.500q3 4.500 0 9M13.700 4q4 6 0 12" stroke="#dcdcdc" stroke-width="1.200" fill="none"/></svg>
<div style="left:243px;top:641px;width:20px;height:20px;background:#9a7048;border-radius:2px;"></div>
<svg style="left:243px;top:641px;" width="20" height="20" viewBox="0 0 20 20"><path d="M5 6.500h8M3.500 10h8M7 13.500h8" stroke="#4a2f18" stroke-width="1.800"/></svg>
<div style="left:267px;top:641px;width:20px;height:20px;background:#4a4b4d;border-radius:2px;"></div>
<svg style="left:267px;top:641px;" width="20" height="20" viewBox="0 0 20 20"><path d="M4 14l4-8 4 8 4-8" stroke="#f0f0f0" stroke-width="1.500" fill="none"/><circle cx="4" cy="14" r="1.500" fill="#f0f0f0"/><circle cx="8" cy="6" r="1.500" fill="#f0f0f0"/><circle cx="12" cy="14" r="1.500" fill="#f0f0f0"/><circle cx="16" cy="6" r="1.500" fill="#f0f0f0"/></svg>
<svg style="left:484px;top:610px;" width="9" height="11" viewBox="0 0 9 11"><path d="M0.500 5h8L4.500 0.500zM0.500 10.500h8L4.500 6z" fill="#bdbdbd"/></svg>
<div style="left:400px;top:630px;width:94px;height:31px;background:#6a692c;"></div>
<div style="left:400px;top:630px;width:94px;height:17px;background:#636229;"></div>
<svg style="left:403px;top:632px;" width="12" height="12" viewBox="0 0 12 12"><circle cx="6" cy="6.500" r="4" fill="#4a2c12"/><path d="M3.600 3.400A4 4 0 1 0 8.400 3.400" stroke="#dc9a62" stroke-width="2.400" fill="none"/><path d="M6 0.800v5.200" stroke="#dc9a62" stroke-width="2.400"/></svg>
<div style="left:418px;top:630px;font-size:11px;color:#f0f0f0;white-space:nowrap;height:16px;line-height:16px;">FX</div>
<svg style="left:481px;top:634px;" width="9" height="9" viewBox="0 0 9 9"><path d="M4.500 0.500v8M0.500 4.500h8" stroke="#c4c4c4" stroke-width="1.600"/></svg>
<div style="left:498px;top:607px;width:12px;height:54px;background:#2c2d2e;border-radius:2px;"></div>
<div style="left:509px;top:612px;font-size:8px;color:#808182;white-space:nowrap;width:15px;height:12px;line-height:12px;text-align:right;letter-spacing:-0.5px;">-6</div>
<div style="left:509px;top:621px;font-size:8px;color:#808182;white-space:nowrap;width:15px;height:12px;line-height:12px;text-align:right;letter-spacing:-0.5px;">-18</div>
<div style="left:509px;top:630px;font-size:8px;color:#808182;white-space:nowrap;width:15px;height:12px;line-height:12px;text-align:right;letter-spacing:-0.5px;">-30</div>
<div style="left:509px;top:638px;font-size:8px;color:#808182;white-space:nowrap;width:15px;height:12px;line-height:12px;text-align:right;letter-spacing:-0.5px;">-42</div>
<div style="left:509px;top:647px;font-size:8px;color:#808182;white-space:nowrap;width:15px;height:12px;line-height:12px;text-align:right;letter-spacing:-0.5px;">-54</div>
<div style="left:233px;top:605px;width:8px;height:58px;background:#f2e51c;"></div>
<div style="left:233px;top:666px;width:298px;height:58px;background:#2f3031;"></div>
<div style="left:242px;top:669px;font-size:12px;color:#f0f0f0;white-space:nowrap;width:34px;height:18px;line-height:18px;text-align:center;">6</div>
<svg style="left:280px;top:670px;" width="18" height="16" viewBox="0 0 18 16"><path d="M0.500 8.500h2.500l1-2 1.500 5 1.500-10 1.500 13 1.500-9 1.500 6 1.500-5 1.500 3.500 1-1.500h2" stroke="#f0f0f0" stroke-width="1.600" fill="none" stroke-linejoin="round"/></svg>
<div style="left:303px;top:668px;width:92px;height:19px;background:#26282a;border-radius:2px;"></div>
<div class="b" style="left:306px;top:668px;font-size:11px;color:#f4f8fb;white-space:nowrap;height:19px;line-height:19px;">Дорожка 6</div>
<div style="left:303px;top:691px;width:20px;height:20px;background:#e2c04a;border-radius:2px;"></div>
<div style="left:303px;top:691px;font-size:11px;color:#2a2208;white-space:nowrap;width:20px;height:20px;line-height:20px;text-align:center;">M</div>
<div style="left:327px;top:691px;width:20px;height:20px;background:#4a4b4d;border-radius:2px;"></div>
<div style="left:327px;top:691px;font-size:11px;color:#d4d4d4;white-space:nowrap;width:20px;height:20px;line-height:20px;text-align:center;">S</div>
<div style="left:351px;top:691px;width:20px;height:20px;background:#4a4b4d;border-radius:2px;"></div>
<svg style="left:351px;top:691px;" width="20" height="20" viewBox="0 0 20 20"><circle cx="10" cy="10" r="4.600" fill="#ee3340"/></svg>
<div style="left:375px;top:691px;width:20px;height:20px;background:#4a4b4d;border-radius:2px;"></div>
<svg style="left:375px;top:691px;" width="20" height="20" viewBox="0 0 20 20"><circle cx="5" cy="10" r="1.700" fill="#dcdcdc"/><path d="M8.300 7q2 3 0 6M11 5.500q3 4.500 0 9M13.700 4q4 6 0 12" stroke="#dcdcdc" stroke-width="1.200" fill="none"/></svg>
<div style="left:243px;top:702px;width:20px;height:20px;background:#9a7048;border-radius:2px;"></div>
<svg style="left:243px;top:702px;" width="20" height="20" viewBox="0 0 20 20"><path d="M5 6.500h8M3.500 10h8M7 13.500h8" stroke="#4a2f18" stroke-width="1.800"/></svg>
<div style="left:267px;top:702px;width:20px;height:20px;background:#4a4b4d;border-radius:2px;"></div>
<svg style="left:267px;top:702px;" width="20" height="20" viewBox="0 0 20 20"><path d="M4 14l4-8 4 8 4-8" stroke="#f0f0f0" stroke-width="1.500" fill="none"/><circle cx="4" cy="14" r="1.500" fill="#f0f0f0"/><circle cx="8" cy="6" r="1.500" fill="#f0f0f0"/><circle cx="12" cy="14" r="1.500" fill="#f0f0f0"/><circle cx="16" cy="6" r="1.500" fill="#f0f0f0"/></svg>
<svg style="left:484px;top:671px;" width="9" height="11" viewBox="0 0 9 11"><path d="M0.500 5h8L4.500 0.500zM0.500 10.500h8L4.500 6z" fill="#bdbdbd"/></svg>
<div style="left:400px;top:691px;width:94px;height:31px;background:#2b2c2d;"></div>
<div style="left:400px;top:691px;width:94px;height:17px;background:#28292a;"></div>
<svg style="left:403px;top:693px;" width="12" height="12" viewBox="0 0 12 12"><circle cx="6" cy="6.500" r="4" fill="#4a2c12"/><path d="M3.600 3.400A4 4 0 1 0 8.400 3.400" stroke="#dc9a62" stroke-width="2.400" fill="none"/><path d="M6 0.800v5.200" stroke="#dc9a62" stroke-width="2.400"/></svg>
<div style="left:418px;top:691px;font-size:11px;color:#f0f0f0;white-space:nowrap;height:16px;line-height:16px;">FX</div>
<svg style="left:481px;top:695px;" width="9" height="9" viewBox="0 0 9 9"><path d="M4.500 0.500v8M0.500 4.500h8" stroke="#c4c4c4" stroke-width="1.600"/></svg>
<div style="left:498px;top:668px;width:12px;height:54px;background:#2c2d2e;border-radius:2px;"></div>
<div style="left:509px;top:673px;font-size:8px;color:#808182;white-space:nowrap;width:15px;height:12px;line-height:12px;text-align:right;letter-spacing:-0.5px;">-6</div>
<div style="left:509px;top:682px;font-size:8px;color:#808182;white-space:nowrap;width:15px;height:12px;line-height:12px;text-align:right;letter-spacing:-0.5px;">-18</div>
<div style="left:509px;top:691px;font-size:8px;color:#808182;white-space:nowrap;width:15px;height:12px;line-height:12px;text-align:right;letter-spacing:-0.5px;">-30</div>
<div style="left:509px;top:699px;font-size:8px;color:#808182;white-space:nowrap;width:15px;height:12px;line-height:12px;text-align:right;letter-spacing:-0.5px;">-42</div>
<div style="left:509px;top:708px;font-size:8px;color:#808182;white-space:nowrap;width:15px;height:12px;line-height:12px;text-align:right;letter-spacing:-0.5px;">-54</div>
<div style="left:233px;top:727px;width:298px;height:58px;background:#2f3031;"></div>
<div style="left:242px;top:730px;font-size:12px;color:#f0f0f0;white-space:nowrap;width:34px;height:18px;line-height:18px;text-align:center;">7</div>
<svg style="left:280px;top:731px;" width="18" height="16" viewBox="0 0 18 16"><path d="M0.500 8.500h2.500l1-2 1.500 5 1.500-10 1.500 13 1.500-9 1.500 6 1.500-5 1.500 3.500 1-1.500h2" stroke="#f0f0f0" stroke-width="1.600" fill="none" stroke-linejoin="round"/></svg>
<div style="left:303px;top:729px;width:92px;height:19px;background:#26282a;border-radius:2px;"></div>
<div class="b" style="left:306px;top:729px;font-size:11px;color:#f4f8fb;white-space:nowrap;height:19px;line-height:19px;">Дорожка 7</div>
<div style="left:303px;top:752px;width:20px;height:20px;background:#e2c04a;border-radius:2px;"></div>
<div style="left:303px;top:752px;font-size:11px;color:#2a2208;white-space:nowrap;width:20px;height:20px;line-height:20px;text-align:center;">M</div>
<div style="left:327px;top:752px;width:20px;height:20px;background:#4a4b4d;border-radius:2px;"></div>
<div style="left:327px;top:752px;font-size:11px;color:#d4d4d4;white-space:nowrap;width:20px;height:20px;line-height:20px;text-align:center;">S</div>
<div style="left:351px;top:752px;width:20px;height:20px;background:#4a4b4d;border-radius:2px;"></div>
<svg style="left:351px;top:752px;" width="20" height="20" viewBox="0 0 20 20"><circle cx="10" cy="10" r="4.600" fill="#ee3340"/></svg>
<div style="left:375px;top:752px;width:20px;height:20px;background:#4a4b4d;border-radius:2px;"></div>
<svg style="left:375px;top:752px;" width="20" height="20" viewBox="0 0 20 20"><circle cx="5" cy="10" r="1.700" fill="#dcdcdc"/><path d="M8.300 7q2 3 0 6M11 5.500q3 4.500 0 9M13.700 4q4 6 0 12" stroke="#dcdcdc" stroke-width="1.200" fill="none"/></svg>
<div style="left:243px;top:763px;width:20px;height:20px;background:#9a7048;border-radius:2px;"></div>
<svg style="left:243px;top:763px;" width="20" height="20" viewBox="0 0 20 20"><path d="M5 6.500h8M3.500 10h8M7 13.500h8" stroke="#4a2f18" stroke-width="1.800"/></svg>
<div style="left:267px;top:763px;width:20px;height:20px;background:#4a4b4d;border-radius:2px;"></div>
<svg style="left:267px;top:763px;" width="20" height="20" viewBox="0 0 20 20"><path d="M4 14l4-8 4 8 4-8" stroke="#f0f0f0" stroke-width="1.500" fill="none"/><circle cx="4" cy="14" r="1.500" fill="#f0f0f0"/><circle cx="8" cy="6" r="1.500" fill="#f0f0f0"/><circle cx="12" cy="14" r="1.500" fill="#f0f0f0"/><circle cx="16" cy="6" r="1.500" fill="#f0f0f0"/></svg>
<svg style="left:484px;top:732px;" width="9" height="11" viewBox="0 0 9 11"><path d="M0.500 5h8L4.500 0.500zM0.500 10.500h8L4.500 6z" fill="#bdbdbd"/></svg>
<div style="left:400px;top:752px;width:94px;height:31px;background:#2b2c2d;"></div>
<div style="left:400px;top:752px;width:94px;height:17px;background:#28292a;"></div>
<svg style="left:403px;top:754px;" width="12" height="12" viewBox="0 0 12 12"><circle cx="6" cy="6.500" r="4" fill="#4a2c12"/><path d="M3.600 3.400A4 4 0 1 0 8.400 3.400" stroke="#dc9a62" stroke-width="2.400" fill="none"/><path d="M6 0.800v5.200" stroke="#dc9a62" stroke-width="2.400"/></svg>
<div style="left:418px;top:752px;font-size:11px;color:#f0f0f0;white-space:nowrap;height:16px;line-height:16px;">FX</div>
<svg style="left:481px;top:756px;" width="9" height="9" viewBox="0 0 9 9"><path d="M4.500 0.500v8M0.500 4.500h8" stroke="#c4c4c4" stroke-width="1.600"/></svg>
<div style="left:498px;top:729px;width:12px;height:54px;background:#2c2d2e;border-radius:2px;"></div>
<div style="left:509px;top:734px;font-size:8px;color:#808182;white-space:nowrap;width:15px;height:12px;line-height:12px;text-align:right;letter-spacing:-0.5px;">-6</div>
<div style="left:509px;top:743px;font-size:8px;color:#808182;white-space:nowrap;width:15px;height:12px;line-height:12px;text-align:right;letter-spacing:-0.5px;">-18</div>
<div style="left:509px;top:752px;font-size:8px;color:#808182;white-space:nowrap;width:15px;height:12px;line-height:12px;text-align:right;letter-spacing:-0.5px;">-30</div>
<div style="left:509px;top:760px;font-size:8px;color:#808182;white-space:nowrap;width:15px;height:12px;line-height:12px;text-align:right;letter-spacing:-0.5px;">-42</div>
<div style="left:509px;top:769px;font-size:8px;color:#808182;white-space:nowrap;width:15px;height:12px;line-height:12px;text-align:right;letter-spacing:-0.5px;">-54</div>
<div style="left:233px;top:788px;width:298px;height:58px;background:#5b3544;"></div>
<div style="left:242px;top:791px;font-size:12px;color:#f0f0f0;white-space:nowrap;width:34px;height:18px;line-height:18px;text-align:center;">8</div>
<svg style="left:280px;top:792px;" width="18" height="16" viewBox="0 0 18 16"><path d="M0.500 8.500h2.500l1-2 1.500 5 1.500-10 1.500 13 1.500-9 1.500 6 1.500-5 1.500 3.500 1-1.500h2" stroke="#f0f0f0" stroke-width="1.600" fill="none" stroke-linejoin="round"/></svg>
<div style="left:303px;top:790px;width:92px;height:19px;background:#26282a;border-radius:2px;"></div>
<div class="b" style="left:306px;top:790px;font-size:11px;color:#f4f8fb;white-space:nowrap;height:19px;line-height:19px;">StartRythm</div>
<div style="left:303px;top:813px;width:20px;height:20px;background:#4a4b4d;border-radius:2px;"></div>
<div style="left:303px;top:813px;font-size:11px;color:#d4d4d4;white-space:nowrap;width:20px;height:20px;line-height:20px;text-align:center;">M</div>
<div style="left:327px;top:813px;width:20px;height:20px;background:#3edb6e;border-radius:2px;"></div>
<div style="left:327px;top:813px;font-size:11px;color:#0f3a1c;white-space:nowrap;width:20px;height:20px;line-height:20px;text-align:center;">S</div>
<div style="left:351px;top:813px;width:20px;height:20px;background:#4a4b4d;border-radius:2px;"></div>
<svg style="left:351px;top:813px;" width="20" height="20" viewBox="0 0 20 20"><circle cx="10" cy="10" r="4.600" fill="#ee3340"/></svg>
<div style="left:375px;top:813px;width:20px;height:20px;background:#4a4b4d;border-radius:2px;"></div>
<svg style="left:375px;top:813px;" width="20" height="20" viewBox="0 0 20 20"><circle cx="5" cy="10" r="1.700" fill="#dcdcdc"/><path d="M8.300 7q2 3 0 6M11 5.500q3 4.500 0 9M13.700 4q4 6 0 12" stroke="#dcdcdc" stroke-width="1.200" fill="none"/></svg>
<div style="left:243px;top:824px;width:20px;height:20px;background:#9a7048;border-radius:2px;"></div>
<svg style="left:243px;top:824px;" width="20" height="20" viewBox="0 0 20 20"><path d="M5 6.500h8M3.500 10h8M7 13.500h8" stroke="#4a2f18" stroke-width="1.800"/></svg>
<div style="left:267px;top:824px;width:20px;height:20px;background:#4a4b4d;border-radius:2px;"></div>
<svg style="left:267px;top:824px;" width="20" height="20" viewBox="0 0 20 20"><path d="M4 14l4-8 4 8 4-8" stroke="#f0f0f0" stroke-width="1.500" fill="none"/><circle cx="4" cy="14" r="1.500" fill="#f0f0f0"/><circle cx="8" cy="6" r="1.500" fill="#f0f0f0"/><circle cx="12" cy="14" r="1.500" fill="#f0f0f0"/><circle cx="16" cy="6" r="1.500" fill="#f0f0f0"/></svg>
<svg style="left:484px;top:793px;" width="9" height="11" viewBox="0 0 9 11"><path d="M0.500 5h8L4.500 0.500zM0.500 10.500h8L4.500 6z" fill="#bdbdbd"/></svg>
<div style="left:440px;top:792px;font-size:10px;color:#1c1c1c;white-space:nowrap;width:40px;height:14px;line-height:14px;text-align:right;">-120.3</div>
<div style="left:400px;top:813px;width:94px;height:31px;background:#52303e;"></div>
<div style="left:400px;top:813px;width:94px;height:17px;background:#4b2b38;"></div>
<svg style="left:403px;top:815px;" width="12" height="12" viewBox="0 0 12 12"><circle cx="6" cy="6.500" r="4" fill="#4a2c12"/><path d="M3.600 3.400A4 4 0 1 0 8.400 3.400" stroke="#dc9a62" stroke-width="2.400" fill="none"/><path d="M6 0.800v5.200" stroke="#dc9a62" stroke-width="2.400"/></svg>
<div style="left:418px;top:813px;font-size:11px;color:#f0f0f0;white-space:nowrap;height:16px;line-height:16px;">FX</div>
<svg style="left:481px;top:817px;" width="9" height="9" viewBox="0 0 9 9"><path d="M4.500 0.500v8M0.500 4.500h8" stroke="#c4c4c4" stroke-width="1.600"/></svg>
<div style="left:498px;top:790px;width:12px;height:54px;background:#2c2d2e;border-radius:2px;"></div>
<div style="left:509px;top:795px;font-size:8px;color:#808182;white-space:nowrap;width:15px;height:12px;line-height:12px;text-align:right;letter-spacing:-0.5px;">-6</div>
<div style="left:509px;top:804px;font-size:8px;color:#808182;white-space:nowrap;width:15px;height:12px;line-height:12px;text-align:right;letter-spacing:-0.5px;">-18</div>
<div style="left:509px;top:813px;font-size:8px;color:#808182;white-space:nowrap;width:15px;height:12px;line-height:12px;text-align:right;letter-spacing:-0.5px;">-30</div>
<div style="left:509px;top:821px;font-size:8px;color:#808182;white-space:nowrap;width:15px;height:12px;line-height:12px;text-align:right;letter-spacing:-0.5px;">-42</div>
<div style="left:509px;top:830px;font-size:8px;color:#808182;white-space:nowrap;width:15px;height:12px;line-height:12px;text-align:right;letter-spacing:-0.5px;">-54</div>
<div style="left:233px;top:788px;width:7px;height:58px;background:#b94a5e;"></div>
<div style="left:233px;top:849px;width:298px;height:58px;background:#2f3031;"></div>
<div style="left:242px;top:852px;font-size:12px;color:#f0f0f0;white-space:nowrap;width:34px;height:18px;line-height:18px;text-align:center;">9</div>
<svg style="left:280px;top:853px;" width="18" height="16" viewBox="0 0 18 16"><path d="M0.500 8.500h2.500l1-2 1.500 5 1.500-10 1.500 13 1.500-9 1.500 6 1.500-5 1.500 3.500 1-1.500h2" stroke="#f0f0f0" stroke-width="1.600" fill="none" stroke-linejoin="round"/></svg>
<div style="left:303px;top:851px;width:92px;height:19px;background:#26282a;border-radius:2px;"></div>
<div class="b" style="left:306px;top:851px;font-size:11px;color:#f4f8fb;white-space:nowrap;height:19px;line-height:19px;">Дорожка 9</div>
<div style="left:303px;top:874px;width:20px;height:20px;background:#4a4b4d;border-radius:2px;"></div>
<div style="left:303px;top:874px;font-size:11px;color:#d4d4d4;white-space:nowrap;width:20px;height:20px;line-height:20px;text-align:center;">M</div>
<div style="left:327px;top:874px;width:20px;height:20px;background:#3edb6e;border-radius:2px;"></div>
<div style="left:327px;top:874px;font-size:11px;color:#0f3a1c;white-space:nowrap;width:20px;height:20px;line-height:20px;text-align:center;">S</div>
<div style="left:351px;top:874px;width:20px;height:20px;background:#4a4b4d;border-radius:2px;"></div>
<svg style="left:351px;top:874px;" width="20" height="20" viewBox="0 0 20 20"><circle cx="10" cy="10" r="4.600" fill="#ee3340"/></svg>
<div style="left:375px;top:874px;width:20px;height:20px;background:#4a4b4d;border-radius:2px;"></div>
<svg style="left:375px;top:874px;" width="20" height="20" viewBox="0 0 20 20"><circle cx="5" cy="10" r="1.700" fill="#dcdcdc"/><path d="M8.300 7q2 3 0 6M11 5.500q3 4.500 0 9M13.700 4q4 6 0 12" stroke="#dcdcdc" stroke-width="1.200" fill="none"/></svg>
<div style="left:243px;top:885px;width:20px;height:20px;background:#9a7048;border-radius:2px;"></div>
<svg style="left:243px;top:885px;" width="20" height="20" viewBox="0 0 20 20"><path d="M5 6.500h8M3.500 10h8M7 13.500h8" stroke="#4a2f18" stroke-width="1.800"/></svg>
<div style="left:267px;top:885px;width:20px;height:20px;background:#4a4b4d;border-radius:2px;"></div>
<svg style="left:267px;top:885px;" width="20" height="20" viewBox="0 0 20 20"><path d="M4 14l4-8 4 8 4-8" stroke="#f0f0f0" stroke-width="1.500" fill="none"/><circle cx="4" cy="14" r="1.500" fill="#f0f0f0"/><circle cx="8" cy="6" r="1.500" fill="#f0f0f0"/><circle cx="12" cy="14" r="1.500" fill="#f0f0f0"/><circle cx="16" cy="6" r="1.500" fill="#f0f0f0"/></svg>
<svg style="left:484px;top:854px;" width="9" height="11" viewBox="0 0 9 11"><path d="M0.500 5h8L4.500 0.500zM0.500 10.500h8L4.500 6z" fill="#bdbdbd"/></svg>
<div style="left:440px;top:853px;font-size:10px;color:#1c1c1c;white-space:nowrap;width:40px;height:14px;line-height:14px;text-align:right;">-129.4</div>
<div style="left:400px;top:874px;width:94px;height:31px;background:#2b2c2d;"></div>
<div style="left:400px;top:874px;width:94px;height:17px;background:#28292a;"></div>
<svg style="left:403px;top:876px;" width="12" height="12" viewBox="0 0 12 12"><circle cx="6" cy="6.500" r="4" fill="#4a2c12"/><path d="M3.600 3.400A4 4 0 1 0 8.400 3.400" stroke="#dc9a62" stroke-width="2.400" fill="none"/><path d="M6 0.800v5.200" stroke="#dc9a62" stroke-width="2.400"/></svg>
<div style="left:418px;top:874px;font-size:11px;color:#f0f0f0;white-space:nowrap;height:16px;line-height:16px;">FX</div>
<svg style="left:481px;top:878px;" width="9" height="9" viewBox="0 0 9 9"><path d="M4.500 0.500v8M0.500 4.500h8" stroke="#c4c4c4" stroke-width="1.600"/></svg>
<div style="left:498px;top:851px;width:12px;height:54px;background:#2c2d2e;border-radius:2px;"></div>
<div style="left:509px;top:856px;font-size:8px;color:#808182;white-space:nowrap;width:15px;height:12px;line-height:12px;text-align:right;letter-spacing:-0.5px;">-6</div>
<div style="left:509px;top:865px;font-size:8px;color:#808182;white-space:nowrap;width:15px;height:12px;line-height:12px;text-align:right;letter-spacing:-0.5px;">-18</div>
<div style="left:509px;top:874px;font-size:8px;color:#808182;white-space:nowrap;width:15px;height:12px;line-height:12px;text-align:right;letter-spacing:-0.5px;">-30</div>
<div style="left:509px;top:882px;font-size:8px;color:#808182;white-space:nowrap;width:15px;height:12px;line-height:12px;text-align:right;letter-spacing:-0.5px;">-42</div>
<div style="left:509px;top:891px;font-size:8px;color:#808182;white-space:nowrap;width:15px;height:12px;line-height:12px;text-align:right;letter-spacing:-0.5px;">-54</div>
<div style="left:233px;top:910px;width:298px;height:15px;background:#2f3031;"></div>
<div style="left:242px;top:913px;font-size:12px;color:#f0f0f0;white-space:nowrap;width:34px;height:18px;line-height:18px;text-align:center;">10</div>
<svg style="left:280px;top:914px;" width="18" height="16" viewBox="0 0 18 16"><path d="M0.500 8.500h2.500l1-2 1.500 5 1.500-10 1.500 13 1.500-9 1.500 6 1.500-5 1.500 3.500 1-1.500h2" stroke="#f0f0f0" stroke-width="1.600" fill="none" stroke-linejoin="round"/></svg>
<div style="left:303px;top:912px;width:92px;height:19px;background:#26282a;border-radius:2px;"></div>
<div class="b" style="left:306px;top:912px;font-size:11px;color:#f4f8fb;white-space:nowrap;height:19px;line-height:19px;">Дорожка 10</div>
<svg style="left:484px;top:915px;" width="9" height="11" viewBox="0 0 9 11"><path d="M0.500 5h8L4.500 0.500zM0.500 10.500h8L4.500 6z" fill="#bdbdbd"/></svg>
<div style="left:499px;top:912px;width:10px;height:13px;background:#2c2d2e;"></div>
<div style="left:509px;top:917px;font-size:8px;color:#808182;white-space:nowrap;width:15px;height:12px;line-height:12px;text-align:right;letter-spacing:-0.5px;">-6</div>
<div style="left:229px;top:925px;width:1199px;height:2px;background:#111;"></div>
<div style="left:228px;top:927px;width:1202px;height:24px;background:#4b4c4d;"></div>
<div style="left:512px;top:931px;width:22px;height:22px;background:#2c2d2e;border-radius:2px;"></div>
<svg style="left:512px;top:931px;" width="22" height="22" viewBox="0 0 22 22"><path d="M6 12h10L11 6zM6 14h10v2.500H6z" fill="#f2f2f2"/></svg>
<svg style="left:561px;top:936px;" width="8" height="9" viewBox="0 0 8 9"><path d="M7.500 0.500v8L0.500 4.500z" fill="#1f1f1f"/></svg>
<svg style="left:1347px;top:936px;" width="8" height="9" viewBox="0 0 8 9"><path d="M0.500 0.500v8l7-4z" fill="#1f1f1f"/></svg>
<svg style="left:1365px;top:933px;" width="14" height="14" viewBox="0 0 14 14"><circle cx="5" cy="5" r="3.800" stroke="#f0f0f0" stroke-width="1.300" fill="none"/><path d="M8 8l4.500 4.500" stroke="#f0f0f0" stroke-width="2"/><path d="M3 5h4" stroke="#f0f0f0" stroke-width="1.200"/></svg>
<div style="left:1381px;top:931px;width:7px;height:17px;background:#3a3b3c;"></div>
<div style="left:1382px;top:944px;width:5px;height:3px;background:#d8d8d8;"></div>
<svg style="left:1393px;top:933px;" width="14" height="14" viewBox="0 0 14 14"><circle cx="5" cy="5" r="3.800" stroke="#f0f0f0" stroke-width="1.300" fill="none"/><path d="M8 8l4.500 4.500" stroke="#f0f0f0" stroke-width="2"/><path d="M3 5h4" stroke="#f0f0f0" stroke-width="1.200"/><path d="M5 3v4" stroke="#f0f0f0" stroke-width="1.200"/></svg>
<div style="left:1107px;top:131px;width:1px;height:799px;background:#f4f4f4;"></div>
<div style="left:1434px;top:105px;width:243px;height:849px;background:#4b4c4d;border-radius:5px;"></div>
<div style="left:1436px;top:106px;width:239px;height:20px;background:#1c1c1d;border-radius:4px 4px 0 0;"></div>
<div style="left:1436px;top:106px;width:37px;height:20px;background:linear-gradient(#454647,#3a3b3c);border-radius:4px 0 0 0;"></div>
<svg style="left:1442px;top:110px;" width="16" height="13" viewBox="0 0 16 13"><path d="M0.500 2q0-1.500 1.500-1.500h4l1.500 2h6.500q1.500 0 1.500 1.500v7q0 1.500-1.500 1.500H2q-1.500 0-1.500-1.500z" fill="#6b6c6d"/></svg>
<div style="left:1475px;top:106px;width:81px;height:20px;background:linear-gradient(#636465,#505152);"></div>
<svg style="left:1478px;top:108px;" width="16" height="16" viewBox="0 0 16 16"><path d="M2 14q-1-3 3-5l6-5q2-2 3.500-.500t-.500 3.500l-5 6q-2 4-5 3" stroke="#cfcfcf" stroke-width="1.400" fill="none"/><path d="M5.500 10.500l5-5" stroke="#cfcfcf" stroke-width="1.200"/><path d="M1 15l2.500-2.500" stroke="#cfcfcf" stroke-width="1.300"/></svg>
<div style="left:1496px;top:107px;font-size:12px;color:#f2f2f2;white-space:nowrap;height:18px;line-height:18px;">PlugIns</div>
<svg style="left:1542px;top:113px;" width="9" height="8" viewBox="0 0 9 8"><path d="M0.500 0.500h8L4.500 7.500z" fill="#7c7d7e"/></svg>
<div style="left:1558px;top:106px;width:37px;height:20px;background:linear-gradient(#454647,#3a3b3c);"></div>
<svg style="left:1561px;top:109px;" width="16" height="15" viewBox="0 0 16 15"><rect x="1" y="1.500" width="10" height="12" stroke="#8a8b8c" stroke-width="1.400" fill="none"/><path d="M3 5h6M3 8h5M3 11h4" stroke="#8a8b8c" stroke-width="1.200"/><path d="M8 11l5.500-8 1.500 1-5.500 8-2 .800z" fill="#8a8b8c"/></svg>
<div style="left:1596px;top:106px;width:79px;height:20px;background:linear-gradient(#5b5c5d,#48494a);border-radius:0 4px 0 0;"></div>
<svg style="left:1629px;top:109px;" width="12" height="12" viewBox="0 0 12 12"><rect x="1" y="1" width="6" height="5" stroke="#e8e8e8" stroke-width="1.300" fill="none"/><rect x="4.500" y="5" width="6.500" height="5.500" stroke="#e8e8e8" stroke-width="1.300" fill="#515253"/></svg>
<svg style="left:1645px;top:111px;" width="9" height="8" viewBox="0 0 9 8"><path d="M0.500 0.500h8L4.500 7.500z" fill="#e8e8e8"/></svg>
<svg style="left:1658px;top:110px;" width="10" height="10" viewBox="0 0 10 10"><path d="M0.500 1v8L5 5zM5.500 1v8L10 5z" fill="#e8e8e8"/></svg>
<div style="left:1440px;top:130px;width:73px;height:20px;background:linear-gradient(#ec9f57,#e08f46);border-radius:2px;"></div>
<div style="left:1440px;top:130px;font-size:11px;color:#2a1c0c;white-space:nowrap;width:73px;height:20px;line-height:20px;text-align:center;">Audio FX</div>
<div style="left:1518px;top:130px;width:25px;height:20px;background:#2f3031;border-radius:2px;"></div>
<div style="left:1549px;top:130px;width:25px;height:20px;background:#2f3031;border-radius:2px;"></div>
<div style="left:1580px;top:130px;width:25px;height:20px;background:#2f3031;border-radius:2px;"></div>
<svg style="left:1522px;top:132px;" width="18" height="16" viewBox="0 0 18 16"><circle cx="6.500" cy="6.500" r="5.500" fill="#ededed"/><circle cx="4" cy="7" r="1" fill="#2f3031"/><circle cx="9" cy="7" r="1" fill="#2f3031"/><circle cx="5" cy="4" r="1" fill="#2f3031"/><circle cx="8" cy="4" r="1" fill="#2f3031"/><rect x="5.500" y="10" width="2" height="2.500" fill="#2f3031"/><path d="M9.500 10h3M9.500 10v5M9.500 12.500h2.500M13.500 10l3.500 5M17 10l-3.500 5" stroke="#ededed" stroke-width="1.200" fill="none"/></svg>
<svg style="left:1552px;top:133px;" width="18" height="14" viewBox="0 0 18 14"><rect x="0.700" y="0.700" width="16.600" height="12.600" fill="none" stroke="#ededed" stroke-width="1.400"/><rect x="2" y="9" width="14" height="3.500" fill="#ededed"/><path d="M3 2v7" stroke="#ededed" stroke-width="1.500"/><path d="M6 2v7" stroke="#ededed" stroke-width="1.500"/><path d="M9 2v7" stroke="#ededed" stroke-width="1.500"/><path d="M12 2v7" stroke="#ededed" stroke-width="1.500"/><path d="M15 2v7" stroke="#ededed" stroke-width="1.500"/></svg>
<svg style="left:1584px;top:133px;" width="17" height="14" viewBox="0 0 17 14"><path d="M1 2.500q7 0 8 4.500t7 4.500M1 11.500q7 0 8-4.500t7-4.500M1 7h15" stroke="#ededed" stroke-width="1.600" fill="none"/><path d="M1 4.800q6 0 8 2.200t7 2.200M1 9.200q6 0 8-2.200t7-2.200" stroke="#ededed" stroke-width="1" fill="none"/></svg>
<div style="left:1440px;top:155px;width:204px;height:22px;background:#2b2c2d;border-radius:4px;"></div>
<svg style="left:1627px;top:160px;" width="13" height="13" viewBox="0 0 13 13"><circle cx="5" cy="5" r="3.600" stroke="#8a8b8c" stroke-width="1.600" fill="none"/><path d="M7.800 7.800l4 4" stroke="#8a8b8c" stroke-width="2"/></svg>
<div style="left:1649px;top:156px;width:25px;height:20px;background:#2f3031;border-radius:2px;"></div>
<svg style="left:1655px;top:160px;" width="13" height="12" viewBox="0 0 13 12"><path d="M1.500 1.500l10 9M11.500 1.500l-10 9" stroke="#e8323c" stroke-width="2.800"/></svg>
<div style="left:1440px;top:183px;width:232px;height:749px;background:#262627;"></div>
<div style="left:1442px;top:185px;width:228px;height:745px;background:#2f2f30;"></div>
<div style="left:1455px;top:194px;width:1px;height:436px;border-left:1px dotted #5a5a5c;"></div>
<div style="left:1451px;top:194px;width:9px;height:9px;background:#f4f4f6;border:1px solid #8f90a8;"></div>
<div style="left:1453px;top:198px;width:5px;height:1px;background:#20203a;"></div>
<div style="left:1455px;top:196px;width:1px;height:5px;background:#20203a;"></div>
<div style="left:1460px;top:198px;width:5px;height:1px;border-top:1px dotted #5a5a5c;"></div>
<svg style="left:1466px;top:190px;" width="17" height="14" viewBox="0 0 17 14"><path d="M0.500 2q0-1.500 1.500-1.500h4.500l1.500 2h6q1.500 0 1.500 1.500v8q0 1.500-1.500 1.500H2q-1.500 0-1.500-1.500z" fill="#a9a9ab"/><path d="M0.500 5q0-1 1-1h13q1 0 1 1v7q0 1.500-1.500 1.500H2q-1.500 0-1.500-1.500z" fill="#c9c9cb"/></svg>
<div style="left:1487px;top:189px;font-size:12px;color:#c9c9c9;white-space:nowrap;height:17px;line-height:17px;letter-spacing:-0.236px;">Analyzer</div>
<div style="left:1451px;top:212px;width:9px;height:9px;background:#f4f4f6;border:1px solid #8f90a8;"></div>
<div style="left:1453px;top:216px;width:5px;height:1px;background:#20203a;"></div>
<div style="left:1455px;top:214px;width:1px;height:5px;background:#20203a;"></div>
<div style="left:1460px;top:216px;width:5px;height:1px;border-top:1px dotted #5a5a5c;"></div>
<svg style="left:1466px;top:208px;" width="17" height="14" viewBox="0 0 17 14"><path d="M0.500 2q0-1.500 1.500-1.500h4.500l1.500 2h6q1.500 0 1.500 1.500v8q0 1.500-1.500 1.500H2q-1.500 0-1.500-1.500z" fill="#a9a9ab"/><path d="M0.500 5q0-1 1-1h13q1 0 1 1v7q0 1.500-1.500 1.500H2q-1.500 0-1.500-1.500z" fill="#c9c9cb"/></svg>
<div style="left:1487px;top:207px;font-size:12px;color:#c9c9c9;white-space:nowrap;height:17px;line-height:17px;letter-spacing:-0.600px;">Bass</div>
<div style="left:1451px;top:230px;width:9px;height:9px;background:#f4f4f6;border:1px solid #8f90a8;"></div>
<div style="left:1453px;top:234px;width:5px;height:1px;background:#20203a;"></div>
<div style="left:1455px;top:232px;width:1px;height:5px;background:#20203a;"></div>
<div style="left:1460px;top:234px;width:5px;height:1px;border-top:1px dotted #5a5a5c;"></div>
<svg style="left:1466px;top:226px;" width="17" height="14" viewBox="0 0 17 14"><path d="M0.500 2q0-1.500 1.500-1.500h4.500l1.500 2h6q1.500 0 1.500 1.500v8q0 1.500-1.500 1.500H2q-1.500 0-1.500-1.500z" fill="#a9a9ab"/><path d="M0.500 5q0-1 1-1h13q1 0 1 1v7q0 1.500-1.500 1.500H2q-1.500 0-1.500-1.500z" fill="#c9c9cb"/></svg>
<div style="left:1487px;top:225px;font-size:12px;color:#c9c9c9;white-space:nowrap;height:17px;line-height:17px;letter-spacing:-0.185px;">Channel Strip</div>
<div style="left:1451px;top:248px;width:9px;height:9px;background:#f4f4f6;border:1px solid #8f90a8;"></div>
<div style="left:1453px;top:252px;width:5px;height:1px;background:#20203a;"></div>
<div style="left:1455px;top:250px;width:1px;height:5px;background:#20203a;"></div>
<div style="left:1460px;top:252px;width:5px;height:1px;border-top:1px dotted #5a5a5c;"></div>
<svg style="left:1466px;top:244px;" width="17" height="14" viewBox="0 0 17 14"><path d="M0.500 2q0-1.500 1.500-1.500h4.500l1.500 2h6q1.500 0 1.500 1.500v8q0 1.500-1.500 1.500H2q-1.500 0-1.500-1.500z" fill="#a9a9ab"/><path d="M0.500 5q0-1 1-1h13q1 0 1 1v7q0 1.500-1.500 1.500H2q-1.500 0-1.500-1.500z" fill="#c9c9cb"/></svg>
<div style="left:1487px;top:243px;font-size:12px;color:#c9c9c9;white-space:nowrap;height:17px;line-height:17px;letter-spacing:-0.358px;">Delay</div>
<div style="left:1451px;top:266px;width:9px;height:9px;background:#f4f4f6;border:1px solid #8f90a8;"></div>
<div style="left:1453px;top:270px;width:5px;height:1px;background:#20203a;"></div>
<div style="left:1455px;top:268px;width:1px;height:5px;background:#20203a;"></div>
<div style="left:1460px;top:270px;width:5px;height:1px;border-top:1px dotted #5a5a5c;"></div>
<svg style="left:1466px;top:262px;" width="17" height="14" viewBox="0 0 17 14"><path d="M0.500 2q0-1.500 1.500-1.500h4.500l1.500 2h6q1.500 0 1.500 1.500v8q0 1.500-1.500 1.500H2q-1.500 0-1.500-1.500z" fill="#a9a9ab"/><path d="M0.500 5q0-1 1-1h13q1 0 1 1v7q0 1.500-1.500 1.500H2q-1.500 0-1.500-1.500z" fill="#c9c9cb"/></svg>
<div style="left:1487px;top:261px;font-size:12px;color:#c9c9c9;white-space:nowrap;height:17px;line-height:17px;letter-spacing:0.091px;">Distortion</div>
<div style="left:1451px;top:284px;width:9px;height:9px;background:#f4f4f6;border:1px solid #8f90a8;"></div>
<div style="left:1453px;top:288px;width:5px;height:1px;background:#20203a;"></div>
<div style="left:1455px;top:286px;width:1px;height:5px;background:#20203a;"></div>
<div style="left:1460px;top:288px;width:5px;height:1px;border-top:1px dotted #5a5a5c;"></div>
<svg style="left:1466px;top:280px;" width="17" height="14" viewBox="0 0 17 14"><path d="M0.500 2q0-1.500 1.500-1.500h4.500l1.500 2h6q1.500 0 1.500 1.500v8q0 1.500-1.500 1.500H2q-1.500 0-1.500-1.500z" fill="#a9a9ab"/><path d="M0.500 5q0-1 1-1h13q1 0 1 1v7q0 1.500-1.500 1.500H2q-1.500 0-1.500-1.500z" fill="#c9c9cb"/></svg>
<div style="left:1487px;top:279px;font-size:12px;color:#c9c9c9;white-space:nowrap;height:17px;line-height:17px;letter-spacing:-0.169px;">Drums</div>
<div style="left:1451px;top:302px;width:9px;height:9px;background:#f4f4f6;border:1px solid #8f90a8;"></div>
<div style="left:1453px;top:306px;width:5px;height:1px;background:#20203a;"></div>
<div style="left:1455px;top:304px;width:1px;height:5px;background:#20203a;"></div>
<div style="left:1460px;top:306px;width:5px;height:1px;border-top:1px dotted #5a5a5c;"></div>
<svg style="left:1466px;top:298px;" width="17" height="14" viewBox="0 0 17 14"><path d="M0.500 2q0-1.500 1.500-1.500h4.500l1.500 2h6q1.500 0 1.500 1.500v8q0 1.500-1.500 1.500H2q-1.500 0-1.500-1.500z" fill="#a9a9ab"/><path d="M0.500 5q0-1 1-1h13q1 0 1 1v7q0 1.500-1.500 1.500H2q-1.500 0-1.500-1.500z" fill="#c9c9cb"/></svg>
<div style="left:1487px;top:297px;font-size:12px;color:#c9c9c9;white-space:nowrap;height:17px;line-height:17px;letter-spacing:-0.136px;">Dynamics</div>
<div style="left:1451px;top:320px;width:9px;height:9px;background:#f4f4f6;border:1px solid #8f90a8;"></div>
<div style="left:1453px;top:324px;width:5px;height:1px;background:#20203a;"></div>
<div style="left:1455px;top:322px;width:1px;height:5px;background:#20203a;"></div>
<div style="left:1460px;top:324px;width:5px;height:1px;border-top:1px dotted #5a5a5c;"></div>
<svg style="left:1466px;top:316px;" width="17" height="14" viewBox="0 0 17 14"><path d="M0.500 2q0-1.500 1.500-1.500h4.500l1.500 2h6q1.500 0 1.500 1.500v8q0 1.500-1.500 1.500H2q-1.500 0-1.500-1.500z" fill="#a9a9ab"/><path d="M0.500 5q0-1 1-1h13q1 0 1 1v7q0 1.500-1.500 1.500H2q-1.500 0-1.500-1.500z" fill="#c9c9cb"/></svg>
<div style="left:1487px;top:315px;font-size:12px;color:#c9c9c9;white-space:nowrap;height:17px;line-height:17px;letter-spacing:0.106px;">Dynamics - Multiband</div>
<div style="left:1451px;top:338px;width:9px;height:9px;background:#f4f4f6;border:1px solid #8f90a8;"></div>
<div style="left:1453px;top:342px;width:5px;height:1px;background:#20203a;"></div>
<div style="left:1455px;top:340px;width:1px;height:5px;background:#20203a;"></div>
<div style="left:1460px;top:342px;width:5px;height:1px;border-top:1px dotted #5a5a5c;"></div>
<svg style="left:1466px;top:334px;" width="17" height="14" viewBox="0 0 17 14"><path d="M0.500 2q0-1.500 1.500-1.500h4.500l1.500 2h6q1.500 0 1.500 1.500v8q0 1.500-1.500 1.500H2q-1.500 0-1.500-1.500z" fill="#a9a9ab"/><path d="M0.500 5q0-1 1-1h13q1 0 1 1v7q0 1.500-1.500 1.500H2q-1.500 0-1.500-1.500z" fill="#c9c9cb"/></svg>
<div style="left:1487px;top:333px;font-size:12px;color:#c9c9c9;white-space:nowrap;height:17px;line-height:17px;letter-spacing:-0.234px;">Effects</div>
<div style="left:1451px;top:356px;width:9px;height:9px;background:#f4f4f6;border:1px solid #8f90a8;"></div>
<div style="left:1453px;top:360px;width:5px;height:1px;background:#20203a;"></div>
<div style="left:1455px;top:358px;width:1px;height:5px;background:#20203a;"></div>
<div style="left:1460px;top:360px;width:5px;height:1px;border-top:1px dotted #5a5a5c;"></div>
<svg style="left:1466px;top:352px;" width="17" height="14" viewBox="0 0 17 14"><path d="M0.500 2q0-1.500 1.500-1.500h4.500l1.500 2h6q1.500 0 1.500 1.500v8q0 1.500-1.500 1.500H2q-1.500 0-1.500-1.500z" fill="#a9a9ab"/><path d="M0.500 5q0-1 1-1h13q1 0 1 1v7q0 1.500-1.500 1.500H2q-1.500 0-1.500-1.500z" fill="#c9c9cb"/></svg>
<div style="left:1487px;top:351px;font-size:12px;color:#c9c9c9;white-space:nowrap;height:17px;line-height:17px;letter-spacing:-0.600px;">EQ</div>
<div style="left:1451px;top:374px;width:9px;height:9px;background:#f4f4f6;border:1px solid #8f90a8;"></div>
<div style="left:1453px;top:378px;width:5px;height:1px;background:#20203a;"></div>
<div style="left:1455px;top:376px;width:1px;height:5px;background:#20203a;"></div>
<div style="left:1460px;top:378px;width:5px;height:1px;border-top:1px dotted #5a5a5c;"></div>
<svg style="left:1466px;top:370px;" width="17" height="14" viewBox="0 0 17 14"><path d="M0.500 2q0-1.500 1.500-1.500h4.500l1.500 2h6q1.500 0 1.500 1.500v8q0 1.500-1.500 1.500H2q-1.500 0-1.500-1.500z" fill="#a9a9ab"/><path d="M0.500 5q0-1 1-1h13q1 0 1 1v7q0 1.500-1.500 1.500H2q-1.500 0-1.500-1.500z" fill="#c9c9cb"/></svg>
<div style="left:1487px;top:369px;font-size:12px;color:#c9c9c9;white-space:nowrap;height:17px;line-height:17px;letter-spacing:-0.112px;">Filter</div>
<div style="left:1451px;top:392px;width:9px;height:9px;background:#f4f4f6;border:1px solid #8f90a8;"></div>
<div style="left:1453px;top:396px;width:5px;height:1px;background:#20203a;"></div>
<div style="left:1455px;top:394px;width:1px;height:5px;background:#20203a;"></div>
<div style="left:1460px;top:396px;width:5px;height:1px;border-top:1px dotted #5a5a5c;"></div>
<svg style="left:1466px;top:388px;" width="17" height="14" viewBox="0 0 17 14"><path d="M0.500 2q0-1.500 1.500-1.500h4.500l1.500 2h6q1.500 0 1.500 1.500v8q0 1.500-1.500 1.500H2q-1.500 0-1.500-1.500z" fill="#a9a9ab"/><path d="M0.500 5q0-1 1-1h13q1 0 1 1v7q0 1.500-1.500 1.500H2q-1.500 0-1.500-1.500z" fill="#c9c9cb"/></svg>
<div style="left:1487px;top:387px;font-size:12px;color:#c9c9c9;white-space:nowrap;height:17px;line-height:17px;letter-spacing:-0.112px;">Guitar</div>
<div style="left:1451px;top:410px;width:9px;height:9px;background:#f4f4f6;border:1px solid #8f90a8;"></div>
<div style="left:1453px;top:414px;width:5px;height:1px;background:#20203a;"></div>
<div style="left:1455px;top:412px;width:1px;height:5px;background:#20203a;"></div>
<div style="left:1460px;top:414px;width:5px;height:1px;border-top:1px dotted #5a5a5c;"></div>
<svg style="left:1466px;top:406px;" width="17" height="14" viewBox="0 0 17 14"><path d="M0.500 2q0-1.500 1.500-1.500h4.500l1.500 2h6q1.500 0 1.500 1.500v8q0 1.500-1.500 1.500H2q-1.500 0-1.500-1.500z" fill="#a9a9ab"/><path d="M0.500 5q0-1 1-1h13q1 0 1 1v7q0 1.500-1.500 1.500H2q-1.500 0-1.500-1.500z" fill="#c9c9cb"/></svg>
<div style="left:1487px;top:405px;font-size:12px;color:#c9c9c9;white-space:nowrap;height:17px;line-height:17px;letter-spacing:-0.054px;">Mastering</div>
<div style="left:1451px;top:428px;width:9px;height:9px;background:#f4f4f6;border:1px solid #8f90a8;"></div>
<div style="left:1453px;top:432px;width:5px;height:1px;background:#20203a;"></div>
<div style="left:1455px;top:430px;width:1px;height:5px;background:#20203a;"></div>
<div style="left:1460px;top:432px;width:5px;height:1px;border-top:1px dotted #5a5a5c;"></div>
<svg style="left:1466px;top:424px;" width="17" height="14" viewBox="0 0 17 14"><path d="M0.500 2q0-1.500 1.500-1.500h4.500l1.500 2h6q1.500 0 1.500 1.500v8q0 1.500-1.500 1.500H2q-1.500 0-1.500-1.500z" fill="#a9a9ab"/><path d="M0.500 5q0-1 1-1h13q1 0 1 1v7q0 1.500-1.500 1.500H2q-1.500 0-1.500-1.500z" fill="#c9c9cb"/></svg>
<div style="left:1487px;top:423px;font-size:12px;color:#c9c9c9;white-space:nowrap;height:17px;line-height:17px;letter-spacing:0.250px;">Modulation</div>
<div style="left:1451px;top:446px;width:9px;height:9px;background:#f4f4f6;border:1px solid #8f90a8;"></div>
<div style="left:1453px;top:450px;width:5px;height:1px;background:#20203a;"></div>
<div style="left:1455px;top:448px;width:1px;height:5px;background:#20203a;"></div>
<div style="left:1460px;top:450px;width:5px;height:1px;border-top:1px dotted #5a5a5c;"></div>
<svg style="left:1466px;top:442px;" width="17" height="14" viewBox="0 0 17 14"><path d="M0.500 2q0-1.500 1.500-1.500h4.500l1.500 2h6q1.500 0 1.500 1.500v8q0 1.500-1.500 1.500H2q-1.500 0-1.500-1.500z" fill="#a9a9ab"/><path d="M0.500 5q0-1 1-1h13q1 0 1 1v7q0 1.500-1.500 1.500H2q-1.500 0-1.500-1.500z" fill="#c9c9cb"/></svg>
<div style="left:1487px;top:441px;font-size:12px;color:#c9c9c9;white-space:nowrap;height:17px;line-height:17px;letter-spacing:-0.064px;">Pitch Shift</div>
<div style="left:1451px;top:464px;width:9px;height:9px;background:#f4f4f6;border:1px solid #8f90a8;"></div>
<div style="left:1453px;top:468px;width:5px;height:1px;background:#20203a;"></div>
<div style="left:1455px;top:466px;width:1px;height:5px;background:#20203a;"></div>
<div style="left:1460px;top:468px;width:5px;height:1px;border-top:1px dotted #5a5a5c;"></div>
<svg style="left:1466px;top:460px;" width="17" height="14" viewBox="0 0 17 14"><path d="M0.500 2q0-1.500 1.500-1.500h4.500l1.500 2h6q1.500 0 1.500 1.500v8q0 1.500-1.500 1.500H2q-1.500 0-1.500-1.500z" fill="#a9a9ab"/><path d="M0.500 5q0-1 1-1h13q1 0 1 1v7q0 1.500-1.500 1.500H2q-1.500 0-1.500-1.500z" fill="#c9c9cb"/></svg>
<div style="left:1487px;top:459px;font-size:12px;color:#c9c9c9;white-space:nowrap;height:17px;line-height:17px;letter-spacing:-0.205px;">Restoration</div>
<div style="left:1451px;top:482px;width:9px;height:9px;background:#f4f4f6;border:1px solid #8f90a8;"></div>
<div style="left:1453px;top:486px;width:5px;height:1px;background:#20203a;"></div>
<div style="left:1455px;top:484px;width:1px;height:5px;background:#20203a;"></div>
<div style="left:1460px;top:486px;width:5px;height:1px;border-top:1px dotted #5a5a5c;"></div>
<svg style="left:1466px;top:478px;" width="17" height="14" viewBox="0 0 17 14"><path d="M0.500 2q0-1.500 1.500-1.500h4.500l1.500 2h6q1.500 0 1.500 1.500v8q0 1.500-1.500 1.500H2q-1.500 0-1.500-1.500z" fill="#a9a9ab"/><path d="M0.500 5q0-1 1-1h13q1 0 1 1v7q0 1.500-1.500 1.500H2q-1.500 0-1.500-1.500z" fill="#c9c9cb"/></svg>
<div style="left:1487px;top:477px;font-size:12px;color:#c9c9c9;white-space:nowrap;height:17px;line-height:17px;letter-spacing:-0.565px;">Reverb</div>
<div style="left:1451px;top:500px;width:9px;height:9px;background:#f4f4f6;border:1px solid #8f90a8;"></div>
<div style="left:1453px;top:504px;width:5px;height:1px;background:#20203a;"></div>
<div style="left:1455px;top:502px;width:1px;height:5px;background:#20203a;"></div>
<div style="left:1460px;top:504px;width:5px;height:1px;border-top:1px dotted #5a5a5c;"></div>
<svg style="left:1466px;top:496px;" width="17" height="14" viewBox="0 0 17 14"><path d="M0.500 2q0-1.500 1.500-1.500h4.500l1.500 2h6q1.500 0 1.500 1.500v8q0 1.500-1.500 1.500H2q-1.500 0-1.500-1.500z" fill="#a9a9ab"/><path d="M0.500 5q0-1 1-1h13q1 0 1 1v7q0 1.500-1.500 1.500H2q-1.500 0-1.500-1.500z" fill="#c9c9cb"/></svg>
<div style="left:1487px;top:495px;font-size:12px;color:#c9c9c9;white-space:nowrap;height:17px;line-height:17px;letter-spacing:-0.209px;">Spatial + Panner</div>
<div style="left:1451px;top:518px;width:9px;height:9px;background:#f4f4f6;border:1px solid #8f90a8;"></div>
<div style="left:1453px;top:522px;width:5px;height:1px;background:#20203a;"></div>
<div style="left:1455px;top:520px;width:1px;height:5px;background:#20203a;"></div>
<div style="left:1460px;top:522px;width:5px;height:1px;border-top:1px dotted #5a5a5c;"></div>
<svg style="left:1466px;top:514px;" width="17" height="14" viewBox="0 0 17 14"><path d="M0.500 2q0-1.500 1.500-1.500h4.500l1.500 2h6q1.500 0 1.500 1.500v8q0 1.500-1.500 1.500H2q-1.500 0-1.500-1.500z" fill="#a9a9ab"/><path d="M0.500 5q0-1 1-1h13q1 0 1 1v7q0 1.500-1.500 1.500H2q-1.500 0-1.500-1.500z" fill="#c9c9cb"/></svg>
<div style="left:1487px;top:513px;font-size:12px;color:#c9c9c9;white-space:nowrap;height:17px;line-height:17px;letter-spacing:-0.390px;">StudioRack Local-DSPBased</div>
<div style="left:1451px;top:536px;width:9px;height:9px;background:#f4f4f6;border:1px solid #8f90a8;"></div>
<div style="left:1453px;top:540px;width:5px;height:1px;background:#20203a;"></div>
<div style="left:1455px;top:538px;width:1px;height:5px;background:#20203a;"></div>
<div style="left:1460px;top:540px;width:5px;height:1px;border-top:1px dotted #5a5a5c;"></div>
<svg style="left:1466px;top:532px;" width="17" height="14" viewBox="0 0 17 14"><path d="M0.500 2q0-1.500 1.500-1.500h4.500l1.500 2h6q1.500 0 1.500 1.500v8q0 1.500-1.500 1.500H2q-1.500 0-1.500-1.500z" fill="#a9a9ab"/><path d="M0.500 5q0-1 1-1h13q1 0 1 1v7q0 1.500-1.500 1.500H2q-1.500 0-1.500-1.500z" fill="#c9c9cb"/></svg>
<div style="left:1487px;top:531px;font-size:12px;color:#c9c9c9;white-space:nowrap;height:17px;line-height:17px;letter-spacing:-0.120px;">Surround</div>
<div style="left:1451px;top:554px;width:9px;height:9px;background:#f4f4f6;border:1px solid #8f90a8;"></div>
<div style="left:1453px;top:558px;width:5px;height:1px;background:#20203a;"></div>
<div style="left:1455px;top:556px;width:1px;height:5px;background:#20203a;"></div>
<div style="left:1460px;top:558px;width:5px;height:1px;border-top:1px dotted #5a5a5c;"></div>
<svg style="left:1466px;top:550px;" width="17" height="14" viewBox="0 0 17 14"><path d="M0.500 2q0-1.500 1.500-1.500h4.500l1.500 2h6q1.500 0 1.500 1.500v8q0 1.500-1.500 1.500H2q-1.500 0-1.500-1.500z" fill="#a9a9ab"/><path d="M0.500 5q0-1 1-1h13q1 0 1 1v7q0 1.500-1.500 1.500H2q-1.500 0-1.500-1.500z" fill="#c9c9cb"/></svg>
<div style="left:1487px;top:549px;font-size:12px;color:#c9c9c9;white-space:nowrap;height:17px;line-height:17px;letter-spacing:0.117px;">Tools</div>
<div style="left:1451px;top:572px;width:9px;height:9px;background:#f4f4f6;border:1px solid #8f90a8;"></div>
<div style="left:1453px;top:576px;width:5px;height:1px;background:#20203a;"></div>
<div style="left:1455px;top:574px;width:1px;height:5px;background:#20203a;"></div>
<div style="left:1460px;top:576px;width:5px;height:1px;border-top:1px dotted #5a5a5c;"></div>
<svg style="left:1466px;top:568px;" width="17" height="14" viewBox="0 0 17 14"><path d="M0.500 2q0-1.500 1.500-1.500h4.500l1.500 2h6q1.500 0 1.500 1.500v8q0 1.500-1.500 1.500H2q-1.500 0-1.500-1.500z" fill="#a9a9ab"/><path d="M0.500 5q0-1 1-1h13q1 0 1 1v7q0 1.500-1.500 1.500H2q-1.500 0-1.500-1.500z" fill="#c9c9cb"/></svg>
<div style="left:1487px;top:567px;font-size:12px;color:#c9c9c9;white-space:nowrap;height:17px;line-height:17px;letter-spacing:-0.167px;">Uncategorized</div>
<div style="left:1451px;top:590px;width:9px;height:9px;background:#f4f4f6;border:1px solid #8f90a8;"></div>
<div style="left:1453px;top:594px;width:5px;height:1px;background:#20203a;"></div>
<div style="left:1455px;top:592px;width:1px;height:5px;background:#20203a;"></div>
<div style="left:1460px;top:594px;width:5px;height:1px;border-top:1px dotted #5a5a5c;"></div>
<svg style="left:1466px;top:586px;" width="17" height="14" viewBox="0 0 17 14"><path d="M0.500 2q0-1.500 1.500-1.500h4.500l1.500 2h6q1.500 0 1.500 1.500v8q0 1.500-1.500 1.500H2q-1.500 0-1.500-1.500z" fill="#a9a9ab"/><path d="M0.500 5q0-1 1-1h13q1 0 1 1v7q0 1.500-1.500 1.500H2q-1.500 0-1.500-1.500z" fill="#c9c9cb"/></svg>
<div style="left:1487px;top:585px;font-size:12px;color:#c9c9c9;white-space:nowrap;height:17px;line-height:17px;letter-spacing:-0.310px;">Vocals</div>
<div style="left:1451px;top:608px;width:9px;height:9px;background:#f4f4f6;border:1px solid #8f90a8;"></div>
<div style="left:1453px;top:612px;width:5px;height:1px;background:#20203a;"></div>
<div style="left:1455px;top:610px;width:1px;height:5px;background:#20203a;"></div>
<div style="left:1460px;top:612px;width:5px;height:1px;border-top:1px dotted #5a5a5c;"></div>
<svg style="left:1466px;top:604px;" width="17" height="14" viewBox="0 0 17 14"><path d="M0.500 2q0-1.500 1.500-1.500h4.500l1.500 2h6q1.500 0 1.500 1.500v8q0 1.500-1.500 1.500H2q-1.500 0-1.500-1.500z" fill="#a9a9ab"/><path d="M0.500 5q0-1 1-1h13q1 0 1 1v7q0 1.500-1.500 1.500H2q-1.500 0-1.500-1.500z" fill="#c9c9cb"/></svg>
<div style="left:1487px;top:603px;font-size:12px;color:#c9c9c9;white-space:nowrap;height:17px;line-height:17px;letter-spacing:-0.160px;">Цепочка эффектов</div>
<div style="left:1456px;top:630px;width:10px;height:1px;border-top:1px dotted #5a5a5c;"></div>
<div style="left:1467px;top:623px;width:14px;height:14px;background:#3a3a3c;border:1px solid #505052;"></div>
<svg style="left:1468px;top:624px;" width="12" height="12" viewBox="0 0 12 12"><path d="M2.500 1l2.500 2.500L7.500 1M2.500 5.500L5 3M7.500 5.500L5 3" stroke="#f2f2f2" stroke-width="1.200" fill="none" transform="translate(1 0)"/></svg>
<div class="b" style="left:1468px;top:629px;font-size:6px;color:#f2f2f2;white-space:nowrap;width:12px;height:7px;line-height:7px;text-align:center;">FX</div>
<div style="left:1487px;top:621px;font-size:12px;color:#c9c9c9;white-space:nowrap;height:17px;line-height:17px;letter-spacing:0.017px;">Внешнее подключение</div>
<div style="left:1439px;top:938px;font-size:11px;color:#9c9c9c;white-space:nowrap;height:15px;line-height:15px;letter-spacing:0.018px;">657 Plug-ins</div>
<div style="left:228px;top:959px;width:1451px;height:25px;background:#4b4c4d;border-radius:6px;"></div>
<div style="left:316px;top:963px;width:1360px;height:19px;background:#3c3d3e;"></div>
<div class="b" style="left:238px;top:963px;font-size:12px;color:#c9c9c9;white-space:nowrap;height:20px;line-height:20px;">Консоль</div>
<svg style="left:301px;top:968px;" width="10" height="10" viewBox="0 0 10 10"><path d="M1 1l8 8M9 1l-8 8" stroke="#c9c9c9" stroke-width="1.700"/></svg>
<div style="left:316px;top:963px;width:281px;height:19px;background:linear-gradient(#4f5051,#444546);border-left:1px solid #5e5f60;border-right:1px solid #2c2d2e;"></div>
<div style="left:331px;top:963px;font-size:12px;color:#c2c2c2;white-space:nowrap;height:19px;line-height:19px;letter-spacing:0.180px;">Ленточная нотация - Несколько дорожек</div>
<div style="left:598px;top:963px;width:1078px;height:19px;background:linear-gradient(#4f5051,#444546);border-left:1px solid #5e5f60;"></div>
<svg style="left:1656px;top:967px;" width="9" height="11" viewBox="0 0 9 11"><path d="M0.500 5h8L4.500 0.500zM0.500 10.500h8L4.500 6z" fill="#e8e8e8"/></svg>
<div style="left:0px;top:988px;width:1680px;height:41px;background:linear-gradient(90deg,#5b5620,#57531f 40%,#5e5a22 60%,#5a5620);"></div>
<svg style="left:16px;top:1001px;" width="17" height="16" viewBox="0 0 17 16"><path d="M0 2.300l7-1v6.400H0zM8 1.200L17 0v7.700H8zM0 8.700h7v6.400l-7-1zM8 8.700h9V16l-9-1.200z" fill="#ffffff"/></svg>
<svg style="left:64px;top:999px;" width="23" height="20" viewBox="0 0 23 20"><path d="M1 2h7l2 2h12v14H1z" fill="#f7d774"/><path d="M1 7h21v11H1z" fill="#fbe7a0"/><path d="M5 11h13v7H5z" fill="#4aa3e0"/><path d="M8 13h7v5H8z" fill="#fbe7a0"/></svg>
<div style="left:55px;top:1027px;width:35px;height:2px;background:#cdc98a;"></div>
<div style="left:90px;top:1027px;width:5px;height:2px;background:#a8a46a;"></div>
<svg style="left:111px;top:993px;" width="26" height="28" viewBox="0 0 26 28"><defs><linearGradient id="ffg" x1="0.9" y1="0.1" x2="0.15" y2="0.9"><stop offset="0" stop-color="#ffd23a"/><stop offset="0.45" stop-color="#ff9a1e"/><stop offset="1" stop-color="#e8312e"/></linearGradient><linearGradient id="ffb" x1="0" y1="0" x2="1" y2="1"><stop offset="0" stop-color="#2e7ae6"/><stop offset="1" stop-color="#5a3cc0"/></linearGradient></defs><circle cx="12.500" cy="15" r="11.500" fill="url(#ffg)"/><path d="M13 1q4 2 4.500 6 3 1 4 4.500Q19 9 16 9.500 12 6 13 1z" fill="#ffcf3a"/><path d="M11 2.500q1.500 2.500 4 4l-2 4-4.500-1.500Q8.500 5 11 2.500z" fill="#2e6ae0"/><circle cx="13" cy="13.500" r="5.800" fill="url(#ffb)"/><path d="M4 9.500q2.500-1 4.500.500 2 2 5 1.500-1.500 1.500-1 3 2 3.500 6 1.500-1 4.500-6 5-6.500 0-8.500-6.500-.500-3 0-5.500z" fill="#f0452c"/><path d="M8 12.500q2 1 4 .300-1 1.500-.500 2.700-2.500 0-3.500-3z" fill="#ff7a2a"/></svg>
<div style="left:104px;top:1027px;width:40px;height:2px;background:#cdc98a;"></div>
<div style="left:153px;top:988px;width:40px;height:41px;background:#9c9834;"></div>
<svg style="left:161px;top:994px;" width="26" height="30" viewBox="0 0 26 30"><path d="M1.500 8.500L21 2l1.500 4L3 12.500z" fill="#1c1c1c"/><path d="M4.500 7.600l2.200 3.400M8.500 6.300l2.200 3.400M12.500 5l2.200 3.400M16.500 3.700l2.200 3.400" stroke="#f4f4f4" stroke-width="1.900"/><path d="M20 2.400l1 2.800" stroke="#f0d040" stroke-width="1.400"/><rect x="2.500" y="12" width="21" height="14.500" fill="#fafafa" stroke="#2a2a2a" stroke-width="1"/><rect x="12.500" y="13" width="4.500" height="15.500" fill="#a9b4e6" stroke="#5a64a8" stroke-width="0.600"/><rect x="18" y="14.500" width="4" height="14" fill="#7d96e8" stroke="#4a5aa8" stroke-width="0.600"/></svg>
<div class="b" style="left:165px;top:1007px;font-size:13px;color:#c4642c;white-space:nowrap;height:14px;line-height:14px;">3</div>
<div style="left:153px;top:1027px;width:40px;height:2px;background:#f4f062;"></div>
<div style="left:198px;top:988px;width:49px;height:41px;background:#7e7b2c;"></div>
<div style="left:210px;top:997px;width:24px;height:24px;background:linear-gradient(#f2683a,#e4532a);"></div>
<div style="left:218px;top:1009px;width:3px;height:3px;background:#ffd9c8;"></div>
<div style="left:218px;top:1013px;width:3px;height:2px;background:#ffd9c8;"></div>
<div style="left:223px;top:1005px;width:3px;height:3px;background:#ffd9c8;"></div>
<div style="left:223px;top:1009px;width:3px;height:3px;background:#ffd9c8;"></div>
<div style="left:223px;top:1013px;width:3px;height:2px;background:#ffd9c8;"></div>
<div style="left:198px;top:1027px;width:49px;height:2px;background:#dcd87c;"></div>
<svg style="left:1458px;top:1003px;" width="14" height="9" viewBox="0 0 14 9"><path d="M1 8l6-6 6 6" stroke="#fff" stroke-width="1.400" fill="none"/></svg>
<svg style="left:1481px;top:1001px;" width="18" height="16" viewBox="0 0 18 16"><rect x="4.500" y="3.500" width="12" height="8" stroke="#fff" stroke-width="1.200" fill="none"/><path d="M10.500 11.500v3M7 15h7" stroke="#fff" stroke-width="1.200"/><rect x="0.600" y="0.600" width="5" height="4" stroke="#fff" stroke-width="1.100" fill="#5a5620"/><path d="M3 4.500V8h1.500" stroke="#fff" stroke-width="1" fill="none"/></svg>
<svg style="left:1504px;top:1001px;" width="18" height="16" viewBox="0 0 18 16"><path d="M1.500 5.500h3l4-3.500v12l-4-3.500h-3z" stroke="#fff" stroke-width="1.200" fill="none"/><path d="M10.500 5.500q1.500 2.500 0 5" stroke="#fff" stroke-width="1.100" fill="none"/><path d="M12.500 4q2.500 4 0 8" stroke="#ccc" stroke-width="1" fill="none"/><path d="M14.500 2.500q3.500 5.500 0 11" stroke="#999" stroke-width="1" fill="none"/></svg>
<div style="left:1531px;top:1001px;font-size:11px;color:#fff;white-space:nowrap;height:16px;line-height:16px;">ENG</div>
<div style="left:1559px;top:992px;font-size:12px;color:#fff;white-space:nowrap;width:68px;height:16px;line-height:16px;text-align:center;letter-spacing:-0.700px;">19:51</div>
<div style="left:1560px;top:1010px;font-size:12px;color:#fff;white-space:nowrap;width:70px;height:16px;line-height:16px;text-align:center;letter-spacing:-0.600px;">18.03.2019</div>
<svg style="left:1639px;top:999px;" width="18" height="17" viewBox="0 0 18 17"><path d="M1 1h15v11H8l-3.500 3.500V12H1z" fill="#fff"/><path d="M3.500 4h10M3.500 6.500h10M3.500 9h10" stroke="#5a5620" stroke-width="1"/></svg>
<svg style="left:1646px;top:1008px;" width="16" height="16" viewBox="0 0 16 16"><circle cx="8" cy="8" r="7" fill="#77731f" stroke="#a29e44" stroke-width="1.400"/></svg>
<div class="b" style="left:1646px;top:1008px;font-size:10px;color:#fff;white-space:nowrap;width:16px;height:16px;line-height:16px;text-align:center;">1</div>
<div style="left:1675px;top:988px;width:1px;height:41px;background:#8a8650;"></div>
<div style="left:397px;top:473px;width:219px;height:156px;background:#f0f0f0;border:1px solid #a8a8a8;box-shadow:2px 2px 3px rgba(0,0,0,.45);"></div>
<div style="left:400px;top:476px;width:19px;height:150px;background:linear-gradient(90deg,#e9e9e9,#dcdcdc);"></div>
<div style="left:399px;top:576px;width:216px;height:20px;background:#91c9f7;"></div>
<div style="left:422px;top:477px;font-size:12px;color:#111;white-space:nowrap;height:17px;line-height:17px;letter-spacing:-0.005px;">1-MT-PowerDrumKit 1</div>
<div style="left:422px;top:497px;font-size:12px;color:#111;white-space:nowrap;height:17px;line-height:17px;letter-spacing:-0.180px;">2-Kontakt 5 1</div>
<div style="left:422px;top:517px;font-size:12px;color:#111;white-space:nowrap;height:17px;line-height:17px;letter-spacing:-0.302px;">3-Egoist 1</div>
<div style="left:422px;top:537px;font-size:12px;color:#111;white-space:nowrap;height:17px;line-height:17px;letter-spacing:-0.003px;">4-DM1-</div>
<div style="left:422px;top:557px;font-size:12px;color:#111;white-space:nowrap;height:17px;line-height:17px;letter-spacing:-0.153px;">5-DM2-Alesis DM5 Industrial Set</div>
<div style="left:422px;top:578px;font-size:12px;color:#111;white-space:nowrap;height:17px;line-height:17px;letter-spacing:-0.207px;">Новая карта ударных</div>
<div style="left:422px;top:608px;font-size:12px;color:#111;white-space:nowrap;height:17px;line-height:17px;letter-spacing:-0.132px;">Управление картами ударных...</div>
<div style="left:401px;top:538px;width:15px;height:15px;background:#e4e4e4;border:1px solid #bcbcbc;"></div>
<svg style="left:403px;top:540px;" width="11" height="11" viewBox="0 0 11 11"><path d="M1.500 5.500l2.500 3 5-7" stroke="#000" stroke-width="2" fill="none"/></svg>
<svg style="left:606px;top:581px;" width="5" height="9" viewBox="0 0 5 9"><path d="M0.500 0.500v8l4-4z" fill="#fafafa"/></svg>
<div style="left:400px;top:601px;width:213px;height:1px;background:#b4b4b4;"></div>
<div style="left:615px;top:0px;width:283px;height:1029px;background:#f0f0f0;border-left:1px solid #b0b0b0;border-right:1px solid #b0b0b0;box-shadow:2px 0 3px rgba(0,0,0,.35);"></div>
<div style="left:622px;top:10px;width:16px;height:997px;background:linear-gradient(90deg,#ececec,#d9d9d9);"></div>
<svg style="left:634px;top:0px;" width="10" height="3" viewBox="0 0 10 3"><path d="M0 3h10L5 -2z" fill="#000"/></svg>
<svg style="left:635px;top:1016px;" width="10" height="6" viewBox="0 0 10 6"><path d="M0 0.500h10L5 5.500z" fill="#000"/></svg>
<div style="left:641px;top:11px;font-size:12px;color:#111;white-space:nowrap;height:17px;line-height:17px;letter-spacing:-0.295px;">Edirol SD-90 Gated Power (Enhanced)</div>
<div style="left:641px;top:31px;font-size:12px;color:#111;white-space:nowrap;height:17px;line-height:17px;letter-spacing:-0.495px;">Edirol SD-90 Jazz Set (Classical)</div>
<div style="left:641px;top:51px;font-size:12px;color:#111;white-space:nowrap;height:17px;line-height:17px;letter-spacing:-0.397px;">Edirol SD-90 Jazz Set (Default)</div>
<div style="left:641px;top:71px;font-size:12px;color:#111;white-space:nowrap;height:17px;line-height:17px;letter-spacing:-0.447px;">Edirol SD-90 Jazz Set (Enhanced)</div>
<div style="left:641px;top:91px;font-size:12px;color:#111;white-space:nowrap;height:17px;line-height:17px;letter-spacing:-0.475px;">Edirol SD-90 Jazz Set (Solo)</div>
<div style="left:641px;top:111px;font-size:12px;color:#111;white-space:nowrap;height:17px;line-height:17px;letter-spacing:-0.350px;">Edirol SD-90 Orchestra Set (Classical)</div>
<div style="left:641px;top:131px;font-size:12px;color:#111;white-space:nowrap;height:17px;line-height:17px;letter-spacing:-0.277px;">Edirol SD-90 Orchestra Set (Contemp)</div>
<div style="left:641px;top:151px;font-size:12px;color:#111;white-space:nowrap;height:17px;line-height:17px;letter-spacing:-0.258px;">Edirol SD-90 Orchestra Set (Default)</div>
<div style="left:641px;top:171px;font-size:12px;color:#111;white-space:nowrap;height:17px;line-height:17px;letter-spacing:-0.306px;">Edirol SD-90 Orchestra Set (Enhanced)</div>
<div style="left:641px;top:191px;font-size:12px;color:#111;white-space:nowrap;height:17px;line-height:17px;letter-spacing:-0.312px;">Edirol SD-90 Orchestra Set (Solo)</div>
<div style="left:641px;top:211px;font-size:12px;color:#111;white-space:nowrap;height:17px;line-height:17px;letter-spacing:-0.372px;">Edirol SD-90 Power Set (Classical)</div>
<div style="left:641px;top:231px;font-size:12px;color:#111;white-space:nowrap;height:17px;line-height:17px;letter-spacing:-0.270px;">Edirol SD-90 Power Set (Default)</div>
<div style="left:641px;top:251px;font-size:12px;color:#111;white-space:nowrap;height:17px;line-height:17px;letter-spacing:-0.333px;">Edirol SD-90 Power Set (Solo)</div>
<div style="left:641px;top:271px;font-size:12px;color:#111;white-space:nowrap;height:17px;line-height:17px;letter-spacing:-0.324px;">Edirol SD-90 Rave Set (Contemporary)</div>
<div style="left:641px;top:291px;font-size:12px;color:#111;white-space:nowrap;height:17px;line-height:17px;letter-spacing:-0.384px;">Edirol SD-90 Room Set (Classical)</div>
<div style="left:641px;top:311px;font-size:12px;color:#111;white-space:nowrap;height:17px;line-height:17px;letter-spacing:-0.279px;">Edirol SD-90 Room Set (Default)</div>
<div style="left:641px;top:331px;font-size:12px;color:#111;white-space:nowrap;height:17px;line-height:17px;letter-spacing:-0.333px;">Edirol SD-90 Room Set (Enhanced)</div>
<div style="left:641px;top:351px;font-size:12px;color:#111;white-space:nowrap;height:17px;line-height:17px;letter-spacing:-0.345px;">Edirol SD-90 Room Set (Solo)</div>
<div style="left:641px;top:371px;font-size:12px;color:#111;white-space:nowrap;height:17px;line-height:17px;letter-spacing:-0.368px;">Edirol SD-90 Rust Set (Solo)</div>
<div style="left:641px;top:391px;font-size:12px;color:#111;white-space:nowrap;height:17px;line-height:17px;letter-spacing:-0.499px;">Edirol SD-90 SFX Set (Classical)</div>
<div style="left:641px;top:411px;font-size:12px;color:#111;white-space:nowrap;height:17px;line-height:17px;letter-spacing:-0.371px;">Edirol SD-90 SFX Set (Contemporary)</div>
<div style="left:641px;top:431px;font-size:12px;color:#111;white-space:nowrap;height:17px;line-height:17px;letter-spacing:-0.399px;">Edirol SD-90 SFX Set (Default)</div>
<div style="left:641px;top:451px;font-size:12px;color:#111;white-space:nowrap;height:17px;line-height:17px;letter-spacing:-0.451px;">Edirol SD-90 SFX Set (Enhanced)</div>
<div style="left:641px;top:471px;font-size:12px;color:#111;white-space:nowrap;height:17px;line-height:17px;letter-spacing:-0.480px;">Edirol SD-90 SFX Set (Solo)</div>
<div style="left:641px;top:491px;font-size:12px;color:#111;white-space:nowrap;height:17px;line-height:17px;letter-spacing:-0.360px;">Edirol SD-90 Standard Set (Classical)</div>
<div style="left:641px;top:511px;font-size:12px;color:#111;white-space:nowrap;height:17px;line-height:17px;letter-spacing:-0.266px;">Edirol SD-90 Standard Set (Default)</div>
<div style="left:641px;top:531px;font-size:12px;color:#111;white-space:nowrap;height:17px;line-height:17px;letter-spacing:-0.315px;">Edirol SD-90 Standard Set (Enhanced)</div>
<div style="left:641px;top:551px;font-size:12px;color:#111;white-space:nowrap;height:17px;line-height:17px;letter-spacing:-0.322px;">Edirol SD-90 Standard Set (Solo)</div>
<div style="left:641px;top:571px;font-size:12px;color:#111;white-space:nowrap;height:17px;line-height:17px;letter-spacing:-0.268px;">Edirol SD-90 Techno Set (Enhanced)</div>
<div style="left:641px;top:591px;font-size:12px;color:#111;white-space:nowrap;height:17px;line-height:17px;letter-spacing:-0.246px;">Ensoniq SQ1 All Purpose Kit</div>
<div style="left:641px;top:611px;font-size:12px;color:#111;white-space:nowrap;height:17px;line-height:17px;letter-spacing:-0.332px;">Ensoniq SQ1 Ballad Kit</div>
<div style="left:641px;top:631px;font-size:12px;color:#111;white-space:nowrap;height:17px;line-height:17px;letter-spacing:-0.363px;">Ensoniq SQ1 Beefy Kit</div>
<div style="left:641px;top:651px;font-size:12px;color:#111;white-space:nowrap;height:17px;line-height:17px;letter-spacing:-0.271px;">Ensoniq SQ1 Big Ol' Rock Kit</div>
<div style="left:641px;top:671px;font-size:12px;color:#111;white-space:nowrap;height:17px;line-height:17px;letter-spacing:-0.316px;">Ensoniq SQ1 Fusion Kit</div>
<div style="left:641px;top:691px;font-size:12px;color:#111;white-space:nowrap;height:17px;line-height:17px;letter-spacing:-0.187px;">Ensoniq SQ1 Hip Hop Kit</div>
<div style="left:641px;top:711px;font-size:12px;color:#111;white-space:nowrap;height:17px;line-height:17px;letter-spacing:-0.211px;">Ensoniq SQ1 Hybrid Kit</div>
<div style="left:641px;top:731px;font-size:12px;color:#111;white-space:nowrap;height:17px;line-height:17px;letter-spacing:-0.284px;">Ensoniq SQ1 Latin Kit</div>
<div style="left:641px;top:751px;font-size:12px;color:#111;white-space:nowrap;height:17px;line-height:17px;letter-spacing:-0.175px;">Ensoniq SQ1 Ol' Faithful Kit</div>
<div style="left:641px;top:771px;font-size:12px;color:#111;white-space:nowrap;height:17px;line-height:17px;letter-spacing:-0.277px;">Ensoniq SQ1 Out Kit</div>
<div style="left:641px;top:791px;font-size:12px;color:#111;white-space:nowrap;height:17px;line-height:17px;letter-spacing:-0.374px;">Ensoniq SQ1 Percussion 1</div>
<div style="left:641px;top:811px;font-size:12px;color:#111;white-space:nowrap;height:17px;line-height:17px;letter-spacing:-0.374px;">Ensoniq SQ1 Percussion 2</div>
<div style="left:641px;top:831px;font-size:12px;color:#111;white-space:nowrap;height:17px;line-height:17px;letter-spacing:-0.363px;">Ensoniq SQ1 R&amp;B Kit 1</div>
<div style="left:641px;top:851px;font-size:12px;color:#111;white-space:nowrap;height:17px;line-height:17px;letter-spacing:-0.363px;">Ensoniq SQ1 R&amp;B Kit 2</div>
<div style="left:641px;top:871px;font-size:12px;color:#111;white-space:nowrap;height:17px;line-height:17px;letter-spacing:-0.331px;">Ensoniq SQ1 Synth Kit 1</div>
<div style="left:641px;top:891px;font-size:12px;color:#111;white-space:nowrap;height:17px;line-height:17px;letter-spacing:-0.331px;">Ensoniq SQ1 Synth Kit 2</div>
<div style="left:641px;top:911px;font-size:12px;color:#111;white-space:nowrap;height:17px;line-height:17px;letter-spacing:-0.229px;">Ensoniq SQ1 Top Forty Kit</div>
<div style="left:641px;top:931px;font-size:12px;color:#111;white-space:nowrap;height:17px;line-height:17px;letter-spacing:-0.280px;">GM Drums (Basic Kit)</div>
<div style="left:641px;top:951px;font-size:12px;color:#111;white-space:nowrap;height:17px;line-height:17px;letter-spacing:-0.201px;">GM Drums (Complete Kit)</div>
<div style="left:641px;top:971px;font-size:12px;color:#111;white-space:nowrap;height:17px;line-height:17px;letter-spacing:-0.312px;">GM Drums (Cymbals)</div>
<div style="left:641px;top:991px;font-size:12px;color:#111;white-space:nowrap;height:17px;line-height:17px;letter-spacing:-0.240px;">GM Drums (Toms)</div>
</body></html>
